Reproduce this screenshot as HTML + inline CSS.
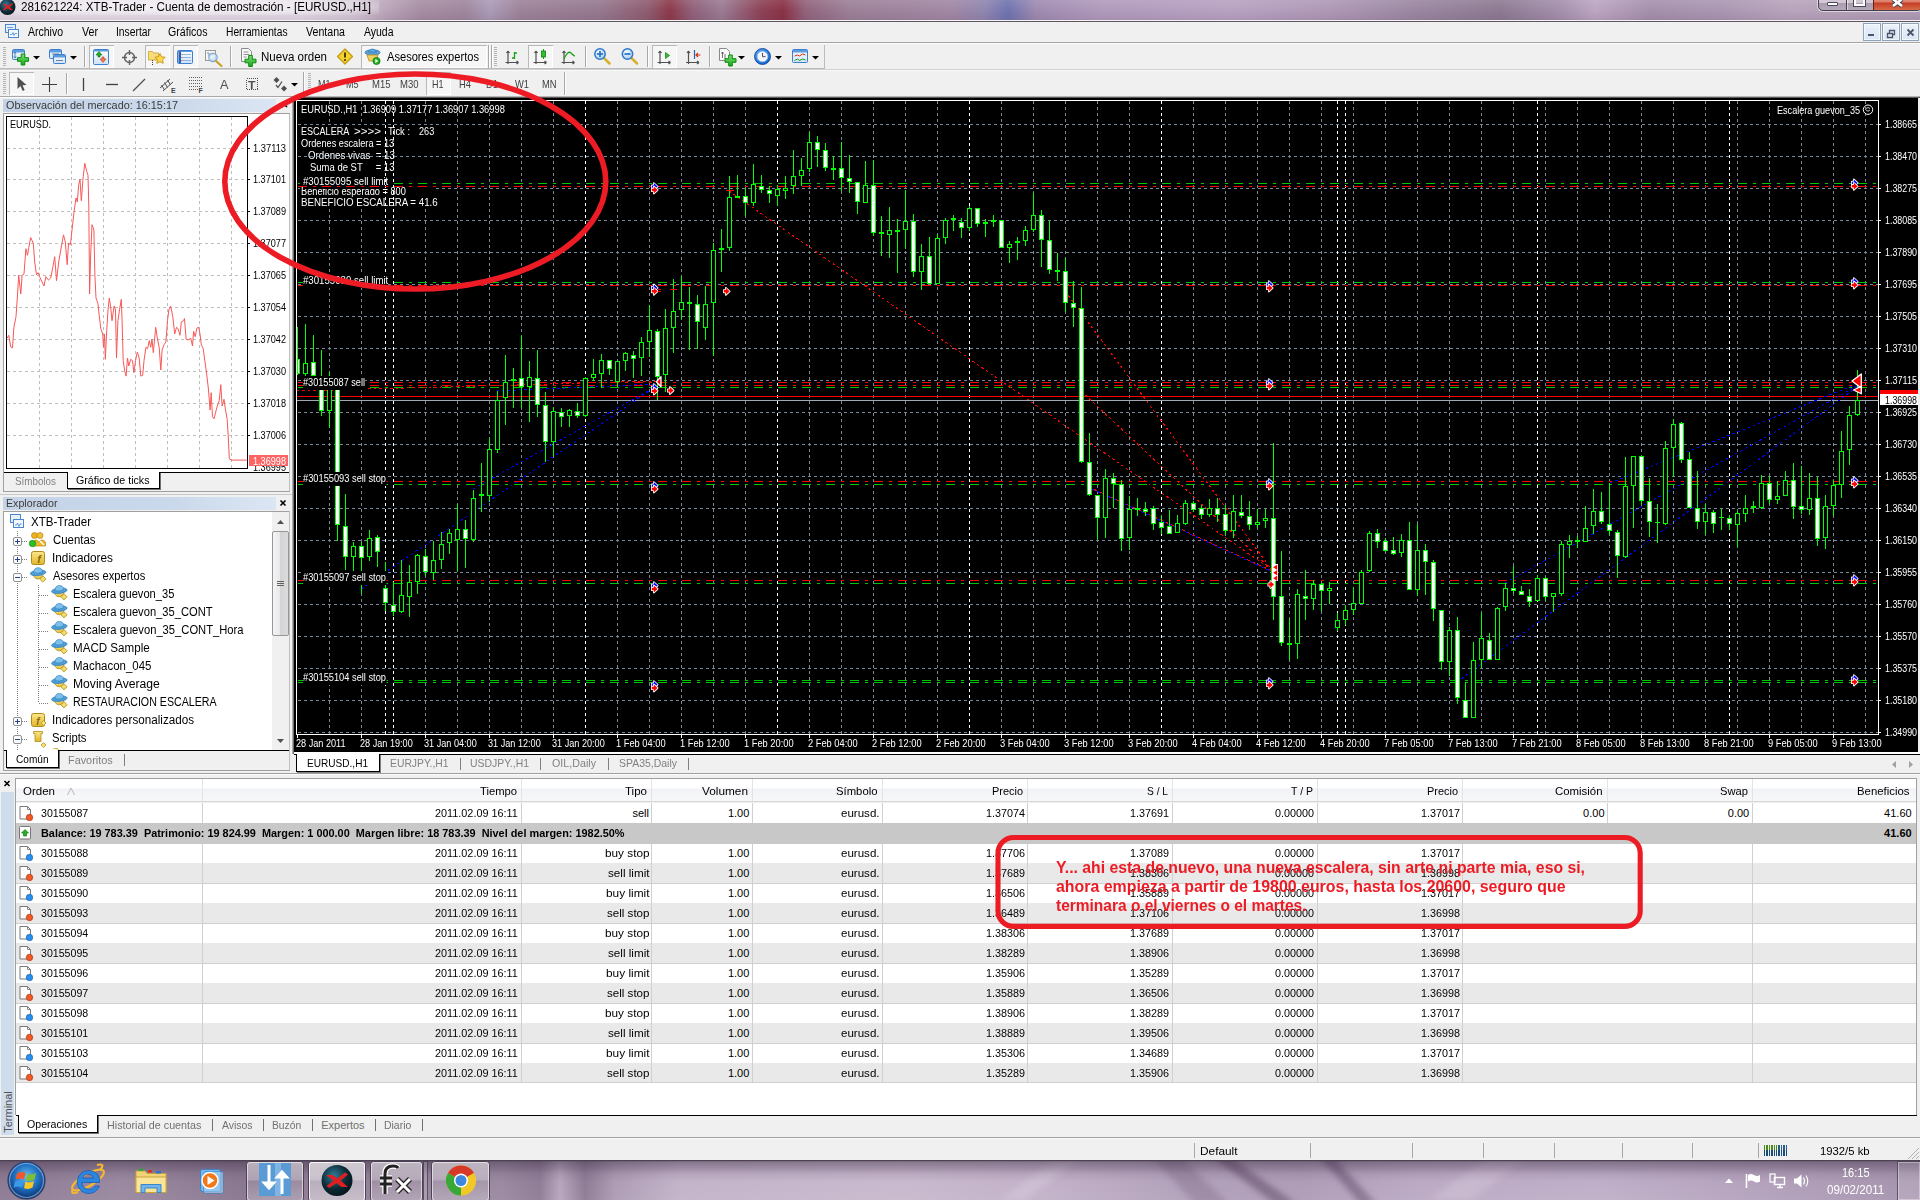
<!DOCTYPE html>
<html><head><meta charset="utf-8"><title>MT4</title>
<style>
html,body{margin:0;padding:0;}
body{width:1920px;height:1200px;overflow:hidden;position:relative;background:#f0f0f0;font-family:"Liberation Sans",sans-serif;}
.t{position:absolute;white-space:pre;transform-origin:0 50%;}
.r{position:absolute;}
svg{position:absolute;left:0;top:0;}
</style></head><body>
<div class="r" style="left:0px;top:0px;width:1920px;height:21px;background:linear-gradient(90deg,#e2d8e2 0,#e7dfe9 60px,#e2d9e4 300px,#d3c6d5 355px,#bba6ba 385px,#a78ea4 420px,#9f879d 465px,#ab9cb8 490px,#9d8399 520px,#95798f 600px,#8f5c70 648px,#8c3a4a 670px,#906079 692px,#9a7c94 722px,#8e4458 760px,#8a3246 783px,#92647c 806px,#9c8098 850px,#a288a4 950px,#8f86b0 985px,#6e74b0 1008px,#9f8bb0 1036px,#b09abc 1100px,#b8a2c2 1230px,#ae98b6 1330px,#9a86a0 1420px,#8d7a92 1500px,#a48fac 1560px,#bca6c2 1595px,#a590ac 1650px,#aa96b2 1720px,#b8a4bc 1790px,#b09cb6 1920px);"></div>
<div class="r" style="left:0px;top:0px;width:1920px;height:21px;background:linear-gradient(180deg,rgba(255,255,255,.10) 0,rgba(255,255,255,0) 50%,rgba(60,30,60,.10) 100%);"></div>
<div class="r" style="left:14px;top:0;width:365px;height:15px;background:radial-gradient(ellipse at 50% 45%,rgba(255,255,255,.55) 0,rgba(255,255,255,.35) 55%,rgba(255,255,255,0) 100%);"></div>
<div class="r" style="left:0px;top:20px;width:1920px;height:1px;background:#f6f2f6;"></div>
<div class="r" style="left:0px;top:21px;width:1920px;height:1px;background:#5c5660;"></div>
<svg width="1920" height="1200" viewBox="0 0 1920 1200"><defs><radialGradient id="ig" cx="40%" cy="35%" r="70%"><stop offset="0" stop-color="#3a7c9c"/><stop offset="0.6" stop-color="#10303c"/><stop offset="1" stop-color="#05141a"/></radialGradient></defs><circle cx="7.5" cy="7" r="8" fill="url(#ig)"/><path d="M3,4 L6,4 L8,6 L12,3 L13,4 L9.5,7 L13,10 L10,10 L7.5,8 L4,10.5 L3,9.5 L6,7 Z" fill="#e02020"/></svg>
<span class="t" style="left:21.00px;top:-1px;font-size:12.5px;line-height:17px;color:#000;transform:scaleX(0.9323);">281621224: XTB-Trader - Cuenta de demostración - [EURUSD.,H1]</span>
<div class="r" style="left:1818px;top:-6px;width:104px;height:17px;border:1px solid #45404c;border-radius:0 0 5px 5px;box-sizing:border-box;box-shadow:0 0 0 1px rgba(255,255,255,.55);background:linear-gradient(180deg,#d8cfdc 0,#d0c6d4 50%,#a89cae 52%,#b5a8ba 100%);"></div>
<div class="r" style="left:1873px;top:-5px;width:47px;height:15px;border-radius:0 0 4px 0;background:linear-gradient(180deg,#e8a090 0,#dc7c68 48%,#c43c24 52%,#d86a48 100%);border-left:1px solid #6a2018;"></div>
<div class="r" style="left:1846px;top:-5px;width:1px;height:15px;background:#45404c;"></div>
<div class="r" style="left:1847px;top:-5px;width:1px;height:15px;background:rgba(255,255,255,.5);"></div>
<div class="r" style="left:1827px;top:2px;width:11px;height:4px;background:#fff;border:1px solid #4a4858;border-radius:1px;box-sizing:border-box;"></div>
<div class="r" style="left:1854px;top:-3px;width:11px;height:9px;border:2px solid #fff;outline:1px solid #4a4858;box-sizing:border-box;"></div>
<svg width="1920" height="1200" viewBox="0 0 1920 1200"><path d="M1893,-1 L1902,6 M1902,-1 L1893,6" stroke="#4a4858" stroke-width="4.5"/><path d="M1893,-1 L1902,6 M1902,-1 L1893,6" stroke="#fff" stroke-width="2.6"/></svg>
<div class="r" style="left:0px;top:22px;width:1920px;height:20px;background:#f0f0f0;"></div>
<div class="r" style="left:0px;top:42px;width:1920px;height:1px;background:#a5a5a5;"></div>
<div class="r" style="left:0px;top:43px;width:1920px;height:1px;background:#fbfbfb;"></div>
<span class="t" style="left:28.00px;top:24px;font-size:12px;line-height:16px;color:#000;transform:scaleX(0.8747);">Archivo</span>
<span class="t" style="left:82.00px;top:24px;font-size:12px;line-height:16px;color:#000;transform:scaleX(0.8883);">Ver</span>
<span class="t" style="left:116.00px;top:24px;font-size:12px;line-height:16px;color:#000;transform:scaleX(0.8603);">Insertar</span>
<span class="t" style="left:168.00px;top:24px;font-size:12px;line-height:16px;color:#000;transform:scaleX(0.8841);">Gráficos</span>
<span class="t" style="left:226.00px;top:24px;font-size:12px;line-height:16px;color:#000;transform:scaleX(0.8539);">Herramientas</span>
<span class="t" style="left:306.00px;top:24px;font-size:12px;line-height:16px;color:#000;transform:scaleX(0.8855);">Ventana</span>
<span class="t" style="left:364.00px;top:24px;font-size:12px;line-height:16px;color:#000;transform:scaleX(0.8726);">Ayuda</span>
<svg width="1920" height="1200" viewBox="0 0 1920 1200" shape-rendering="crispEdges"><rect x="5.5" y="24.5" width="10" height="8" fill="#e6f0fb" stroke="#4a86d0"/><rect x="8.5" y="29.5" width="10" height="8" fill="#f4f9ff" stroke="#4a86d0"/><path d="M10,34.5 h2 l1,-2 l1,3 l1,-2 h2" stroke="#4a86d0" fill="none" shape-rendering="auto" stroke-width="0.8"/><path d="M7,27.5 h6" stroke="#4a86d0" stroke-width="0.8"/></svg>
<div class="r" style="left:1863px;top:23px;width:18px;height:18px;box-sizing:border-box;border:1px solid #8fa3b9;background:linear-gradient(180deg,#eef4fb 0,#e3edf8 30%,#d9e6f5 100%);box-shadow:inset 0 0 0 1px rgba(255,255,255,.6);"></div>
<div class="r" style="left:1882px;top:23px;width:18px;height:18px;box-sizing:border-box;border:1px solid #8fa3b9;background:linear-gradient(180deg,#eef4fb 0,#e3edf8 30%,#d9e6f5 100%);box-shadow:inset 0 0 0 1px rgba(255,255,255,.6);"></div>
<div class="r" style="left:1901px;top:23px;width:18px;height:18px;box-sizing:border-box;border:1px solid #8fa3b9;background:linear-gradient(180deg,#eef4fb 0,#e3edf8 30%,#d9e6f5 100%);box-shadow:inset 0 0 0 1px rgba(255,255,255,.6);"></div>
<svg width="1920" height="1200" viewBox="0 0 1920 1200"><rect x="1868" y="34" width="6" height="2" fill="#4a5568"/><path d="M1887.5,33.5 h5 v4 h-5 z M1889.5,33 v-2.5 h5 v4 h-2" stroke="#4a5568" stroke-width="1.3" fill="none"/><path d="M1907.5,29.5 l6,6 M1913.5,29.5 l-6,6" stroke="#4a5568" stroke-width="1.8"/></svg>
<div class="r" style="left:0px;top:69px;width:1920px;height:1px;background:#d0d0d0;"></div>
<div class="r" style="left:0px;top:70px;width:1920px;height:1px;background:#fafafa;"></div>
<div class="r" style="left:0px;top:96px;width:294px;height:1px;background:#a8a8a8;"></div>
<div class="r" style="left:0px;top:97px;width:294px;height:1px;background:#fbfbfb;"></div>
<span class="t" style="left:171.00px;top:85px;font-size:7px;line-height:11px;color:#404040;font-weight:bold;">E</span>
<span class="t" style="left:198.50px;top:85px;font-size:7px;line-height:11px;color:#404040;font-weight:bold;">F</span>
<span class="t" style="left:220.00px;top:76px;font-size:13px;line-height:17px;color:#505050;transform:scaleX(0.9804);">A</span>
<span class="t" style="left:248.30px;top:78px;font-size:11px;line-height:15px;color:#505050;font-weight:bold;transform:scaleX(1.1163);">T</span>
<svg width="1920" height="1200" viewBox="0 0 1920 1200">
<defs><linearGradient id="gp" x1="0" y1="0" x2="0" y2="1"><stop offset="0" stop-color="#7be07b"/><stop offset="1" stop-color="#18a818"/></linearGradient><linearGradient id="bw" x1="0" y1="0" x2="0" y2="1"><stop offset="0" stop-color="#fdfeff"/><stop offset="1" stop-color="#cfe2f7"/></linearGradient><radialGradient id="lens" cx="40%" cy="35%" r="70%"><stop offset="0" stop-color="#f4faff"/><stop offset="1" stop-color="#a8cff2"/></radialGradient><radialGradient id="clk" cx="40%" cy="35%" r="75%"><stop offset="0" stop-color="#5fb4ff"/><stop offset="1" stop-color="#0a58c8"/></radialGradient></defs>
<rect x="3" y="47" width="3" height="1" fill="#b4b4b4" shape-rendering="crispEdges"/>
<rect x="3" y="49" width="3" height="1" fill="#b4b4b4" shape-rendering="crispEdges"/>
<rect x="3" y="51" width="3" height="1" fill="#b4b4b4" shape-rendering="crispEdges"/>
<rect x="3" y="53" width="3" height="1" fill="#b4b4b4" shape-rendering="crispEdges"/>
<rect x="3" y="55" width="3" height="1" fill="#b4b4b4" shape-rendering="crispEdges"/>
<rect x="3" y="57" width="3" height="1" fill="#b4b4b4" shape-rendering="crispEdges"/>
<rect x="3" y="59" width="3" height="1" fill="#b4b4b4" shape-rendering="crispEdges"/>
<rect x="3" y="61" width="3" height="1" fill="#b4b4b4" shape-rendering="crispEdges"/>
<rect x="3" y="63" width="3" height="1" fill="#b4b4b4" shape-rendering="crispEdges"/>
<rect x="3" y="65" width="3" height="1" fill="#b4b4b4" shape-rendering="crispEdges"/>
<rect x="12.5" y="49.5" width="12" height="10" rx="1" fill="url(#bw)" stroke="#3c7fd0"/>
<rect x="13" y="50" width="11" height="2.5" fill="#5b9be0"/>
<path d="M15,52 v6 M14,53.5 l1,-1.5 l1,1.5 M14,56.5 l1,1.5 l1,-1.5" stroke="#4a6a90" stroke-width="0.8" fill="none"/>
<path d="M21.2,54 h3.6 v3.7 h3.7 v3.6 h-3.7 v3.7 h-3.6 v-3.7 h-3.7 v-3.6 h3.7 z" fill="url(#gp)" stroke="#0c8a0c" stroke-width="1"/>
<path d="M33,56 h7 l-3.5,3.5 z" fill="#000"/>
<rect x="49.5" y="49.5" width="12" height="9" rx="1" fill="url(#bw)" stroke="#3c7fd0"/>
<rect x="50" y="50" width="11" height="2.5" fill="#5b9be0"/>
<rect x="53.5" y="54.5" width="12" height="9" rx="1" fill="url(#bw)" stroke="#3c7fd0"/>
<rect x="54" y="55" width="11" height="2.5" fill="#5b9be0"/>
<path d="M52,54 h7 M56,60.5 h7" stroke="#4a6a90" stroke-width="0.8"/>
<path d="M70,56 h7 l-3.5,3.5 z" fill="#000"/>
<rect x="84" y="46" width="1" height="21" fill="#a8a8a8" shape-rendering="crispEdges"/><rect x="85" y="46" width="1" height="21" fill="#fdfdfd" shape-rendering="crispEdges"/>
<rect x="89.5" y="45.5" width="24" height="22" fill="#f6f6f6" stroke="#b9b9b9" shape-rendering="crispEdges"/>
<path d="M113.5,46 v21.5 h-24" stroke="#fff" fill="none" shape-rendering="crispEdges"/>
<rect x="93.5" y="49.5" width="15" height="15" rx="1" fill="url(#bw)" stroke="#3c7fd0"/>
<rect x="94" y="50" width="14" height="1.5" fill="#5b9be0"/>
<path d="M99,51.5 l-3,3.5 h2 v2 h2 v-2 h2 z" fill="#22b022" stroke="#0a700a" stroke-width="0.6"/><path d="M103,62.5 l-3,-3.5 h2 v-2 h2 v2 h2 z" fill="#f08050" stroke="#c03010" stroke-width="0.6"/>
<circle cx="129.5" cy="57.5" r="5" fill="none" stroke="#606060" stroke-width="1.4"/><path d="M129.5,50 v5 M129.5,60 v5 M122,57.5 h5 M132,57.5 h5" stroke="#606060" stroke-width="1.4"/>
<rect x="145.5" y="45.5" width="24" height="22" fill="#f6f6f6" stroke="#b9b9b9" shape-rendering="crispEdges"/>
<path d="M169.5,46 v21.5 h-24" stroke="#fff" fill="none" shape-rendering="crispEdges"/>
<path d="M148.5,51.500 h4 l1,1.500 h5 v7 h-10 z" fill="#f7dc7a" stroke="#c9a227" stroke-width="0.8"/><path d="M160,53.500 l1.600,3.300 3.600,.5 -2.600,2.500 .6,3.600 -3.200,-1.700 -3.200,1.700 .6,-3.600 -2.600,-2.500 3.600,-.5 z" fill="#ffd84a" stroke="#c08a10" stroke-width="0.8"/><path d="M152.500,60 v5" stroke="#404040" stroke-dasharray="1 1"/>
<rect x="173.5" y="45.5" width="24" height="22" fill="#f6f6f6" stroke="#b9b9b9" shape-rendering="crispEdges"/>
<path d="M197.5,46 v21.5 h-24" stroke="#fff" fill="none" shape-rendering="crispEdges"/>
<rect x="177.5" y="50.5" width="15" height="13" rx="1" fill="url(#bw)" stroke="#3c7fd0"/>
<rect x="178" y="51" width="14" height="1" fill="#5b9be0"/>
<rect x="178.500" y="51.500" width="2.500" height="11.500" fill="#2a62b8"/><path d="M183,54.500 h8 M183,57.500 h8 M183,60.500 h8" stroke="#7aa8e0" stroke-width="0.8"/><path d="M181.500,54.500 h1 M181.500,57.500 h1 M181.500,60.500 h1" stroke="#e02020"/>
<rect x="205.500" y="50.500" width="10" height="10" fill="#f4f4f4" stroke="#9a9a9a"/><path d="M207,53 h2 v3 h3 v-2 h2" stroke="#6080a0" fill="none" stroke-width="0.8"/><circle cx="213" cy="57.500" r="4.200" fill="url(#lens)" fill-opacity="0.85" stroke="#88a8cc" stroke-width="1.200"/><path d="M216,61 l5.500,5" stroke="#c9a227" stroke-width="2.200" stroke-linecap="round"/>
<rect x="230" y="46" width="1" height="21" fill="#a8a8a8" shape-rendering="crispEdges"/><rect x="231" y="46" width="1" height="21" fill="#fdfdfd" shape-rendering="crispEdges"/>
<path d="M241.500,48.500 h7 l3,3 v10 h-10 z" fill="#fafafa" stroke="#8a8a8a"/><path d="M243.500,52 h5 M243.500,54.500 h6 M243.500,57 h3" stroke="#707070" stroke-width="0.8"/>
<path d="M248.7,55.5 h3.6 v3.7 h3.7 v3.6 h-3.7 v3.7 h-3.6 v-3.7 h-3.7 v-3.6 h3.7 z" fill="url(#gp)" stroke="#0c8a0c" stroke-width="1"/>
<path d="M345,49 l7.500,7.500 -7.500,7.500 -7.500,-7.500 z" fill="#f4d030" stroke="#c09a10" stroke-width="1.200" stroke-linejoin="round"/><path d="M345,52.500 v5" stroke="#3a3000" stroke-width="1.800"/><circle cx="345" cy="60" r="1" fill="#3a3000"/>
<rect x="361.5" y="45.5" width="125" height="22" fill="#f6f6f6" stroke="#b9b9b9" shape-rendering="crispEdges"/>
<path d="M486.5,46 v21.5 h-125" stroke="#fff" fill="none" shape-rendering="crispEdges"/>
<ellipse cx="372.500" cy="52.500" rx="7.500" ry="2.800" fill="#58a0d8" stroke="#2e74b8" stroke-width="0.800"/><path d="M368.500,52 q4,-6 8,0 z" fill="#6cb4e8" stroke="#2e74b8" stroke-width="0.800"/><path d="M367,55 h11 l-2,6 h-7 z" fill="#f0d060" stroke="#b89020" stroke-width="0.800"/><circle cx="376.500" cy="61" r="3.600" fill="#22b022" stroke="#0a700a" stroke-width="0.700"/><path d="M375.300,59 v4 l3,-2 z" fill="#fff"/>
<rect x="488" y="45" width="1" height="23" fill="#a8a8a8" shape-rendering="crispEdges"/><rect x="489" y="45" width="1" height="23" fill="#fdfdfd" shape-rendering="crispEdges"/>
<rect x="491" y="45" width="1" height="23" fill="#a8a8a8" shape-rendering="crispEdges"/><rect x="492" y="45" width="1" height="23" fill="#fdfdfd" shape-rendering="crispEdges"/>
<rect x="494" y="47" width="3" height="1" fill="#b4b4b4" shape-rendering="crispEdges"/>
<rect x="494" y="49" width="3" height="1" fill="#b4b4b4" shape-rendering="crispEdges"/>
<rect x="494" y="51" width="3" height="1" fill="#b4b4b4" shape-rendering="crispEdges"/>
<rect x="494" y="53" width="3" height="1" fill="#b4b4b4" shape-rendering="crispEdges"/>
<rect x="494" y="55" width="3" height="1" fill="#b4b4b4" shape-rendering="crispEdges"/>
<rect x="494" y="57" width="3" height="1" fill="#b4b4b4" shape-rendering="crispEdges"/>
<rect x="494" y="59" width="3" height="1" fill="#b4b4b4" shape-rendering="crispEdges"/>
<rect x="494" y="61" width="3" height="1" fill="#b4b4b4" shape-rendering="crispEdges"/>
<rect x="494" y="63" width="3" height="1" fill="#b4b4b4" shape-rendering="crispEdges"/>
<rect x="494" y="65" width="3" height="1" fill="#b4b4b4" shape-rendering="crispEdges"/>
<path d="M508,51 v13 M505.5,62.5 h13 M508,51 l-1.500,2 M508,51 l1.500,2 M518.5,62.5 l-2,-1.500 M518.5,62.5 l-2,1.500" stroke="#505050" stroke-width="1.200" fill="none"/>
<path d="M514.500,52 v7 M514.500,53 h2.500 M514.500,58 h-2.500" stroke="#18a018" stroke-width="1.300" fill="none"/>
<rect x="528.5" y="45.5" width="24" height="22" fill="#f6f6f6" stroke="#b9b9b9" shape-rendering="crispEdges"/>
<path d="M552.5,46 v21.5 h-24" stroke="#fff" fill="none" shape-rendering="crispEdges"/>
<path d="M536,51 v13 M533.5,62.5 h13 M536,51 l-1.500,2 M536,51 l1.500,2 M546.5,62.5 l-2,-1.500 M546.5,62.5 l-2,1.500" stroke="#505050" stroke-width="1.200" fill="none"/>
<path d="M543.500,49 v10" stroke="#18a018"/><rect x="541.500" y="51" width="4" height="6" fill="#30c030" stroke="#0a800a" stroke-width="0.800"/>
<path d="M564,51 v13 M561.5,62.5 h13 M564,51 l-1.500,2 M564,51 l1.500,2 M574.5,62.5 l-2,-1.500 M574.5,62.5 l-2,1.500" stroke="#505050" stroke-width="1.200" fill="none"/>
<path d="M564,59 q4,-9 7,-6 t4,3" stroke="#18a018" stroke-width="1.200" fill="none"/>
<rect x="585" y="46" width="1" height="21" fill="#a8a8a8" shape-rendering="crispEdges"/><rect x="586" y="46" width="1" height="21" fill="#fdfdfd" shape-rendering="crispEdges"/>
<path d="M604,58 l5.500,5.500" stroke="#d8b030" stroke-width="2.600" stroke-linecap="round"/>
<circle cx="600" cy="54" r="5.200" fill="url(#lens)" stroke="#2f78c8" stroke-width="1.500"/>
<path d="M597,54 h6" stroke="#2f78c8" stroke-width="1.800"/>
<path d="M600,51 v6" stroke="#2f78c8" stroke-width="1.800"/>
<path d="M631.5,58 l5.500,5.500" stroke="#d8b030" stroke-width="2.600" stroke-linecap="round"/>
<circle cx="627.5" cy="54" r="5.200" fill="url(#lens)" stroke="#2f78c8" stroke-width="1.500"/>
<path d="M624.5,54 h6" stroke="#2f78c8" stroke-width="1.800"/>
<rect x="647" y="46" width="1" height="21" fill="#a8a8a8" shape-rendering="crispEdges"/><rect x="648" y="46" width="1" height="21" fill="#fdfdfd" shape-rendering="crispEdges"/>
<rect x="652.5" y="45.5" width="24" height="22" fill="#f6f6f6" stroke="#b9b9b9" shape-rendering="crispEdges"/>
<path d="M676.5,46 v21.5 h-24" stroke="#fff" fill="none" shape-rendering="crispEdges"/>
<path d="M660,51 v13 M657.5,62.5 h13 M660,51 l-1.500,2 M660,51 l1.500,2 M670.5,62.5 l-2,-1.500 M670.5,62.5 l-2,1.500" stroke="#505050" stroke-width="1.200" fill="none"/>
<path d="M665.500,52.500 v6 l4,-3 z" fill="#30c030" stroke="#0a800a" stroke-width="0.700"/>
<path d="M688.5,51 v13 M686,62.5 h13 M688.5,51 l-1.500,2 M688.5,51 l1.500,2 M699,62.5 l-2,-1.500 M699,62.5 l-2,1.500" stroke="#505050" stroke-width="1.200" fill="none"/>
<path d="M694.500,50 v9" stroke="#2a62b8" stroke-width="1.200"/><path d="M700.500,55 h-4.500 M698,53 l-2,2 2,2" stroke="#d03010" stroke-width="1.200" fill="none"/>
<rect x="709" y="46" width="1" height="21" fill="#a8a8a8" shape-rendering="crispEdges"/><rect x="710" y="46" width="1" height="21" fill="#fdfdfd" shape-rendering="crispEdges"/>
<path d="M719.500,48.500 h7 l3,3 v9 h-10 z" fill="#fafafa" stroke="#8a8a8a"/><path d="M722.500,52 v6 M721,53 h3 M725,54 v5" stroke="#606060" stroke-width="0.900"/>
<path d="M728.7,55 h3.6 v3.7 h3.7 v3.6 h-3.7 v3.7 h-3.6 v-3.7 h-3.7 v-3.6 h3.7 z" fill="url(#gp)" stroke="#0c8a0c" stroke-width="1"/>
<path d="M738,56 h7 l-3.5,3.5 z" fill="#000"/>
<circle cx="762.500" cy="56.500" r="8" fill="url(#clk)" stroke="#0a3c90" stroke-width="0.800"/><circle cx="762.500" cy="56.500" r="5.300" fill="#f2f6fb" stroke="#9ab8e0" stroke-width="0.600"/><path d="M762.500,53 v3.700 h3" stroke="#505050" stroke-width="1" fill="none"/>
<path d="M775,56 h7 l-3.5,3.5 z" fill="#000"/>
<rect x="792.5" y="49.5" width="15" height="13" rx="1" fill="url(#bw)" stroke="#3c7fd0"/>
<rect x="793" y="50" width="14" height="2.5" fill="#5b9be0"/>
<path d="M794.500,56 l3,-1 2,1 3,-2 3,1" stroke="#d03010" stroke-width="1" fill="none"/><path d="M794.500,60.500 l3,-1.500 2,1.500 3,-1.500 3,1" stroke="#18a018" stroke-width="1" fill="none"/>
<path d="M812,56 h7 l-3.5,3.5 z" fill="#000"/>
<path d="M0,68.500 H824.500 V45" stroke="#bcbcbc" fill="none" shape-rendering="crispEdges"/>
<rect x="3" y="73" width="3" height="1" fill="#b4b4b4" shape-rendering="crispEdges"/>
<rect x="3" y="75" width="3" height="1" fill="#b4b4b4" shape-rendering="crispEdges"/>
<rect x="3" y="77" width="3" height="1" fill="#b4b4b4" shape-rendering="crispEdges"/>
<rect x="3" y="79" width="3" height="1" fill="#b4b4b4" shape-rendering="crispEdges"/>
<rect x="3" y="81" width="3" height="1" fill="#b4b4b4" shape-rendering="crispEdges"/>
<rect x="3" y="83" width="3" height="1" fill="#b4b4b4" shape-rendering="crispEdges"/>
<rect x="3" y="85" width="3" height="1" fill="#b4b4b4" shape-rendering="crispEdges"/>
<rect x="3" y="87" width="3" height="1" fill="#b4b4b4" shape-rendering="crispEdges"/>
<rect x="3" y="89" width="3" height="1" fill="#b4b4b4" shape-rendering="crispEdges"/>
<rect x="3" y="91" width="3" height="1" fill="#b4b4b4" shape-rendering="crispEdges"/>
<rect x="3" y="93" width="3" height="1" fill="#b4b4b4" shape-rendering="crispEdges"/>
<rect x="9.5" y="72.5" width="24" height="22" fill="#f6f6f6" stroke="#b9b9b9" shape-rendering="crispEdges"/>
<path d="M33.5,73 v21.5 h-24" stroke="#fff" fill="none" shape-rendering="crispEdges"/>
<path d="M17.500,77 v12 l3,-3 2.200,5 2,-1 -2.200,-4.800 4,-.2 z" fill="#505050"/>
<path d="M49.500,77 v15 M42,84.500 h15" stroke="#404040" stroke-width="1.100"/>
<rect x="66" y="73" width="1" height="21" fill="#a8a8a8" shape-rendering="crispEdges"/><rect x="67" y="73" width="1" height="21" fill="#fdfdfd" shape-rendering="crispEdges"/>
<path d="M83.500,78 v13" stroke="#404040" stroke-width="1.300"/><path d="M106,84.500 h12" stroke="#404040" stroke-width="1.300"/><path d="M133,91 l12,-12" stroke="#505050" stroke-width="1.300"/>
<path d="M160,88 l10,-9 M163,91 l10,-9 M161.500,85 l3,5 M164.500,82.500 l3,5 M167.500,80 l3,5" stroke="#505050" stroke-width="1" fill="none"/>
<path d="M188.500,77.5 h14" stroke="#606060" stroke-dasharray="1 1" shape-rendering="crispEdges"/>
<path d="M188.500,80.5 h14" stroke="#606060" stroke-dasharray="1 1" shape-rendering="crispEdges"/>
<path d="M188.500,83.5 h14" stroke="#606060" stroke-dasharray="1 1" shape-rendering="crispEdges"/>
<path d="M188.500,86.5 h14" stroke="#606060" stroke-dasharray="1 1" shape-rendering="crispEdges"/>
<path d="M188.500,89.5 h10" stroke="#606060" stroke-dasharray="1 1" shape-rendering="crispEdges"/>
<rect x="246.500" y="78.500" width="11" height="11" fill="none" stroke="#505050" stroke-dasharray="1 1" shape-rendering="crispEdges"/>
<path d="M273.500,80 l3,-3 3,3 -3,3 z M281,88.500 l3,-3 3,3 -3,3 z" fill="#505050"/><path d="M276,85 l2,2.500 4,-6" stroke="#505050" stroke-width="1.300" fill="none"/>
<path d="M291,83 h7 l-3.5,3.5 z" fill="#000"/>
<rect x="303" y="72" width="1" height="23" fill="#a8a8a8" shape-rendering="crispEdges"/><rect x="304" y="72" width="1" height="23" fill="#fdfdfd" shape-rendering="crispEdges"/>
<rect x="308" y="73" width="3" height="1" fill="#b4b4b4" shape-rendering="crispEdges"/>
<rect x="308" y="75" width="3" height="1" fill="#b4b4b4" shape-rendering="crispEdges"/>
<rect x="308" y="77" width="3" height="1" fill="#b4b4b4" shape-rendering="crispEdges"/>
<rect x="308" y="79" width="3" height="1" fill="#b4b4b4" shape-rendering="crispEdges"/>
<rect x="308" y="81" width="3" height="1" fill="#b4b4b4" shape-rendering="crispEdges"/>
<rect x="308" y="83" width="3" height="1" fill="#b4b4b4" shape-rendering="crispEdges"/>
<rect x="308" y="85" width="3" height="1" fill="#b4b4b4" shape-rendering="crispEdges"/>
<rect x="308" y="87" width="3" height="1" fill="#b4b4b4" shape-rendering="crispEdges"/>
<rect x="308" y="89" width="3" height="1" fill="#b4b4b4" shape-rendering="crispEdges"/>
<rect x="308" y="91" width="3" height="1" fill="#b4b4b4" shape-rendering="crispEdges"/>
<rect x="308" y="93" width="3" height="1" fill="#b4b4b4" shape-rendering="crispEdges"/>
<rect x="426.5" y="72.5" width="24" height="22" fill="#f6f6f6" stroke="#b9b9b9" shape-rendering="crispEdges"/>
<path d="M450.5,73 v21.5 h-24" stroke="#fff" fill="none" shape-rendering="crispEdges"/>
<rect x="564" y="72" width="1" height="23" fill="#a8a8a8" shape-rendering="crispEdges"/><rect x="565" y="72" width="1" height="23" fill="#fdfdfd" shape-rendering="crispEdges"/>
</svg>
<span class="t" style="left:261.00px;top:49px;font-size:12px;line-height:16px;color:#000;transform:scaleX(0.9605);">Nueva orden</span>
<span class="t" style="left:387.00px;top:49px;font-size:12px;line-height:16px;color:#000;transform:scaleX(0.9257);">Asesores expertos</span>
<span class="t" style="left:318.00px;top:77px;font-size:11px;line-height:15px;color:#404040;transform:scaleX(0.8181);">M1</span>
<span class="t" style="left:346.00px;top:77px;font-size:11px;line-height:15px;color:#404040;transform:scaleX(0.8181);">M5</span>
<span class="t" style="left:372.00px;top:77px;font-size:11px;line-height:15px;color:#404040;transform:scaleX(0.8646);">M15</span>
<span class="t" style="left:400.00px;top:77px;font-size:11px;line-height:15px;color:#404040;transform:scaleX(0.8646);">M30</span>
<span class="t" style="left:431.50px;top:77px;font-size:11px;line-height:15px;color:#404040;transform:scaleX(0.8179);">H1</span>
<span class="t" style="left:458.50px;top:77px;font-size:11px;line-height:15px;color:#404040;transform:scaleX(0.8534);">H4</span>
<span class="t" style="left:486.00px;top:77px;font-size:11px;line-height:15px;color:#404040;transform:scaleX(0.8534);">D1</span>
<span class="t" style="left:515.00px;top:77px;font-size:11px;line-height:15px;color:#404040;transform:scaleX(0.8485);">W1</span>
<span class="t" style="left:541.50px;top:77px;font-size:11px;line-height:15px;color:#404040;transform:scaleX(0.8476);">MN</span>
<div class="r" style="left:3px;top:99px;width:273px;height:13px;background:linear-gradient(90deg,#c4d3e6 0,#c9d8ea 60%,#dbe6f3 100%);"></div>
<span class="t" style="left:6.00px;top:98px;font-size:11px;line-height:15px;color:#3a3a3a;transform:scaleX(0.9870);">Observación del mercado: 16:15:17</span>
<svg width="1920" height="1200" viewBox="0 0 1920 1200"><path d="M282,102 l5,5 M287,102 l-5,5" stroke="#000" stroke-width="1.600"/><path d="M280.500,500.500 l5,5 M285.500,500.500 l-5,5" stroke="#000" stroke-width="1.600"/></svg>
<div class="r" style="left:3px;top:113px;width:1px;height:378px;background:#a0a0a0;"></div>
<div class="r" style="left:289px;top:113px;width:1px;height:378px;background:#c0c0c0;"></div>
<div class="r" style="left:3px;top:113px;width:287px;height:1px;background:#a0a0a0;"></div>
<div class="r" style="left:4px;top:114px;width:285px;height:358px;background:#fff;"></div>
<svg width="1920" height="1200" viewBox="0 0 1920 1200">
<line x1="7" y1="148.5" x2="247" y2="148.5" stroke="#bebebe" stroke-dasharray="3 3" shape-rendering="crispEdges"/>
<rect x="247" y="148" width="3" height="1" fill="#000" shape-rendering="crispEdges"/>
<line x1="7" y1="179.5" x2="247" y2="179.5" stroke="#bebebe" stroke-dasharray="3 3" shape-rendering="crispEdges"/>
<rect x="247" y="179" width="3" height="1" fill="#000" shape-rendering="crispEdges"/>
<line x1="7" y1="211.5" x2="247" y2="211.5" stroke="#bebebe" stroke-dasharray="3 3" shape-rendering="crispEdges"/>
<rect x="247" y="211" width="3" height="1" fill="#000" shape-rendering="crispEdges"/>
<line x1="7" y1="243.5" x2="247" y2="243.5" stroke="#bebebe" stroke-dasharray="3 3" shape-rendering="crispEdges"/>
<rect x="247" y="243" width="3" height="1" fill="#000" shape-rendering="crispEdges"/>
<line x1="7" y1="275.5" x2="247" y2="275.5" stroke="#bebebe" stroke-dasharray="3 3" shape-rendering="crispEdges"/>
<rect x="247" y="275" width="3" height="1" fill="#000" shape-rendering="crispEdges"/>
<line x1="7" y1="307.5" x2="247" y2="307.5" stroke="#bebebe" stroke-dasharray="3 3" shape-rendering="crispEdges"/>
<rect x="247" y="307" width="3" height="1" fill="#000" shape-rendering="crispEdges"/>
<line x1="7" y1="339.5" x2="247" y2="339.5" stroke="#bebebe" stroke-dasharray="3 3" shape-rendering="crispEdges"/>
<rect x="247" y="339" width="3" height="1" fill="#000" shape-rendering="crispEdges"/>
<line x1="7" y1="371.5" x2="247" y2="371.5" stroke="#bebebe" stroke-dasharray="3 3" shape-rendering="crispEdges"/>
<rect x="247" y="371" width="3" height="1" fill="#000" shape-rendering="crispEdges"/>
<line x1="7" y1="403.5" x2="247" y2="403.5" stroke="#bebebe" stroke-dasharray="3 3" shape-rendering="crispEdges"/>
<rect x="247" y="403" width="3" height="1" fill="#000" shape-rendering="crispEdges"/>
<line x1="7" y1="435.5" x2="247" y2="435.5" stroke="#bebebe" stroke-dasharray="3 3" shape-rendering="crispEdges"/>
<rect x="247" y="435" width="3" height="1" fill="#000" shape-rendering="crispEdges"/>
<line x1="39.5" y1="117" x2="39.5" y2="468" stroke="#bebebe" stroke-dasharray="3 3" shape-rendering="crispEdges"/>
<line x1="71.5" y1="117" x2="71.5" y2="468" stroke="#bebebe" stroke-dasharray="3 3" shape-rendering="crispEdges"/>
<line x1="103.5" y1="117" x2="103.5" y2="468" stroke="#bebebe" stroke-dasharray="3 3" shape-rendering="crispEdges"/>
<line x1="135.5" y1="117" x2="135.5" y2="468" stroke="#bebebe" stroke-dasharray="3 3" shape-rendering="crispEdges"/>
<line x1="167.5" y1="117" x2="167.5" y2="468" stroke="#bebebe" stroke-dasharray="3 3" shape-rendering="crispEdges"/>
<line x1="199.5" y1="117" x2="199.5" y2="468" stroke="#bebebe" stroke-dasharray="3 3" shape-rendering="crispEdges"/>
<line x1="231.5" y1="117" x2="231.5" y2="468" stroke="#bebebe" stroke-dasharray="3 3" shape-rendering="crispEdges"/>
<polyline points="7.2,338.0 8.8,335.3 10.7,346.8 12.5,347.9 13.9,327.3 16.0,316.7 17.3,298.0 18.7,275.3 20.8,294.0 22.1,275.3 24.0,274.0 25.9,248.7 27.5,255.3 28.8,247.3 30.7,237.5 33.3,243.3 34.7,262.0 36.5,274.8 38.1,272.7 40.0,277.5 42.1,282.0 44.0,286.0 45.9,276.7 48.5,280.1 50.7,278.0 52.8,267.3 54.7,256.7 56.5,280.7 58.7,262.0 60.8,250.0 63.5,234.8 65.3,242.0 67.2,264.7 68.5,243.3 70.4,244.7 72.0,230.0 74.1,211.3 76.0,198.0 77.3,202.0 78.7,184.7 80.0,179.3 81.3,200.7 83.2,176.7 84.8,163.3 86.7,171.3 88.0,175.3 88.8,206.0 89.6,294.0 90.7,254.0 92.0,224.7 93.9,230.0 94.9,275.3 96.0,298.0 97.9,303.3 99.2,315.3 100.8,328.7 102.7,334.0 103.5,347.3 104.5,334.0 105.3,359.3 106.7,331.3 108.0,310.0 109.3,298.0 110.7,307.3 112.0,320.7 114.1,306.0 115.5,310.0 116.5,358.0 117.9,320.7 119.5,310.0 121.3,299.3 122.1,320.7 123.2,360.7 124.8,371.3 126.1,376.1 127.5,358.0 128.8,366.0 130.7,359.3 132.5,360.7 133.9,372.7 135.5,360.7 137.3,352.1 139.2,358.0 140.8,376.1 142.7,375.3 144.0,360.7 145.9,347.3 147.5,348.7 149.3,340.7 150.7,347.3 152.0,339.3 153.3,352.7 154.7,338.0 155.7,327.3 157.3,338.0 159.2,347.3 160.8,370.0 162.1,350.0 164.0,344.7 165.9,342.0 167.5,320.7 168.8,310.0 170.7,306.0 172.8,316.7 174.7,334.0 176.5,327.3 178.1,328.7 180.0,335.3 181.3,322.0 183.5,320.7 184.5,318.5 186.1,339.3 188.8,339.9 190.7,338.0 192.5,346.0 193.6,331.3 195.2,336.7 196.8,328.1 198.7,327.3 200.0,334.0 201.3,344.7 203.2,348.7 204.8,360.7 206.7,374.0 208.5,390.0 210.1,410.0 211.2,392.7 212.5,416.7 214.1,418.8 215.5,412.7 217.3,406.0 219.2,400.7 220.8,384.7 222.1,406.0 224.0,399.3 225.3,408.7 227.2,419.3 228.3,438.0 229.3,458.8 231.5,460.1 246.7,460.1" fill="none" stroke="#f85858" stroke-width="1"/>
<rect x="6.500" y="116.500" width="241" height="352" fill="none" stroke="#000" shape-rendering="crispEdges"/>
</svg>
<span class="t" style="left:9.50px;top:118px;font-size:10px;line-height:14px;color:#000;transform:scaleX(0.9110);">EURUSD.</span>
<span class="t" style="left:253.00px;top:142px;font-size:10px;line-height:14px;color:#000;transform:scaleX(0.9322);">1.37113</span>
<span class="t" style="left:253.00px;top:173px;font-size:10px;line-height:14px;color:#000;transform:scaleX(0.9130);">1.37101</span>
<span class="t" style="left:253.00px;top:205px;font-size:10px;line-height:14px;color:#000;transform:scaleX(0.9130);">1.37089</span>
<span class="t" style="left:253.00px;top:237px;font-size:10px;line-height:14px;color:#000;transform:scaleX(0.9130);">1.37077</span>
<span class="t" style="left:253.00px;top:269px;font-size:10px;line-height:14px;color:#000;transform:scaleX(0.9130);">1.37065</span>
<span class="t" style="left:253.00px;top:301px;font-size:10px;line-height:14px;color:#000;transform:scaleX(0.9130);">1.37054</span>
<span class="t" style="left:253.00px;top:333px;font-size:10px;line-height:14px;color:#000;transform:scaleX(0.9130);">1.37042</span>
<span class="t" style="left:253.00px;top:365px;font-size:10px;line-height:14px;color:#000;transform:scaleX(0.9130);">1.37030</span>
<span class="t" style="left:253.00px;top:397px;font-size:10px;line-height:14px;color:#000;transform:scaleX(0.9130);">1.37018</span>
<span class="t" style="left:253.00px;top:429px;font-size:10px;line-height:14px;color:#000;transform:scaleX(0.9130);">1.37006</span>
<span class="t" style="left:253.00px;top:461px;font-size:10px;line-height:14px;color:#000;transform:scaleX(0.9130);">1.36995</span>
<div class="r" style="left:249px;top:455px;width:39px;height:11px;background:#ff6464;"></div>
<span class="t" style="left:253.00px;top:455px;font-size:10px;line-height:14px;color:#fff;transform:scaleX(0.9130);">1.36998</span>
<div class="r" style="left:4px;top:472px;width:285px;height:1px;background:#000;"></div>
<div class="r" style="left:4px;top:473px;width:285px;height:18px;background:#f0f0f0;"></div>
<div class="r" style="left:67px;top:472px;width:93px;height:17px;background:#fff;border:1px solid #000;border-top:none;box-sizing:border-box;box-shadow:1px 1px 0 #707070;"></div>
<span class="t" style="left:15.00px;top:474px;font-size:11px;line-height:15px;color:#808080;transform:scaleX(0.8942);">Símbolos</span>
<span class="t" style="left:76.00px;top:473px;font-size:11px;line-height:15px;color:#000;transform:scaleX(0.9697);">Gráfico de ticks</span>
<div class="r" style="left:3px;top:491px;width:287px;height:1px;background:#a0a0a0;"></div>
<div class="r" style="left:0px;top:494px;width:292px;height:1px;background:#c8c8c8;"></div>
<div class="r" style="left:3px;top:497px;width:273px;height:13px;background:linear-gradient(90deg,#c4d3e6 0,#c9d8ea 60%,#dbe6f3 100%);"></div>
<span class="t" style="left:5.50px;top:496px;font-size:11px;line-height:15px;color:#3a3a3a;transform:scaleX(0.9682);">Explorador</span>
<div class="r" style="left:3px;top:511px;width:287px;height:1px;background:#a0a0a0;"></div>
<div class="r" style="left:3px;top:511px;width:1px;height:259px;background:#a0a0a0;"></div>
<div class="r" style="left:289px;top:511px;width:1px;height:259px;background:#c0c0c0;"></div>
<div class="r" style="left:4px;top:512px;width:285px;height:238px;background:#fff;"></div>
<div class="r" style="left:272px;top:512px;width:17px;height:238px;background:#f0f0f0;"></div>
<div class="r" style="left:272px;top:531px;width:17px;height:105px;box-sizing:border-box;border:1px solid #979797;border-radius:2px;background:linear-gradient(90deg,#f4f4f4 0,#e9e9ea 45%,#d4d4d6 50%,#dcdcde 100%);"></div>
<svg width="1920" height="1200" viewBox="0 0 1920 1200"><path d="M277,524 l3.500,-4 3.500,4 z M277,739 l3.500,4 3.500,-4 z" fill="#505050"/><path d="M277,581.500 h7 M277,583.500 h7 M277,585.500 h7" stroke="#606060" shape-rendering="crispEdges"/></svg>
<svg width="1920" height="1200" viewBox="0 0 1920 1200">
<defs><linearGradient id="gold" x1="0" y1="0" x2="0" y2="1"><stop offset="0" stop-color="#fbe88a"/><stop offset="1" stop-color="#e0b62c"/></linearGradient></defs>
<path d="M17.500,531 V750 M38.500,585 V702" stroke="#808080" stroke-dasharray="1 1" shape-rendering="crispEdges"/>
<g shape-rendering="crispEdges"><rect x="10.500" y="514.500" width="10" height="8" fill="#e6f0fb" stroke="#4a86d0"/><rect x="13.500" y="519.500" width="10" height="8" fill="#f4f9ff" stroke="#4a86d0"/></g><path d="M15,525 h1.500 l1,-2 1.500,3.500 1,-2.500 h2" stroke="#4a86d0" fill="none" stroke-width="0.800"/>
<rect x="13.500" y="537.5" width="8" height="8" rx="1.5" fill="#fafafa" stroke="#919191"/>
<path d="M15,541.5 h5" stroke="#27408b" shape-rendering="crispEdges"/>
<path d="M17.500,539 v5" stroke="#27408b" shape-rendering="crispEdges"/>
<path d="M22,541.5 H28" stroke="#808080" stroke-dasharray="1 1" shape-rendering="crispEdges"/>
<circle cx="34.500" cy="535.500" r="3" fill="#f0b020" stroke="#a87808" stroke-width="0.600"/><circle cx="40" cy="535.500" r="3" fill="#f0c030" stroke="#a87808" stroke-width="0.600"/><path d="M33,546 v-4 q3,-4 6,0 q3,-4 6.500,0 v4 z" fill="#e8b828" stroke="#a87808" stroke-width="0.600"/><circle cx="32.500" cy="543.500" r="3.200" fill="#28c028" stroke="#0a800a" stroke-width="0.600"/><path d="M40,541 l4,4" stroke="#fff" stroke-width="1.500"/>
<rect x="13.500" y="555.5" width="8" height="8" rx="1.5" fill="#fafafa" stroke="#919191"/>
<path d="M15,559.5 h5" stroke="#27408b" shape-rendering="crispEdges"/>
<path d="M17.500,557 v5" stroke="#27408b" shape-rendering="crispEdges"/>
<path d="M22,559.5 H28" stroke="#808080" stroke-dasharray="1 1" shape-rendering="crispEdges"/>
<rect x="31.500" y="551.500" width="13" height="13" rx="2" fill="url(#gold)" stroke="#b08a18"/>
<rect x="13.500" y="573.5" width="8" height="8" rx="1.5" fill="#fafafa" stroke="#919191"/>
<path d="M15,577.5 h5" stroke="#27408b" shape-rendering="crispEdges"/>
<path d="M22,577.5 H28" stroke="#808080" stroke-dasharray="1 1" shape-rendering="crispEdges"/>
<path d="M33.4,574.6 a4.55,4.4 0 0 0 9.1,0 z" fill="url(#gold)" stroke="#b08a18" stroke-width="0.700"/>
<path d="M39.7,579 l3.1,-3.1 3.1,3.1 -3.1,3.1z" fill="#f4dc6a" stroke="#b08a18" stroke-width="0.800"/>
<ellipse cx="38.1" cy="572.9" rx="7.800" ry="2.700" transform="rotate(-6 38.1 572.9)" fill="#4f9fd6" stroke="#2a78b8" stroke-width="0.700"/>
<path d="M33.7,572.7 q0.300,-5 4.400,-5 q4.100,0 4.400,4.300 q-4.400,2.200 -8.800,.7z" fill="#7cc0ee" stroke="#2a78b8" stroke-width="0.600"/>
<path d="M39,595.5 H49" stroke="#808080" stroke-dasharray="1 1" shape-rendering="crispEdges"/>
<path d="M54.6,592.4 a4.55,4.4 0 0 0 9.1,0 z" fill="url(#gold)" stroke="#b08a18" stroke-width="0.700"/>
<path d="M60.9,596.8 l3.1,-3.1 3.1,3.1 -3.1,3.1z" fill="#f4dc6a" stroke="#b08a18" stroke-width="0.800"/>
<ellipse cx="59.3" cy="590.7" rx="7.800" ry="2.700" transform="rotate(-6 59.3 590.7)" fill="#4f9fd6" stroke="#2a78b8" stroke-width="0.700"/>
<path d="M54.9,590.5 q0.300,-5 4.400,-5 q4.100,0 4.400,4.300 q-4.400,2.200 -8.800,.7z" fill="#7cc0ee" stroke="#2a78b8" stroke-width="0.600"/>
<path d="M39,613.5 H49" stroke="#808080" stroke-dasharray="1 1" shape-rendering="crispEdges"/>
<path d="M54.6,610.4 a4.55,4.4 0 0 0 9.1,0 z" fill="url(#gold)" stroke="#b08a18" stroke-width="0.700"/>
<path d="M60.9,614.8 l3.1,-3.1 3.1,3.1 -3.1,3.1z" fill="#f4dc6a" stroke="#b08a18" stroke-width="0.800"/>
<ellipse cx="59.3" cy="608.7" rx="7.800" ry="2.700" transform="rotate(-6 59.3 608.7)" fill="#4f9fd6" stroke="#2a78b8" stroke-width="0.700"/>
<path d="M54.9,608.5 q0.300,-5 4.400,-5 q4.100,0 4.400,4.300 q-4.400,2.200 -8.800,.7z" fill="#7cc0ee" stroke="#2a78b8" stroke-width="0.600"/>
<path d="M39,631.5 H49" stroke="#808080" stroke-dasharray="1 1" shape-rendering="crispEdges"/>
<path d="M54.6,628.4 a4.55,4.4 0 0 0 9.1,0 z" fill="url(#gold)" stroke="#b08a18" stroke-width="0.700"/>
<path d="M60.9,632.8 l3.1,-3.1 3.1,3.1 -3.1,3.1z" fill="#f4dc6a" stroke="#b08a18" stroke-width="0.800"/>
<ellipse cx="59.3" cy="626.7" rx="7.800" ry="2.700" transform="rotate(-6 59.3 626.7)" fill="#4f9fd6" stroke="#2a78b8" stroke-width="0.700"/>
<path d="M54.9,626.5 q0.300,-5 4.400,-5 q4.100,0 4.400,4.300 q-4.400,2.200 -8.800,.7z" fill="#7cc0ee" stroke="#2a78b8" stroke-width="0.600"/>
<path d="M39,649.5 H49" stroke="#808080" stroke-dasharray="1 1" shape-rendering="crispEdges"/>
<path d="M54.6,646.4 a4.55,4.4 0 0 0 9.1,0 z" fill="url(#gold)" stroke="#b08a18" stroke-width="0.700"/>
<path d="M60.9,650.8 l3.1,-3.1 3.1,3.1 -3.1,3.1z" fill="#f4dc6a" stroke="#b08a18" stroke-width="0.800"/>
<ellipse cx="59.3" cy="644.7" rx="7.800" ry="2.700" transform="rotate(-6 59.3 644.7)" fill="#4f9fd6" stroke="#2a78b8" stroke-width="0.700"/>
<path d="M54.9,644.5 q0.300,-5 4.400,-5 q4.100,0 4.400,4.300 q-4.400,2.200 -8.800,.7z" fill="#7cc0ee" stroke="#2a78b8" stroke-width="0.600"/>
<path d="M39,667.5 H49" stroke="#808080" stroke-dasharray="1 1" shape-rendering="crispEdges"/>
<path d="M54.6,664.4 a4.55,4.4 0 0 0 9.1,0 z" fill="url(#gold)" stroke="#b08a18" stroke-width="0.700"/>
<path d="M60.9,668.8 l3.1,-3.1 3.1,3.1 -3.1,3.1z" fill="#f4dc6a" stroke="#b08a18" stroke-width="0.800"/>
<ellipse cx="59.3" cy="662.7" rx="7.800" ry="2.700" transform="rotate(-6 59.3 662.7)" fill="#4f9fd6" stroke="#2a78b8" stroke-width="0.700"/>
<path d="M54.9,662.5 q0.300,-5 4.400,-5 q4.100,0 4.400,4.300 q-4.400,2.200 -8.800,.7z" fill="#7cc0ee" stroke="#2a78b8" stroke-width="0.600"/>
<path d="M39,685.5 H49" stroke="#808080" stroke-dasharray="1 1" shape-rendering="crispEdges"/>
<path d="M54.6,682.4 a4.55,4.4 0 0 0 9.1,0 z" fill="url(#gold)" stroke="#b08a18" stroke-width="0.700"/>
<path d="M60.9,686.8 l3.1,-3.1 3.1,3.1 -3.1,3.1z" fill="#f4dc6a" stroke="#b08a18" stroke-width="0.800"/>
<ellipse cx="59.3" cy="680.7" rx="7.800" ry="2.700" transform="rotate(-6 59.3 680.7)" fill="#4f9fd6" stroke="#2a78b8" stroke-width="0.700"/>
<path d="M54.9,680.5 q0.300,-5 4.400,-5 q4.100,0 4.400,4.300 q-4.400,2.200 -8.800,.7z" fill="#7cc0ee" stroke="#2a78b8" stroke-width="0.600"/>
<path d="M39,703.5 H49" stroke="#808080" stroke-dasharray="1 1" shape-rendering="crispEdges"/>
<path d="M54.6,700.4 a4.55,4.4 0 0 0 9.1,0 z" fill="url(#gold)" stroke="#b08a18" stroke-width="0.700"/>
<path d="M60.9,704.8 l3.1,-3.1 3.1,3.1 -3.1,3.1z" fill="#f4dc6a" stroke="#b08a18" stroke-width="0.800"/>
<ellipse cx="59.3" cy="698.7" rx="7.800" ry="2.700" transform="rotate(-6 59.3 698.7)" fill="#4f9fd6" stroke="#2a78b8" stroke-width="0.700"/>
<path d="M54.9,698.5 q0.300,-5 4.400,-5 q4.100,0 4.400,4.300 q-4.400,2.200 -8.800,.7z" fill="#7cc0ee" stroke="#2a78b8" stroke-width="0.600"/>
<rect x="13.500" y="717.5" width="8" height="8" rx="1.5" fill="#fafafa" stroke="#919191"/>
<path d="M15,721.5 h5" stroke="#27408b" shape-rendering="crispEdges"/>
<path d="M17.500,719 v5" stroke="#27408b" shape-rendering="crispEdges"/>
<path d="M22,721.5 H28" stroke="#808080" stroke-dasharray="1 1" shape-rendering="crispEdges"/>
<rect x="31.500" y="713.500" width="13" height="13" rx="2" fill="url(#gold)" stroke="#b08a18"/><path d="M41,723 l2.500,-2.500 2.500,2.500 -2.500,2.500z" fill="#f8e070" stroke="#b08a18" stroke-width="0.700"/>
<rect x="13.500" y="735.5" width="8" height="8" rx="1.5" fill="#fafafa" stroke="#919191"/>
<path d="M15,739.5 h5" stroke="#27408b" shape-rendering="crispEdges"/>
<path d="M22,739.5 H28" stroke="#808080" stroke-dasharray="1 1" shape-rendering="crispEdges"/>
<path d="M33.500,731.500 h9 v2 h-1.500 v8 h-6 v-8 h-1.500 z" fill="url(#gold)" stroke="#b08a18" stroke-width="0.800"/><path d="M41,745 l2.500,-2.500 2.500,2.500 -2.500,2.500z" fill="#f8e070" stroke="#b08a18" stroke-width="0.700"/>
<path d="M53.500,748.500 h4 l1,1.500" fill="#f7dc7a" stroke="#c9a227" stroke-width="0.800"/>
</svg>
<span class="t" style="left:37.30px;top:552px;font-size:11px;line-height:15px;color:#8a6a08;font-weight:bold;font-style:italic;">f</span>
<span class="t" style="left:36.30px;top:715px;font-size:10px;line-height:14px;color:#8a6a08;font-weight:bold;font-style:italic;">f</span>
<span class="t" style="left:31.20px;top:514px;font-size:12px;line-height:16px;color:#000;transform:scaleX(0.9641);">XTB-Trader</span>
<span class="t" style="left:52.60px;top:532px;font-size:12px;line-height:16px;color:#000;transform:scaleX(0.9509);">Cuentas</span>
<span class="t" style="left:52.00px;top:550px;font-size:12px;line-height:16px;color:#000;transform:scaleX(0.9833);">Indicadores</span>
<span class="t" style="left:52.60px;top:568px;font-size:12px;line-height:16px;color:#000;transform:scaleX(0.9277);">Asesores expertos</span>
<span class="t" style="left:73.20px;top:586px;font-size:12px;line-height:16px;color:#000;transform:scaleX(0.9259);">Escalera guevon_35</span>
<span class="t" style="left:73.20px;top:604px;font-size:12px;line-height:16px;color:#000;transform:scaleX(0.9295);">Escalera guevon_35_CONT</span>
<span class="t" style="left:73.20px;top:622px;font-size:12px;line-height:16px;color:#000;transform:scaleX(0.9329);">Escalera guevon_35_CONT_Hora</span>
<span class="t" style="left:73.20px;top:640px;font-size:12px;line-height:16px;color:#000;transform:scaleX(0.9665);">MACD Sample</span>
<span class="t" style="left:73.20px;top:658px;font-size:12px;line-height:16px;color:#000;transform:scaleX(0.9554);">Machacon_045</span>
<span class="t" style="left:73.20px;top:676px;font-size:12px;line-height:16px;color:#000;transform:scaleX(1.0113);">Moving Average</span>
<span class="t" style="left:73.20px;top:694px;font-size:12px;line-height:16px;color:#000;transform:scaleX(0.8874);">RESTAURACION ESCALERA</span>
<span class="t" style="left:52.00px;top:712px;font-size:12px;line-height:16px;color:#000;transform:scaleX(0.9720);">Indicadores personalizados</span>
<span class="t" style="left:52.00px;top:730px;font-size:12px;line-height:16px;color:#000;transform:scaleX(0.9407);">Scripts</span>
<div class="r" style="left:4px;top:750px;width:285px;height:1px;background:#000;"></div>
<div class="r" style="left:4px;top:751px;width:285px;height:19px;background:#f0f0f0;"></div>
<div class="r" style="left:6px;top:750px;width:53px;height:18px;background:#fff;border:1px solid #000;border-top:none;box-sizing:border-box;box-shadow:1px 1px 0 #707070;"></div>
<span class="t" style="left:15.70px;top:752px;font-size:11px;line-height:15px;color:#000;transform:scaleX(0.9166);">Común</span>
<span class="t" style="left:68.40px;top:753px;font-size:11px;line-height:15px;color:#808080;transform:scaleX(0.9882);">Favoritos</span>
<div class="r" style="left:124px;top:754px;width:1px;height:12px;background:#808080;"></div>
<div class="r" style="left:3px;top:770px;width:287px;height:1px;background:#a0a0a0;"></div>
<div class="r" style="left:292px;top:98px;width:2px;height:656px;background:linear-gradient(90deg,#c8c8c8,#505050);"></div>
<div class="r" style="left:294px;top:98px;width:1624px;height:654px;background:#000;"></div>
<div class="r" style="left:294px;top:96px;width:1626px;height:1px;background:#b4b4b4;"></div>
<div class="r" style="left:294px;top:97px;width:1626px;height:1px;background:#5a5a5a;"></div>
<svg width="1920" height="1200" viewBox="0 0 1920 1200" shape-rendering="crispEdges">
<line x1="329.5" y1="101" x2="329.5" y2="734" stroke="#778899" stroke-width="1" stroke-dasharray="3 3"/>
<line x1="361.5" y1="101" x2="361.5" y2="734" stroke="#778899" stroke-width="1" stroke-dasharray="3 3"/>
<line x1="393.5" y1="101" x2="393.5" y2="734" stroke="#778899" stroke-width="1" stroke-dasharray="3 3"/>
<line x1="425.5" y1="101" x2="425.5" y2="734" stroke="#778899" stroke-width="1" stroke-dasharray="3 3"/>
<line x1="457.5" y1="101" x2="457.5" y2="734" stroke="#778899" stroke-width="1" stroke-dasharray="3 3"/>
<line x1="489.5" y1="101" x2="489.5" y2="734" stroke="#778899" stroke-width="1" stroke-dasharray="3 3"/>
<line x1="521.5" y1="101" x2="521.5" y2="734" stroke="#778899" stroke-width="1" stroke-dasharray="3 3"/>
<line x1="553.5" y1="101" x2="553.5" y2="734" stroke="#778899" stroke-width="1" stroke-dasharray="3 3"/>
<line x1="585.5" y1="101" x2="585.5" y2="734" stroke="#778899" stroke-width="1" stroke-dasharray="3 3"/>
<line x1="617.5" y1="101" x2="617.5" y2="734" stroke="#778899" stroke-width="1" stroke-dasharray="3 3"/>
<line x1="649.5" y1="101" x2="649.5" y2="734" stroke="#778899" stroke-width="1" stroke-dasharray="3 3"/>
<line x1="681.5" y1="101" x2="681.5" y2="734" stroke="#778899" stroke-width="1" stroke-dasharray="3 3"/>
<line x1="713.5" y1="101" x2="713.5" y2="734" stroke="#778899" stroke-width="1" stroke-dasharray="3 3"/>
<line x1="745.5" y1="101" x2="745.5" y2="734" stroke="#778899" stroke-width="1" stroke-dasharray="3 3"/>
<line x1="777.5" y1="101" x2="777.5" y2="734" stroke="#778899" stroke-width="1" stroke-dasharray="3 3"/>
<line x1="809.5" y1="101" x2="809.5" y2="734" stroke="#778899" stroke-width="1" stroke-dasharray="3 3"/>
<line x1="841.5" y1="101" x2="841.5" y2="734" stroke="#778899" stroke-width="1" stroke-dasharray="3 3"/>
<line x1="873.5" y1="101" x2="873.5" y2="734" stroke="#778899" stroke-width="1" stroke-dasharray="3 3"/>
<line x1="905.5" y1="101" x2="905.5" y2="734" stroke="#778899" stroke-width="1" stroke-dasharray="3 3"/>
<line x1="937.5" y1="101" x2="937.5" y2="734" stroke="#778899" stroke-width="1" stroke-dasharray="3 3"/>
<line x1="969.5" y1="101" x2="969.5" y2="734" stroke="#778899" stroke-width="1" stroke-dasharray="3 3"/>
<line x1="1001.5" y1="101" x2="1001.5" y2="734" stroke="#778899" stroke-width="1" stroke-dasharray="3 3"/>
<line x1="1033.5" y1="101" x2="1033.5" y2="734" stroke="#778899" stroke-width="1" stroke-dasharray="3 3"/>
<line x1="1065.5" y1="101" x2="1065.5" y2="734" stroke="#778899" stroke-width="1" stroke-dasharray="3 3"/>
<line x1="1097.5" y1="101" x2="1097.5" y2="734" stroke="#778899" stroke-width="1" stroke-dasharray="3 3"/>
<line x1="1129.5" y1="101" x2="1129.5" y2="734" stroke="#778899" stroke-width="1" stroke-dasharray="3 3"/>
<line x1="1161.5" y1="101" x2="1161.5" y2="734" stroke="#778899" stroke-width="1" stroke-dasharray="3 3"/>
<line x1="1193.5" y1="101" x2="1193.5" y2="734" stroke="#778899" stroke-width="1" stroke-dasharray="3 3"/>
<line x1="1225.5" y1="101" x2="1225.5" y2="734" stroke="#778899" stroke-width="1" stroke-dasharray="3 3"/>
<line x1="1257.5" y1="101" x2="1257.5" y2="734" stroke="#778899" stroke-width="1" stroke-dasharray="3 3"/>
<line x1="1289.5" y1="101" x2="1289.5" y2="734" stroke="#778899" stroke-width="1" stroke-dasharray="3 3"/>
<line x1="1321.5" y1="101" x2="1321.5" y2="734" stroke="#778899" stroke-width="1" stroke-dasharray="3 3"/>
<line x1="1353.5" y1="101" x2="1353.5" y2="734" stroke="#778899" stroke-width="1" stroke-dasharray="3 3"/>
<line x1="1385.5" y1="101" x2="1385.5" y2="734" stroke="#778899" stroke-width="1" stroke-dasharray="3 3"/>
<line x1="1417.5" y1="101" x2="1417.5" y2="734" stroke="#778899" stroke-width="1" stroke-dasharray="3 3"/>
<line x1="1449.5" y1="101" x2="1449.5" y2="734" stroke="#778899" stroke-width="1" stroke-dasharray="3 3"/>
<line x1="1481.5" y1="101" x2="1481.5" y2="734" stroke="#778899" stroke-width="1" stroke-dasharray="3 3"/>
<line x1="1513.5" y1="101" x2="1513.5" y2="734" stroke="#778899" stroke-width="1" stroke-dasharray="3 3"/>
<line x1="1545.5" y1="101" x2="1545.5" y2="734" stroke="#778899" stroke-width="1" stroke-dasharray="3 3"/>
<line x1="1577.5" y1="101" x2="1577.5" y2="734" stroke="#778899" stroke-width="1" stroke-dasharray="3 3"/>
<line x1="1609.5" y1="101" x2="1609.5" y2="734" stroke="#778899" stroke-width="1" stroke-dasharray="3 3"/>
<line x1="1641.5" y1="101" x2="1641.5" y2="734" stroke="#778899" stroke-width="1" stroke-dasharray="3 3"/>
<line x1="1673.5" y1="101" x2="1673.5" y2="734" stroke="#778899" stroke-width="1" stroke-dasharray="3 3"/>
<line x1="1705.5" y1="101" x2="1705.5" y2="734" stroke="#778899" stroke-width="1" stroke-dasharray="3 3"/>
<line x1="1737.5" y1="101" x2="1737.5" y2="734" stroke="#778899" stroke-width="1" stroke-dasharray="3 3"/>
<line x1="1769.5" y1="101" x2="1769.5" y2="734" stroke="#778899" stroke-width="1" stroke-dasharray="3 3"/>
<line x1="1801.5" y1="101" x2="1801.5" y2="734" stroke="#778899" stroke-width="1" stroke-dasharray="3 3"/>
<line x1="1833.5" y1="101" x2="1833.5" y2="734" stroke="#778899" stroke-width="1" stroke-dasharray="3 3"/>
<line x1="1865.5" y1="101" x2="1865.5" y2="734" stroke="#778899" stroke-width="1" stroke-dasharray="3 3"/>
<line x1="298" y1="124.5" x2="1878" y2="124.5" stroke="#778899" stroke-width="1" stroke-dasharray="3 3"/>
<rect x="1879" y="124" width="2" height="1" fill="#fff"/>
<line x1="298" y1="156.5" x2="1878" y2="156.5" stroke="#778899" stroke-width="1" stroke-dasharray="3 3"/>
<rect x="1879" y="156" width="2" height="1" fill="#fff"/>
<line x1="298" y1="188.5" x2="1878" y2="188.5" stroke="#778899" stroke-width="1" stroke-dasharray="3 3"/>
<rect x="1879" y="188" width="2" height="1" fill="#fff"/>
<line x1="298" y1="220.5" x2="1878" y2="220.5" stroke="#778899" stroke-width="1" stroke-dasharray="3 3"/>
<rect x="1879" y="220" width="2" height="1" fill="#fff"/>
<line x1="298" y1="252.5" x2="1878" y2="252.5" stroke="#778899" stroke-width="1" stroke-dasharray="3 3"/>
<rect x="1879" y="252" width="2" height="1" fill="#fff"/>
<line x1="298" y1="284.5" x2="1878" y2="284.5" stroke="#778899" stroke-width="1" stroke-dasharray="3 3"/>
<rect x="1879" y="284" width="2" height="1" fill="#fff"/>
<line x1="298" y1="316.5" x2="1878" y2="316.5" stroke="#778899" stroke-width="1" stroke-dasharray="3 3"/>
<rect x="1879" y="316" width="2" height="1" fill="#fff"/>
<line x1="298" y1="348.5" x2="1878" y2="348.5" stroke="#778899" stroke-width="1" stroke-dasharray="3 3"/>
<rect x="1879" y="348" width="2" height="1" fill="#fff"/>
<line x1="298" y1="380.5" x2="1878" y2="380.5" stroke="#778899" stroke-width="1" stroke-dasharray="3 3"/>
<rect x="1879" y="380" width="2" height="1" fill="#fff"/>
<line x1="298" y1="412.5" x2="1878" y2="412.5" stroke="#778899" stroke-width="1" stroke-dasharray="3 3"/>
<rect x="1879" y="412" width="2" height="1" fill="#fff"/>
<line x1="298" y1="444.5" x2="1878" y2="444.5" stroke="#778899" stroke-width="1" stroke-dasharray="3 3"/>
<rect x="1879" y="444" width="2" height="1" fill="#fff"/>
<line x1="298" y1="476.5" x2="1878" y2="476.5" stroke="#778899" stroke-width="1" stroke-dasharray="3 3"/>
<rect x="1879" y="476" width="2" height="1" fill="#fff"/>
<line x1="298" y1="508.5" x2="1878" y2="508.5" stroke="#778899" stroke-width="1" stroke-dasharray="3 3"/>
<rect x="1879" y="508" width="2" height="1" fill="#fff"/>
<line x1="298" y1="540.5" x2="1878" y2="540.5" stroke="#778899" stroke-width="1" stroke-dasharray="3 3"/>
<rect x="1879" y="540" width="2" height="1" fill="#fff"/>
<line x1="298" y1="572.5" x2="1878" y2="572.5" stroke="#778899" stroke-width="1" stroke-dasharray="3 3"/>
<rect x="1879" y="572" width="2" height="1" fill="#fff"/>
<line x1="298" y1="604.5" x2="1878" y2="604.5" stroke="#778899" stroke-width="1" stroke-dasharray="3 3"/>
<rect x="1879" y="604" width="2" height="1" fill="#fff"/>
<line x1="298" y1="636.5" x2="1878" y2="636.5" stroke="#778899" stroke-width="1" stroke-dasharray="3 3"/>
<rect x="1879" y="636" width="2" height="1" fill="#fff"/>
<line x1="298" y1="668.5" x2="1878" y2="668.5" stroke="#778899" stroke-width="1" stroke-dasharray="3 3"/>
<rect x="1879" y="668" width="2" height="1" fill="#fff"/>
<line x1="298" y1="700.5" x2="1878" y2="700.5" stroke="#778899" stroke-width="1" stroke-dasharray="3 3"/>
<rect x="1879" y="700" width="2" height="1" fill="#fff"/>
<line x1="298" y1="732.5" x2="1878" y2="732.5" stroke="#778899" stroke-width="1" stroke-dasharray="3 3"/>
<rect x="1879" y="732" width="2" height="1" fill="#fff"/>
<line x1="385.5" y1="101" x2="385.5" y2="734" stroke="#fff" stroke-width="1" stroke-dasharray="3 3"/>
<line x1="393.5" y1="101" x2="393.5" y2="734" stroke="#fff" stroke-width="1" stroke-dasharray="3 3"/>
<line x1="585.5" y1="101" x2="585.5" y2="734" stroke="#fff" stroke-width="1" stroke-dasharray="3 3"/>
<line x1="777.5" y1="101" x2="777.5" y2="734" stroke="#fff" stroke-width="1" stroke-dasharray="3 3"/>
<line x1="969.5" y1="101" x2="969.5" y2="734" stroke="#fff" stroke-width="1" stroke-dasharray="3 3"/>
<line x1="1161.5" y1="101" x2="1161.5" y2="734" stroke="#fff" stroke-width="1" stroke-dasharray="3 3"/>
<line x1="1337.5" y1="101" x2="1337.5" y2="734" stroke="#fff" stroke-width="1" stroke-dasharray="3 3"/>
<line x1="1345.5" y1="101" x2="1345.5" y2="734" stroke="#fff" stroke-width="1" stroke-dasharray="3 3"/>
<line x1="1537.5" y1="101" x2="1537.5" y2="734" stroke="#fff" stroke-width="1" stroke-dasharray="3 3"/>
<line x1="1729.5" y1="101" x2="1729.5" y2="734" stroke="#fff" stroke-width="1" stroke-dasharray="3 3"/>
<line x1="298" y1="183.5" x2="1877" y2="183.5" stroke="#00c800" stroke-width="1" stroke-dasharray="9 6 3 6"/>
<line x1="298" y1="186.5" x2="1877" y2="186.5" stroke="#ff0000" stroke-width="1" stroke-dasharray="9 6 3 6"/>
<line x1="298" y1="282.5" x2="1877" y2="282.5" stroke="#00c800" stroke-width="1" stroke-dasharray="9 6 3 6"/>
<line x1="298" y1="285.5" x2="1877" y2="285.5" stroke="#ff0000" stroke-width="1" stroke-dasharray="9 6 3 6"/>
<line x1="298" y1="382.5" x2="1877" y2="382.5" stroke="#ff0000" stroke-width="1" stroke-dasharray="9 6 3 6"/>
<line x1="298" y1="385.5" x2="1877" y2="385.5" stroke="#ff0000" stroke-width="1" stroke-dasharray="9 6 3 6"/>
<line x1="298" y1="387.5" x2="1877" y2="387.5" stroke="#00c800" stroke-width="1" stroke-dasharray="9 6 3 6"/>
<line x1="298" y1="481.5" x2="1877" y2="481.5" stroke="#ff0000" stroke-width="1" stroke-dasharray="9 6 3 6"/>
<line x1="298" y1="484.5" x2="1877" y2="484.5" stroke="#00c800" stroke-width="1" stroke-dasharray="9 6 3 6"/>
<line x1="298" y1="580.5" x2="1877" y2="580.5" stroke="#ff0000" stroke-width="1" stroke-dasharray="9 6 3 6"/>
<line x1="298" y1="583.5" x2="1877" y2="583.5" stroke="#00c800" stroke-width="1" stroke-dasharray="9 6 3 6"/>
<line x1="298" y1="680.5" x2="1877" y2="680.5" stroke="#00c800" stroke-width="1" stroke-dasharray="9 6 3 6"/>
<line x1="298" y1="682.5" x2="1877" y2="682.5" stroke="#00c800" stroke-width="1" stroke-dasharray="9 6 3 6"/>
<rect x="297" y="396" width="1581" height="1" fill="#ff0000"/>
<rect x="297" y="400" width="1581" height="1" fill="#a0a8b4"/>
<line x1="729" y1="191" x2="1272" y2="570" stroke="#ff0000" stroke-width="1" stroke-dasharray="2.5 3" shape-rendering="crispEdges"/>
<line x1="1081" y1="391" x2="1272" y2="570" stroke="#ff0000" stroke-width="1" stroke-dasharray="2.5 3" shape-rendering="crispEdges"/>
<line x1="1065" y1="291" x2="1272" y2="570" stroke="#ff0000" stroke-width="1" stroke-dasharray="2.5 3" shape-rendering="crispEdges"/>
<line x1="1089" y1="487" x2="1272" y2="571" stroke="#ff0000" stroke-width="1" stroke-dasharray="3 3" shape-rendering="crispEdges"/>
<line x1="1092" y1="489" x2="1275" y2="573" stroke="#0000ff" stroke-width="1" stroke-dasharray="3 3" shape-rendering="crispEdges"/>
<line x1="297" y1="391" x2="657" y2="381" stroke="#ff0000" stroke-width="1" stroke-dasharray="2.5 3" shape-rendering="crispEdges"/>
<line x1="361" y1="589" x2="655" y2="387" stroke="#0000ff" stroke-width="1" stroke-dasharray="2.5 3" shape-rendering="crispEdges"/>
<line x1="473" y1="489" x2="655" y2="387" stroke="#0000ff" stroke-width="1" stroke-dasharray="2.5 3" shape-rendering="crispEdges"/>
<line x1="497" y1="391" x2="655" y2="384" stroke="#0000ff" stroke-width="1" stroke-dasharray="2.5 3" shape-rendering="crispEdges"/>
<line x1="1457" y1="682" x2="1857" y2="387" stroke="#0000ff" stroke-width="1" stroke-dasharray="2.5 3" shape-rendering="crispEdges"/>
<line x1="1505" y1="583" x2="1857" y2="386" stroke="#0000ff" stroke-width="1" stroke-dasharray="2.5 3" shape-rendering="crispEdges"/>
<line x1="1610" y1="483" x2="1857" y2="384" stroke="#0000ff" stroke-width="1" stroke-dasharray="2.5 3" shape-rendering="crispEdges"/>
<rect x="297" y="327" width="1" height="48" fill="#00ff00"/>
<rect x="297" y="359" width="3" height="15" fill="#00ff00"/>
<rect x="298" y="360" width="1" height="13" fill="#fff"/>
<rect x="305" y="324" width="1" height="57" fill="#00ff00"/>
<rect x="303" y="363" width="5" height="11" fill="#00ff00"/>
<rect x="304" y="364" width="3" height="9" fill="#000"/>
<rect x="313" y="335" width="1" height="43" fill="#00ff00"/>
<rect x="311" y="362" width="5" height="14" fill="#00ff00"/>
<rect x="312" y="363" width="3" height="12" fill="#fff"/>
<rect x="321" y="350" width="1" height="66" fill="#00ff00"/>
<rect x="319" y="378" width="5" height="33" fill="#00ff00"/>
<rect x="320" y="379" width="3" height="31" fill="#fff"/>
<rect x="329" y="372" width="1" height="56" fill="#00ff00"/>
<rect x="327" y="387" width="5" height="24" fill="#00ff00"/>
<rect x="328" y="388" width="3" height="22" fill="#000"/>
<rect x="337" y="383" width="1" height="158" fill="#00ff00"/>
<rect x="335" y="387" width="5" height="138" fill="#00ff00"/>
<rect x="336" y="388" width="3" height="136" fill="#fff"/>
<rect x="345" y="494" width="1" height="76" fill="#00ff00"/>
<rect x="343" y="526" width="5" height="31" fill="#00ff00"/>
<rect x="344" y="527" width="3" height="29" fill="#fff"/>
<rect x="353" y="542" width="1" height="35" fill="#00ff00"/>
<rect x="351" y="546" width="5" height="11" fill="#00ff00"/>
<rect x="352" y="547" width="3" height="9" fill="#000"/>
<rect x="361" y="542" width="1" height="52" fill="#00ff00"/>
<rect x="359" y="546" width="5" height="12" fill="#00ff00"/>
<rect x="360" y="547" width="3" height="10" fill="#fff"/>
<rect x="369" y="530" width="1" height="31" fill="#00ff00"/>
<rect x="367" y="538" width="5" height="19" fill="#00ff00"/>
<rect x="368" y="539" width="3" height="17" fill="#000"/>
<rect x="377" y="535" width="1" height="32" fill="#00ff00"/>
<rect x="375" y="537" width="5" height="15" fill="#00ff00"/>
<rect x="376" y="538" width="3" height="13" fill="#fff"/>
<rect x="385" y="562" width="1" height="49" fill="#00ff00"/>
<rect x="383" y="588" width="5" height="15" fill="#00ff00"/>
<rect x="384" y="589" width="3" height="13" fill="#fff"/>
<rect x="393" y="582" width="1" height="34" fill="#00ff00"/>
<rect x="391" y="605" width="5" height="7" fill="#00ff00"/>
<rect x="392" y="606" width="3" height="5" fill="#fff"/>
<rect x="401" y="560" width="1" height="53" fill="#00ff00"/>
<rect x="399" y="595" width="5" height="17" fill="#00ff00"/>
<rect x="400" y="596" width="3" height="15" fill="#000"/>
<rect x="409" y="565" width="1" height="52" fill="#00ff00"/>
<rect x="407" y="582" width="5" height="15" fill="#00ff00"/>
<rect x="408" y="583" width="3" height="13" fill="#000"/>
<rect x="417" y="554" width="1" height="40" fill="#00ff00"/>
<rect x="415" y="555" width="5" height="27" fill="#00ff00"/>
<rect x="416" y="556" width="3" height="25" fill="#000"/>
<rect x="425" y="549" width="1" height="27" fill="#00ff00"/>
<rect x="423" y="556" width="5" height="16" fill="#00ff00"/>
<rect x="424" y="557" width="3" height="14" fill="#fff"/>
<rect x="433" y="541" width="1" height="39" fill="#00ff00"/>
<rect x="431" y="560" width="5" height="13" fill="#00ff00"/>
<rect x="432" y="561" width="3" height="11" fill="#000"/>
<rect x="441" y="532" width="1" height="37" fill="#00ff00"/>
<rect x="439" y="544" width="5" height="16" fill="#00ff00"/>
<rect x="440" y="545" width="3" height="14" fill="#000"/>
<rect x="449" y="529" width="1" height="25" fill="#00ff00"/>
<rect x="447" y="533" width="5" height="10" fill="#00ff00"/>
<rect x="448" y="534" width="3" height="8" fill="#000"/>
<rect x="457" y="504" width="1" height="67" fill="#00ff00"/>
<rect x="455" y="529" width="5" height="11" fill="#00ff00"/>
<rect x="456" y="530" width="3" height="9" fill="#000"/>
<rect x="465" y="520" width="1" height="48" fill="#00ff00"/>
<rect x="463" y="529" width="5" height="10" fill="#00ff00"/>
<rect x="464" y="530" width="3" height="8" fill="#fff"/>
<rect x="473" y="490" width="1" height="52" fill="#00ff00"/>
<rect x="471" y="498" width="5" height="42" fill="#00ff00"/>
<rect x="472" y="499" width="3" height="40" fill="#000"/>
<rect x="481" y="463" width="1" height="49" fill="#00ff00"/>
<rect x="479" y="494" width="5" height="2" fill="#00ff00"/>
<rect x="489" y="438" width="1" height="64" fill="#00ff00"/>
<rect x="487" y="449" width="5" height="47" fill="#00ff00"/>
<rect x="488" y="450" width="3" height="45" fill="#000"/>
<rect x="497" y="391" width="1" height="62" fill="#00ff00"/>
<rect x="495" y="400" width="5" height="50" fill="#00ff00"/>
<rect x="496" y="401" width="3" height="48" fill="#000"/>
<rect x="505" y="355" width="1" height="70" fill="#00ff00"/>
<rect x="503" y="382" width="5" height="16" fill="#00ff00"/>
<rect x="504" y="383" width="3" height="14" fill="#000"/>
<rect x="513" y="368" width="1" height="40" fill="#00ff00"/>
<rect x="511" y="379" width="5" height="2" fill="#00ff00"/>
<rect x="521" y="335" width="1" height="73" fill="#00ff00"/>
<rect x="519" y="378" width="5" height="9" fill="#00ff00"/>
<rect x="520" y="379" width="3" height="7" fill="#fff"/>
<rect x="529" y="361" width="1" height="61" fill="#00ff00"/>
<rect x="527" y="377" width="5" height="10" fill="#00ff00"/>
<rect x="528" y="378" width="3" height="8" fill="#000"/>
<rect x="537" y="350" width="1" height="67" fill="#00ff00"/>
<rect x="535" y="378" width="5" height="27" fill="#00ff00"/>
<rect x="536" y="379" width="3" height="25" fill="#fff"/>
<rect x="545" y="392" width="1" height="70" fill="#00ff00"/>
<rect x="543" y="405" width="5" height="37" fill="#00ff00"/>
<rect x="544" y="406" width="3" height="35" fill="#fff"/>
<rect x="553" y="407" width="1" height="49" fill="#00ff00"/>
<rect x="551" y="411" width="5" height="31" fill="#00ff00"/>
<rect x="552" y="412" width="3" height="29" fill="#000"/>
<rect x="561" y="408" width="1" height="19" fill="#00ff00"/>
<rect x="559" y="412" width="5" height="5" fill="#00ff00"/>
<rect x="560" y="413" width="3" height="3" fill="#fff"/>
<rect x="569" y="409" width="1" height="18" fill="#00ff00"/>
<rect x="567" y="410" width="5" height="6" fill="#00ff00"/>
<rect x="568" y="411" width="3" height="4" fill="#000"/>
<rect x="577" y="403" width="1" height="15" fill="#00ff00"/>
<rect x="575" y="411" width="5" height="5" fill="#00ff00"/>
<rect x="576" y="412" width="3" height="3" fill="#fff"/>
<rect x="585" y="377" width="1" height="40" fill="#00ff00"/>
<rect x="583" y="378" width="5" height="38" fill="#00ff00"/>
<rect x="584" y="379" width="3" height="36" fill="#000"/>
<rect x="593" y="359" width="1" height="22" fill="#00ff00"/>
<rect x="591" y="374" width="5" height="4" fill="#00ff00"/>
<rect x="592" y="375" width="3" height="2" fill="#000"/>
<rect x="601" y="354" width="1" height="34" fill="#00ff00"/>
<rect x="599" y="360" width="5" height="14" fill="#00ff00"/>
<rect x="600" y="361" width="3" height="12" fill="#000"/>
<rect x="609" y="360" width="1" height="15" fill="#00ff00"/>
<rect x="607" y="360" width="5" height="9" fill="#00ff00"/>
<rect x="608" y="361" width="3" height="7" fill="#fff"/>
<rect x="617" y="361" width="1" height="26" fill="#00ff00"/>
<rect x="615" y="361" width="5" height="21" fill="#00ff00"/>
<rect x="616" y="362" width="3" height="19" fill="#000"/>
<rect x="625" y="352" width="1" height="19" fill="#00ff00"/>
<rect x="623" y="353" width="5" height="8" fill="#00ff00"/>
<rect x="624" y="354" width="3" height="6" fill="#000"/>
<rect x="633" y="351" width="1" height="27" fill="#00ff00"/>
<rect x="631" y="355" width="5" height="4" fill="#00ff00"/>
<rect x="632" y="356" width="3" height="2" fill="#fff"/>
<rect x="641" y="337" width="1" height="39" fill="#00ff00"/>
<rect x="639" y="342" width="5" height="16" fill="#00ff00"/>
<rect x="640" y="343" width="3" height="14" fill="#000"/>
<rect x="649" y="305" width="1" height="52" fill="#00ff00"/>
<rect x="647" y="330" width="5" height="12" fill="#00ff00"/>
<rect x="648" y="331" width="3" height="10" fill="#000"/>
<rect x="657" y="329" width="1" height="71" fill="#00ff00"/>
<rect x="655" y="331" width="5" height="46" fill="#00ff00"/>
<rect x="656" y="332" width="3" height="44" fill="#fff"/>
<rect x="665" y="309" width="1" height="83" fill="#00ff00"/>
<rect x="663" y="328" width="5" height="47" fill="#00ff00"/>
<rect x="664" y="329" width="3" height="45" fill="#000"/>
<rect x="673" y="279" width="1" height="74" fill="#00ff00"/>
<rect x="671" y="311" width="5" height="17" fill="#00ff00"/>
<rect x="672" y="312" width="3" height="15" fill="#000"/>
<rect x="681" y="276" width="1" height="43" fill="#00ff00"/>
<rect x="679" y="302" width="5" height="8" fill="#00ff00"/>
<rect x="680" y="303" width="3" height="6" fill="#000"/>
<rect x="689" y="287" width="1" height="63" fill="#00ff00"/>
<rect x="687" y="302" width="5" height="2" fill="#00ff00"/>
<rect x="697" y="295" width="1" height="54" fill="#00ff00"/>
<rect x="695" y="304" width="5" height="18" fill="#00ff00"/>
<rect x="696" y="305" width="3" height="16" fill="#fff"/>
<rect x="705" y="286" width="1" height="54" fill="#00ff00"/>
<rect x="703" y="304" width="5" height="24" fill="#00ff00"/>
<rect x="704" y="305" width="3" height="22" fill="#000"/>
<rect x="713" y="243" width="1" height="113" fill="#00ff00"/>
<rect x="711" y="250" width="5" height="53" fill="#00ff00"/>
<rect x="712" y="251" width="3" height="51" fill="#000"/>
<rect x="721" y="229" width="1" height="43" fill="#00ff00"/>
<rect x="719" y="248" width="5" height="2" fill="#00ff00"/>
<rect x="729" y="176" width="1" height="75" fill="#00ff00"/>
<rect x="727" y="197" width="5" height="51" fill="#00ff00"/>
<rect x="728" y="198" width="3" height="49" fill="#000"/>
<rect x="737" y="175" width="1" height="23" fill="#00ff00"/>
<rect x="735" y="196" width="5" height="2" fill="#00ff00"/>
<rect x="745" y="188" width="1" height="28" fill="#00ff00"/>
<rect x="743" y="196" width="5" height="7" fill="#00ff00"/>
<rect x="744" y="197" width="3" height="5" fill="#fff"/>
<rect x="753" y="164" width="1" height="42" fill="#00ff00"/>
<rect x="751" y="184" width="5" height="19" fill="#00ff00"/>
<rect x="752" y="185" width="3" height="17" fill="#000"/>
<rect x="761" y="175" width="1" height="18" fill="#00ff00"/>
<rect x="759" y="186" width="5" height="4" fill="#00ff00"/>
<rect x="760" y="187" width="3" height="2" fill="#fff"/>
<rect x="769" y="186" width="1" height="17" fill="#00ff00"/>
<rect x="767" y="190" width="5" height="4" fill="#00ff00"/>
<rect x="768" y="191" width="3" height="2" fill="#fff"/>
<rect x="777" y="185" width="1" height="21" fill="#00ff00"/>
<rect x="775" y="189" width="5" height="7" fill="#00ff00"/>
<rect x="776" y="190" width="3" height="5" fill="#000"/>
<rect x="785" y="176" width="1" height="23" fill="#00ff00"/>
<rect x="783" y="188" width="5" height="3" fill="#00ff00"/>
<rect x="784" y="189" width="3" height="1" fill="#000"/>
<rect x="793" y="150" width="1" height="44" fill="#00ff00"/>
<rect x="791" y="176" width="5" height="10" fill="#00ff00"/>
<rect x="792" y="177" width="3" height="8" fill="#000"/>
<rect x="801" y="158" width="1" height="28" fill="#00ff00"/>
<rect x="799" y="170" width="5" height="6" fill="#00ff00"/>
<rect x="800" y="171" width="3" height="4" fill="#000"/>
<rect x="809" y="132" width="1" height="40" fill="#00ff00"/>
<rect x="807" y="142" width="5" height="27" fill="#00ff00"/>
<rect x="808" y="143" width="3" height="25" fill="#000"/>
<rect x="817" y="136" width="1" height="31" fill="#00ff00"/>
<rect x="815" y="142" width="5" height="8" fill="#00ff00"/>
<rect x="816" y="143" width="3" height="6" fill="#fff"/>
<rect x="825" y="143" width="1" height="28" fill="#00ff00"/>
<rect x="823" y="150" width="5" height="18" fill="#00ff00"/>
<rect x="824" y="151" width="3" height="16" fill="#fff"/>
<rect x="833" y="156" width="1" height="24" fill="#00ff00"/>
<rect x="831" y="168" width="5" height="2" fill="#00ff00"/>
<rect x="841" y="142" width="1" height="49" fill="#00ff00"/>
<rect x="839" y="168" width="5" height="10" fill="#00ff00"/>
<rect x="840" y="169" width="3" height="8" fill="#fff"/>
<rect x="849" y="155" width="1" height="38" fill="#00ff00"/>
<rect x="847" y="178" width="5" height="4" fill="#00ff00"/>
<rect x="848" y="179" width="3" height="2" fill="#fff"/>
<rect x="857" y="182" width="1" height="32" fill="#00ff00"/>
<rect x="855" y="182" width="5" height="20" fill="#00ff00"/>
<rect x="856" y="183" width="3" height="18" fill="#fff"/>
<rect x="865" y="161" width="1" height="42" fill="#00ff00"/>
<rect x="863" y="185" width="5" height="18" fill="#00ff00"/>
<rect x="864" y="186" width="3" height="16" fill="#000"/>
<rect x="873" y="160" width="1" height="76" fill="#00ff00"/>
<rect x="871" y="185" width="5" height="48" fill="#00ff00"/>
<rect x="872" y="186" width="3" height="46" fill="#fff"/>
<rect x="881" y="216" width="1" height="40" fill="#00ff00"/>
<rect x="879" y="232" width="5" height="2" fill="#00ff00"/>
<rect x="889" y="207" width="1" height="51" fill="#00ff00"/>
<rect x="887" y="230" width="5" height="5" fill="#00ff00"/>
<rect x="888" y="231" width="3" height="3" fill="#000"/>
<rect x="897" y="219" width="1" height="54" fill="#00ff00"/>
<rect x="895" y="230" width="5" height="2" fill="#00ff00"/>
<rect x="905" y="190" width="1" height="59" fill="#00ff00"/>
<rect x="903" y="221" width="5" height="9" fill="#00ff00"/>
<rect x="904" y="222" width="3" height="7" fill="#000"/>
<rect x="913" y="214" width="1" height="63" fill="#00ff00"/>
<rect x="911" y="221" width="5" height="51" fill="#00ff00"/>
<rect x="912" y="222" width="3" height="49" fill="#fff"/>
<rect x="921" y="244" width="1" height="46" fill="#00ff00"/>
<rect x="919" y="256" width="5" height="16" fill="#00ff00"/>
<rect x="920" y="257" width="3" height="14" fill="#000"/>
<rect x="929" y="237" width="1" height="47" fill="#00ff00"/>
<rect x="927" y="256" width="5" height="28" fill="#00ff00"/>
<rect x="928" y="257" width="3" height="26" fill="#fff"/>
<rect x="937" y="234" width="1" height="50" fill="#00ff00"/>
<rect x="935" y="238" width="5" height="46" fill="#00ff00"/>
<rect x="936" y="239" width="3" height="44" fill="#000"/>
<rect x="945" y="218" width="1" height="26" fill="#00ff00"/>
<rect x="943" y="220" width="5" height="18" fill="#00ff00"/>
<rect x="944" y="221" width="3" height="16" fill="#000"/>
<rect x="953" y="215" width="1" height="16" fill="#00ff00"/>
<rect x="951" y="218" width="5" height="2" fill="#00ff00"/>
<rect x="961" y="218" width="1" height="20" fill="#00ff00"/>
<rect x="959" y="222" width="5" height="6" fill="#00ff00"/>
<rect x="960" y="223" width="3" height="4" fill="#fff"/>
<rect x="969" y="206" width="1" height="25" fill="#00ff00"/>
<rect x="967" y="208" width="5" height="20" fill="#00ff00"/>
<rect x="968" y="209" width="3" height="18" fill="#000"/>
<rect x="977" y="208" width="1" height="19" fill="#00ff00"/>
<rect x="975" y="208" width="5" height="16" fill="#00ff00"/>
<rect x="976" y="209" width="3" height="14" fill="#fff"/>
<rect x="985" y="219" width="1" height="18" fill="#00ff00"/>
<rect x="983" y="222" width="5" height="2" fill="#00ff00"/>
<rect x="993" y="215" width="1" height="12" fill="#00ff00"/>
<rect x="991" y="220" width="5" height="2" fill="#00ff00"/>
<rect x="1001" y="220" width="1" height="28" fill="#00ff00"/>
<rect x="999" y="220" width="5" height="28" fill="#00ff00"/>
<rect x="1000" y="221" width="3" height="26" fill="#fff"/>
<rect x="1009" y="241" width="1" height="22" fill="#00ff00"/>
<rect x="1007" y="244" width="5" height="4" fill="#00ff00"/>
<rect x="1008" y="245" width="3" height="2" fill="#000"/>
<rect x="1017" y="237" width="1" height="23" fill="#00ff00"/>
<rect x="1015" y="241" width="5" height="2" fill="#00ff00"/>
<rect x="1025" y="226" width="1" height="20" fill="#00ff00"/>
<rect x="1023" y="230" width="5" height="11" fill="#00ff00"/>
<rect x="1024" y="231" width="3" height="9" fill="#000"/>
<rect x="1033" y="193" width="1" height="39" fill="#00ff00"/>
<rect x="1031" y="215" width="5" height="15" fill="#00ff00"/>
<rect x="1032" y="216" width="3" height="13" fill="#000"/>
<rect x="1041" y="210" width="1" height="57" fill="#00ff00"/>
<rect x="1039" y="215" width="5" height="25" fill="#00ff00"/>
<rect x="1040" y="216" width="3" height="23" fill="#fff"/>
<rect x="1049" y="221" width="1" height="53" fill="#00ff00"/>
<rect x="1047" y="240" width="5" height="30" fill="#00ff00"/>
<rect x="1048" y="241" width="3" height="28" fill="#fff"/>
<rect x="1057" y="253" width="1" height="28" fill="#00ff00"/>
<rect x="1055" y="270" width="5" height="2" fill="#00ff00"/>
<rect x="1065" y="258" width="1" height="54" fill="#00ff00"/>
<rect x="1063" y="271" width="5" height="32" fill="#00ff00"/>
<rect x="1064" y="272" width="3" height="30" fill="#fff"/>
<rect x="1073" y="281" width="1" height="46" fill="#00ff00"/>
<rect x="1071" y="303" width="5" height="5" fill="#00ff00"/>
<rect x="1072" y="304" width="3" height="3" fill="#fff"/>
<rect x="1081" y="287" width="1" height="176" fill="#00ff00"/>
<rect x="1079" y="308" width="5" height="154" fill="#00ff00"/>
<rect x="1080" y="309" width="3" height="152" fill="#fff"/>
<rect x="1089" y="433" width="1" height="63" fill="#00ff00"/>
<rect x="1087" y="462" width="5" height="33" fill="#00ff00"/>
<rect x="1088" y="463" width="3" height="31" fill="#fff"/>
<rect x="1097" y="495" width="1" height="44" fill="#00ff00"/>
<rect x="1095" y="495" width="5" height="23" fill="#00ff00"/>
<rect x="1096" y="496" width="3" height="21" fill="#fff"/>
<rect x="1105" y="469" width="1" height="69" fill="#00ff00"/>
<rect x="1103" y="478" width="5" height="40" fill="#00ff00"/>
<rect x="1104" y="479" width="3" height="38" fill="#000"/>
<rect x="1113" y="473" width="1" height="35" fill="#00ff00"/>
<rect x="1111" y="478" width="5" height="6" fill="#00ff00"/>
<rect x="1112" y="479" width="3" height="4" fill="#fff"/>
<rect x="1121" y="480" width="1" height="71" fill="#00ff00"/>
<rect x="1119" y="484" width="5" height="55" fill="#00ff00"/>
<rect x="1120" y="485" width="3" height="53" fill="#fff"/>
<rect x="1129" y="496" width="1" height="54" fill="#00ff00"/>
<rect x="1127" y="509" width="5" height="29" fill="#00ff00"/>
<rect x="1128" y="510" width="3" height="27" fill="#000"/>
<rect x="1137" y="498" width="1" height="18" fill="#00ff00"/>
<rect x="1135" y="508" width="5" height="2" fill="#00ff00"/>
<rect x="1145" y="502" width="1" height="14" fill="#00ff00"/>
<rect x="1143" y="509" width="5" height="3" fill="#00ff00"/>
<rect x="1144" y="510" width="3" height="1" fill="#fff"/>
<rect x="1153" y="506" width="1" height="24" fill="#00ff00"/>
<rect x="1151" y="508" width="5" height="16" fill="#00ff00"/>
<rect x="1152" y="509" width="3" height="14" fill="#fff"/>
<rect x="1161" y="515" width="1" height="19" fill="#00ff00"/>
<rect x="1159" y="522" width="5" height="6" fill="#00ff00"/>
<rect x="1160" y="523" width="3" height="4" fill="#fff"/>
<rect x="1169" y="510" width="1" height="24" fill="#00ff00"/>
<rect x="1167" y="526" width="5" height="8" fill="#00ff00"/>
<rect x="1168" y="527" width="3" height="6" fill="#fff"/>
<rect x="1177" y="515" width="1" height="18" fill="#00ff00"/>
<rect x="1175" y="523" width="5" height="10" fill="#00ff00"/>
<rect x="1176" y="524" width="3" height="8" fill="#000"/>
<rect x="1185" y="500" width="1" height="25" fill="#00ff00"/>
<rect x="1183" y="503" width="5" height="21" fill="#00ff00"/>
<rect x="1184" y="504" width="3" height="19" fill="#000"/>
<rect x="1193" y="501" width="1" height="11" fill="#00ff00"/>
<rect x="1191" y="503" width="5" height="7" fill="#00ff00"/>
<rect x="1192" y="504" width="3" height="5" fill="#fff"/>
<rect x="1201" y="505" width="1" height="14" fill="#00ff00"/>
<rect x="1199" y="508" width="5" height="7" fill="#00ff00"/>
<rect x="1200" y="509" width="3" height="5" fill="#fff"/>
<rect x="1209" y="499" width="1" height="18" fill="#00ff00"/>
<rect x="1207" y="508" width="5" height="7" fill="#00ff00"/>
<rect x="1208" y="509" width="3" height="5" fill="#000"/>
<rect x="1217" y="498" width="1" height="24" fill="#00ff00"/>
<rect x="1215" y="508" width="5" height="7" fill="#00ff00"/>
<rect x="1216" y="509" width="3" height="5" fill="#fff"/>
<rect x="1225" y="505" width="1" height="30" fill="#00ff00"/>
<rect x="1223" y="514" width="5" height="17" fill="#00ff00"/>
<rect x="1224" y="515" width="3" height="15" fill="#fff"/>
<rect x="1233" y="495" width="1" height="43" fill="#00ff00"/>
<rect x="1231" y="511" width="5" height="20" fill="#00ff00"/>
<rect x="1232" y="512" width="3" height="18" fill="#000"/>
<rect x="1241" y="495" width="1" height="23" fill="#00ff00"/>
<rect x="1239" y="512" width="5" height="4" fill="#00ff00"/>
<rect x="1240" y="513" width="3" height="2" fill="#fff"/>
<rect x="1249" y="501" width="1" height="29" fill="#00ff00"/>
<rect x="1247" y="516" width="5" height="9" fill="#00ff00"/>
<rect x="1248" y="517" width="3" height="7" fill="#fff"/>
<rect x="1257" y="509" width="1" height="19" fill="#00ff00"/>
<rect x="1255" y="522" width="5" height="3" fill="#00ff00"/>
<rect x="1256" y="523" width="3" height="1" fill="#000"/>
<rect x="1265" y="509" width="1" height="19" fill="#00ff00"/>
<rect x="1263" y="518" width="5" height="3" fill="#00ff00"/>
<rect x="1264" y="519" width="3" height="1" fill="#000"/>
<rect x="1273" y="443" width="1" height="177" fill="#00ff00"/>
<rect x="1271" y="518" width="5" height="79" fill="#00ff00"/>
<rect x="1272" y="519" width="3" height="77" fill="#fff"/>
<rect x="1281" y="551" width="1" height="95" fill="#00ff00"/>
<rect x="1279" y="596" width="5" height="47" fill="#00ff00"/>
<rect x="1280" y="597" width="3" height="45" fill="#fff"/>
<rect x="1289" y="619" width="1" height="41" fill="#00ff00"/>
<rect x="1287" y="643" width="5" height="2" fill="#00ff00"/>
<rect x="1297" y="589" width="1" height="70" fill="#00ff00"/>
<rect x="1295" y="594" width="5" height="50" fill="#00ff00"/>
<rect x="1296" y="595" width="3" height="48" fill="#000"/>
<rect x="1305" y="570" width="1" height="50" fill="#00ff00"/>
<rect x="1303" y="596" width="5" height="3" fill="#00ff00"/>
<rect x="1304" y="597" width="3" height="1" fill="#fff"/>
<rect x="1313" y="580" width="1" height="30" fill="#00ff00"/>
<rect x="1311" y="584" width="5" height="15" fill="#00ff00"/>
<rect x="1312" y="585" width="3" height="13" fill="#000"/>
<rect x="1321" y="583" width="1" height="28" fill="#00ff00"/>
<rect x="1319" y="584" width="5" height="7" fill="#00ff00"/>
<rect x="1320" y="585" width="3" height="5" fill="#fff"/>
<rect x="1329" y="582" width="1" height="22" fill="#00ff00"/>
<rect x="1327" y="588" width="5" height="3" fill="#00ff00"/>
<rect x="1328" y="589" width="3" height="1" fill="#000"/>
<rect x="1337" y="613" width="1" height="18" fill="#00ff00"/>
<rect x="1335" y="620" width="5" height="8" fill="#00ff00"/>
<rect x="1336" y="621" width="3" height="6" fill="#000"/>
<rect x="1345" y="605" width="1" height="20" fill="#00ff00"/>
<rect x="1343" y="610" width="5" height="10" fill="#00ff00"/>
<rect x="1344" y="611" width="3" height="8" fill="#000"/>
<rect x="1353" y="587" width="1" height="28" fill="#00ff00"/>
<rect x="1351" y="603" width="5" height="7" fill="#00ff00"/>
<rect x="1352" y="604" width="3" height="5" fill="#000"/>
<rect x="1361" y="570" width="1" height="34" fill="#00ff00"/>
<rect x="1359" y="572" width="5" height="32" fill="#00ff00"/>
<rect x="1360" y="573" width="3" height="30" fill="#000"/>
<rect x="1369" y="531" width="1" height="41" fill="#00ff00"/>
<rect x="1367" y="533" width="5" height="38" fill="#00ff00"/>
<rect x="1368" y="534" width="3" height="36" fill="#000"/>
<rect x="1377" y="529" width="1" height="19" fill="#00ff00"/>
<rect x="1375" y="533" width="5" height="9" fill="#00ff00"/>
<rect x="1376" y="534" width="3" height="7" fill="#fff"/>
<rect x="1385" y="538" width="1" height="14" fill="#00ff00"/>
<rect x="1383" y="541" width="5" height="10" fill="#00ff00"/>
<rect x="1384" y="542" width="3" height="8" fill="#fff"/>
<rect x="1393" y="537" width="1" height="18" fill="#00ff00"/>
<rect x="1391" y="550" width="5" height="4" fill="#00ff00"/>
<rect x="1392" y="551" width="3" height="2" fill="#fff"/>
<rect x="1401" y="534" width="1" height="23" fill="#00ff00"/>
<rect x="1399" y="540" width="5" height="13" fill="#00ff00"/>
<rect x="1400" y="541" width="3" height="11" fill="#000"/>
<rect x="1409" y="522" width="1" height="68" fill="#00ff00"/>
<rect x="1407" y="540" width="5" height="50" fill="#00ff00"/>
<rect x="1408" y="541" width="3" height="48" fill="#fff"/>
<rect x="1417" y="524" width="1" height="72" fill="#00ff00"/>
<rect x="1415" y="550" width="5" height="40" fill="#00ff00"/>
<rect x="1416" y="551" width="3" height="38" fill="#000"/>
<rect x="1425" y="544" width="1" height="51" fill="#00ff00"/>
<rect x="1423" y="550" width="5" height="12" fill="#00ff00"/>
<rect x="1424" y="551" width="3" height="10" fill="#fff"/>
<rect x="1433" y="560" width="1" height="61" fill="#00ff00"/>
<rect x="1431" y="562" width="5" height="47" fill="#00ff00"/>
<rect x="1432" y="563" width="3" height="45" fill="#fff"/>
<rect x="1441" y="610" width="1" height="60" fill="#00ff00"/>
<rect x="1439" y="610" width="5" height="52" fill="#00ff00"/>
<rect x="1440" y="611" width="3" height="50" fill="#fff"/>
<rect x="1449" y="627" width="1" height="49" fill="#00ff00"/>
<rect x="1447" y="630" width="5" height="32" fill="#00ff00"/>
<rect x="1448" y="631" width="3" height="30" fill="#000"/>
<rect x="1457" y="617" width="1" height="87" fill="#00ff00"/>
<rect x="1455" y="630" width="5" height="68" fill="#00ff00"/>
<rect x="1456" y="631" width="3" height="66" fill="#fff"/>
<rect x="1465" y="682" width="1" height="36" fill="#00ff00"/>
<rect x="1463" y="700" width="5" height="18" fill="#00ff00"/>
<rect x="1464" y="701" width="3" height="16" fill="#fff"/>
<rect x="1473" y="642" width="1" height="76" fill="#00ff00"/>
<rect x="1471" y="660" width="5" height="58" fill="#00ff00"/>
<rect x="1472" y="661" width="3" height="56" fill="#000"/>
<rect x="1481" y="613" width="1" height="55" fill="#00ff00"/>
<rect x="1479" y="638" width="5" height="22" fill="#00ff00"/>
<rect x="1480" y="639" width="3" height="20" fill="#000"/>
<rect x="1489" y="633" width="1" height="27" fill="#00ff00"/>
<rect x="1487" y="640" width="5" height="20" fill="#00ff00"/>
<rect x="1488" y="641" width="3" height="18" fill="#fff"/>
<rect x="1497" y="607" width="1" height="53" fill="#00ff00"/>
<rect x="1495" y="608" width="5" height="52" fill="#00ff00"/>
<rect x="1496" y="609" width="3" height="50" fill="#000"/>
<rect x="1505" y="583" width="1" height="28" fill="#00ff00"/>
<rect x="1503" y="588" width="5" height="19" fill="#00ff00"/>
<rect x="1504" y="589" width="3" height="17" fill="#000"/>
<rect x="1513" y="566" width="1" height="27" fill="#00ff00"/>
<rect x="1511" y="588" width="5" height="3" fill="#00ff00"/>
<rect x="1512" y="589" width="3" height="1" fill="#fff"/>
<rect x="1521" y="586" width="1" height="9" fill="#00ff00"/>
<rect x="1519" y="591" width="5" height="4" fill="#00ff00"/>
<rect x="1520" y="592" width="3" height="2" fill="#fff"/>
<rect x="1529" y="589" width="1" height="18" fill="#00ff00"/>
<rect x="1527" y="596" width="5" height="6" fill="#00ff00"/>
<rect x="1528" y="597" width="3" height="4" fill="#fff"/>
<rect x="1537" y="575" width="1" height="26" fill="#00ff00"/>
<rect x="1535" y="578" width="5" height="23" fill="#00ff00"/>
<rect x="1536" y="579" width="3" height="21" fill="#000"/>
<rect x="1545" y="577" width="1" height="24" fill="#00ff00"/>
<rect x="1543" y="578" width="5" height="19" fill="#00ff00"/>
<rect x="1544" y="579" width="3" height="17" fill="#fff"/>
<rect x="1553" y="593" width="1" height="19" fill="#00ff00"/>
<rect x="1551" y="593" width="5" height="4" fill="#00ff00"/>
<rect x="1552" y="594" width="3" height="2" fill="#000"/>
<rect x="1561" y="541" width="1" height="55" fill="#00ff00"/>
<rect x="1559" y="544" width="5" height="50" fill="#00ff00"/>
<rect x="1560" y="545" width="3" height="48" fill="#000"/>
<rect x="1569" y="535" width="1" height="23" fill="#00ff00"/>
<rect x="1567" y="541" width="5" height="4" fill="#00ff00"/>
<rect x="1568" y="542" width="3" height="2" fill="#000"/>
<rect x="1577" y="536" width="1" height="12" fill="#00ff00"/>
<rect x="1575" y="540" width="5" height="2" fill="#00ff00"/>
<rect x="1585" y="506" width="1" height="36" fill="#00ff00"/>
<rect x="1583" y="528" width="5" height="14" fill="#00ff00"/>
<rect x="1584" y="529" width="3" height="12" fill="#000"/>
<rect x="1593" y="489" width="1" height="45" fill="#00ff00"/>
<rect x="1591" y="511" width="5" height="15" fill="#00ff00"/>
<rect x="1592" y="512" width="3" height="13" fill="#000"/>
<rect x="1601" y="492" width="1" height="32" fill="#00ff00"/>
<rect x="1599" y="511" width="5" height="11" fill="#00ff00"/>
<rect x="1600" y="512" width="3" height="9" fill="#fff"/>
<rect x="1609" y="483" width="1" height="52" fill="#00ff00"/>
<rect x="1607" y="524" width="5" height="7" fill="#00ff00"/>
<rect x="1608" y="525" width="3" height="5" fill="#fff"/>
<rect x="1617" y="530" width="1" height="48" fill="#00ff00"/>
<rect x="1615" y="532" width="5" height="24" fill="#00ff00"/>
<rect x="1616" y="533" width="3" height="22" fill="#fff"/>
<rect x="1625" y="457" width="1" height="101" fill="#00ff00"/>
<rect x="1623" y="486" width="5" height="71" fill="#00ff00"/>
<rect x="1624" y="487" width="3" height="69" fill="#000"/>
<rect x="1633" y="456" width="1" height="72" fill="#00ff00"/>
<rect x="1631" y="456" width="5" height="30" fill="#00ff00"/>
<rect x="1632" y="457" width="3" height="28" fill="#000"/>
<rect x="1641" y="455" width="1" height="50" fill="#00ff00"/>
<rect x="1639" y="456" width="5" height="45" fill="#00ff00"/>
<rect x="1640" y="457" width="3" height="43" fill="#fff"/>
<rect x="1649" y="478" width="1" height="59" fill="#00ff00"/>
<rect x="1647" y="501" width="5" height="21" fill="#00ff00"/>
<rect x="1648" y="502" width="3" height="19" fill="#fff"/>
<rect x="1657" y="504" width="1" height="39" fill="#00ff00"/>
<rect x="1655" y="522" width="5" height="1" fill="#00ff00"/>
<rect x="1665" y="441" width="1" height="84" fill="#00ff00"/>
<rect x="1663" y="448" width="5" height="76" fill="#00ff00"/>
<rect x="1664" y="449" width="3" height="74" fill="#000"/>
<rect x="1673" y="419" width="1" height="58" fill="#00ff00"/>
<rect x="1671" y="424" width="5" height="24" fill="#00ff00"/>
<rect x="1672" y="425" width="3" height="22" fill="#000"/>
<rect x="1681" y="422" width="1" height="41" fill="#00ff00"/>
<rect x="1679" y="423" width="5" height="37" fill="#00ff00"/>
<rect x="1680" y="424" width="3" height="35" fill="#fff"/>
<rect x="1689" y="452" width="1" height="56" fill="#00ff00"/>
<rect x="1687" y="459" width="5" height="49" fill="#00ff00"/>
<rect x="1688" y="460" width="3" height="47" fill="#fff"/>
<rect x="1697" y="471" width="1" height="58" fill="#00ff00"/>
<rect x="1695" y="508" width="5" height="14" fill="#00ff00"/>
<rect x="1696" y="509" width="3" height="12" fill="#fff"/>
<rect x="1705" y="504" width="1" height="31" fill="#00ff00"/>
<rect x="1703" y="512" width="5" height="10" fill="#00ff00"/>
<rect x="1704" y="513" width="3" height="8" fill="#000"/>
<rect x="1713" y="510" width="1" height="23" fill="#00ff00"/>
<rect x="1711" y="512" width="5" height="12" fill="#00ff00"/>
<rect x="1712" y="513" width="3" height="10" fill="#fff"/>
<rect x="1721" y="509" width="1" height="21" fill="#00ff00"/>
<rect x="1719" y="517" width="5" height="1" fill="#00ff00"/>
<rect x="1729" y="515" width="1" height="15" fill="#00ff00"/>
<rect x="1727" y="518" width="5" height="6" fill="#00ff00"/>
<rect x="1728" y="519" width="3" height="4" fill="#fff"/>
<rect x="1737" y="511" width="1" height="36" fill="#00ff00"/>
<rect x="1735" y="513" width="5" height="12" fill="#00ff00"/>
<rect x="1736" y="514" width="3" height="10" fill="#000"/>
<rect x="1745" y="495" width="1" height="27" fill="#00ff00"/>
<rect x="1743" y="508" width="5" height="6" fill="#00ff00"/>
<rect x="1744" y="509" width="3" height="4" fill="#000"/>
<rect x="1753" y="501" width="1" height="12" fill="#00ff00"/>
<rect x="1751" y="506" width="5" height="2" fill="#00ff00"/>
<rect x="1761" y="475" width="1" height="34" fill="#00ff00"/>
<rect x="1759" y="483" width="5" height="25" fill="#00ff00"/>
<rect x="1760" y="484" width="3" height="23" fill="#000"/>
<rect x="1769" y="476" width="1" height="28" fill="#00ff00"/>
<rect x="1767" y="483" width="5" height="17" fill="#00ff00"/>
<rect x="1768" y="484" width="3" height="15" fill="#fff"/>
<rect x="1777" y="481" width="1" height="23" fill="#00ff00"/>
<rect x="1775" y="496" width="5" height="4" fill="#00ff00"/>
<rect x="1776" y="497" width="3" height="2" fill="#000"/>
<rect x="1785" y="471" width="1" height="25" fill="#00ff00"/>
<rect x="1783" y="480" width="5" height="16" fill="#00ff00"/>
<rect x="1784" y="481" width="3" height="14" fill="#000"/>
<rect x="1793" y="463" width="1" height="56" fill="#00ff00"/>
<rect x="1791" y="480" width="5" height="27" fill="#00ff00"/>
<rect x="1792" y="481" width="3" height="25" fill="#fff"/>
<rect x="1801" y="466" width="1" height="48" fill="#00ff00"/>
<rect x="1799" y="506" width="5" height="4" fill="#00ff00"/>
<rect x="1800" y="507" width="3" height="2" fill="#fff"/>
<rect x="1809" y="473" width="1" height="42" fill="#00ff00"/>
<rect x="1807" y="498" width="5" height="12" fill="#00ff00"/>
<rect x="1808" y="499" width="3" height="10" fill="#000"/>
<rect x="1817" y="477" width="1" height="69" fill="#00ff00"/>
<rect x="1815" y="498" width="5" height="41" fill="#00ff00"/>
<rect x="1816" y="499" width="3" height="39" fill="#fff"/>
<rect x="1825" y="495" width="1" height="54" fill="#00ff00"/>
<rect x="1823" y="506" width="5" height="32" fill="#00ff00"/>
<rect x="1824" y="507" width="3" height="30" fill="#000"/>
<rect x="1833" y="480" width="1" height="36" fill="#00ff00"/>
<rect x="1831" y="485" width="5" height="21" fill="#00ff00"/>
<rect x="1832" y="486" width="3" height="19" fill="#000"/>
<rect x="1841" y="431" width="1" height="67" fill="#00ff00"/>
<rect x="1839" y="451" width="5" height="34" fill="#00ff00"/>
<rect x="1840" y="452" width="3" height="32" fill="#000"/>
<rect x="1849" y="406" width="1" height="59" fill="#00ff00"/>
<rect x="1847" y="415" width="5" height="35" fill="#00ff00"/>
<rect x="1848" y="416" width="3" height="33" fill="#000"/>
<rect x="1857" y="370" width="1" height="46" fill="#00ff00"/>
<rect x="1855" y="400" width="5" height="15" fill="#00ff00"/>
<rect x="1856" y="401" width="3" height="13" fill="#000"/>
<path shape-rendering="auto" d="M651.8,185.4 h2 v-2.3 l3.8,3.5 l-3.8,3.5 v-2.3 h-2 z" fill="#fff" stroke="#fff" stroke-width="1.7" stroke-linejoin="round"/><path shape-rendering="auto" d="M651.8,185.4 h2 v-2.3 l3.8,3.5 l-3.8,3.5 v-2.3 h-2 z" fill="#0000ff"/>
<path shape-rendering="auto" d="M651.8,188.8 h2 v-2.3 l3.8,3.5 l-3.8,3.5 v-2.3 h-2 z" fill="#fff" stroke="#fff" stroke-width="1.7" stroke-linejoin="round"/><path shape-rendering="auto" d="M651.8,188.8 h2 v-2.3 l3.8,3.5 l-3.8,3.5 v-2.3 h-2 z" fill="#ff0000"/>
<path shape-rendering="auto" d="M1851.8,181.7 h2 v-2.3 l3.8,3.5 l-3.8,3.5 v-2.3 h-2 z" fill="#fff" stroke="#fff" stroke-width="1.7" stroke-linejoin="round"/><path shape-rendering="auto" d="M1851.8,181.7 h2 v-2.3 l3.8,3.5 l-3.8,3.5 v-2.3 h-2 z" fill="#0000ff"/>
<path shape-rendering="auto" d="M1851.8,185.1 h2 v-2.3 l3.8,3.5 l-3.8,3.5 v-2.3 h-2 z" fill="#fff" stroke="#fff" stroke-width="1.7" stroke-linejoin="round"/><path shape-rendering="auto" d="M1851.8,185.1 h2 v-2.3 l3.8,3.5 l-3.8,3.5 v-2.3 h-2 z" fill="#ff0000"/>
<path shape-rendering="auto" d="M651.8,286.7 h2 v-2.3 l3.8,3.5 l-3.8,3.5 v-2.3 h-2 z" fill="#fff" stroke="#fff" stroke-width="1.7" stroke-linejoin="round"/><path shape-rendering="auto" d="M651.8,286.7 h2 v-2.3 l3.8,3.5 l-3.8,3.5 v-2.3 h-2 z" fill="#0000ff"/>
<path shape-rendering="auto" d="M651.8,290.1 h2 v-2.3 l3.8,3.5 l-3.8,3.5 v-2.3 h-2 z" fill="#fff" stroke="#fff" stroke-width="1.7" stroke-linejoin="round"/><path shape-rendering="auto" d="M651.8,290.1 h2 v-2.3 l3.8,3.5 l-3.8,3.5 v-2.3 h-2 z" fill="#ff0000"/>
<path shape-rendering="auto" d="M723.8,290.1 h2 v-2.3 l3.8,3.5 l-3.8,3.5 v-2.3 h-2 z" fill="#fff" stroke="#fff" stroke-width="1.7" stroke-linejoin="round"/><path shape-rendering="auto" d="M723.8,290.1 h2 v-2.3 l3.8,3.5 l-3.8,3.5 v-2.3 h-2 z" fill="#ff0000"/>
<path shape-rendering="auto" d="M1266.8,283.4 h2 v-2.3 l3.8,3.5 l-3.8,3.5 v-2.3 h-2 z" fill="#fff" stroke="#fff" stroke-width="1.7" stroke-linejoin="round"/><path shape-rendering="auto" d="M1266.8,283.4 h2 v-2.3 l3.8,3.5 l-3.8,3.5 v-2.3 h-2 z" fill="#0000ff"/>
<path shape-rendering="auto" d="M1266.8,286.8 h2 v-2.3 l3.8,3.5 l-3.8,3.5 v-2.3 h-2 z" fill="#fff" stroke="#fff" stroke-width="1.7" stroke-linejoin="round"/><path shape-rendering="auto" d="M1266.8,286.8 h2 v-2.3 l3.8,3.5 l-3.8,3.5 v-2.3 h-2 z" fill="#ff0000"/>
<path shape-rendering="auto" d="M1851.8,280.4 h2 v-2.3 l3.8,3.5 l-3.8,3.5 v-2.3 h-2 z" fill="#fff" stroke="#fff" stroke-width="1.7" stroke-linejoin="round"/><path shape-rendering="auto" d="M1851.8,280.4 h2 v-2.3 l3.8,3.5 l-3.8,3.5 v-2.3 h-2 z" fill="#0000ff"/>
<path shape-rendering="auto" d="M1851.8,283.8 h2 v-2.3 l3.8,3.5 l-3.8,3.5 v-2.3 h-2 z" fill="#fff" stroke="#fff" stroke-width="1.7" stroke-linejoin="round"/><path shape-rendering="auto" d="M1851.8,283.8 h2 v-2.3 l3.8,3.5 l-3.8,3.5 v-2.3 h-2 z" fill="#ff0000"/>
<path shape-rendering="auto" d="M651.8,386.4 h2 v-2.3 l3.8,3.5 l-3.8,3.5 v-2.3 h-2 z" fill="#fff" stroke="#fff" stroke-width="1.7" stroke-linejoin="round"/><path shape-rendering="auto" d="M651.8,386.4 h2 v-2.3 l3.8,3.5 l-3.8,3.5 v-2.3 h-2 z" fill="#0000ff"/>
<path shape-rendering="auto" d="M651.8,389.8 h2 v-2.3 l3.8,3.5 l-3.8,3.5 v-2.3 h-2 z" fill="#fff" stroke="#fff" stroke-width="1.7" stroke-linejoin="round"/><path shape-rendering="auto" d="M651.8,389.8 h2 v-2.3 l3.8,3.5 l-3.8,3.5 v-2.3 h-2 z" fill="#ff0000"/>
<path shape-rendering="auto" d="M667.8,389.3 h2 v-2.3 l3.8,3.5 l-3.8,3.5 v-2.3 h-2 z" fill="#fff" stroke="#fff" stroke-width="1.7" stroke-linejoin="round"/><path shape-rendering="auto" d="M667.8,389.3 h2 v-2.3 l3.8,3.5 l-3.8,3.5 v-2.3 h-2 z" fill="#ff0000"/>
<path shape-rendering="auto" d="M1266.8,381.4 h2 v-2.3 l3.8,3.5 l-3.8,3.5 v-2.3 h-2 z" fill="#fff" stroke="#fff" stroke-width="1.7" stroke-linejoin="round"/><path shape-rendering="auto" d="M1266.8,381.4 h2 v-2.3 l3.8,3.5 l-3.8,3.5 v-2.3 h-2 z" fill="#0000ff"/>
<path shape-rendering="auto" d="M1266.8,384.8 h2 v-2.3 l3.8,3.5 l-3.8,3.5 v-2.3 h-2 z" fill="#fff" stroke="#fff" stroke-width="1.7" stroke-linejoin="round"/><path shape-rendering="auto" d="M1266.8,384.8 h2 v-2.3 l3.8,3.5 l-3.8,3.5 v-2.3 h-2 z" fill="#ff0000"/>
<path shape-rendering="auto" d="M651.8,484.4 h2 v-2.3 l3.8,3.5 l-3.8,3.5 v-2.3 h-2 z" fill="#fff" stroke="#fff" stroke-width="1.7" stroke-linejoin="round"/><path shape-rendering="auto" d="M651.8,484.4 h2 v-2.3 l3.8,3.5 l-3.8,3.5 v-2.3 h-2 z" fill="#0000ff"/>
<path shape-rendering="auto" d="M651.8,487.8 h2 v-2.3 l3.8,3.5 l-3.8,3.5 v-2.3 h-2 z" fill="#fff" stroke="#fff" stroke-width="1.7" stroke-linejoin="round"/><path shape-rendering="auto" d="M651.8,487.8 h2 v-2.3 l3.8,3.5 l-3.8,3.5 v-2.3 h-2 z" fill="#ff0000"/>
<path shape-rendering="auto" d="M1266.8,481.4 h2 v-2.3 l3.8,3.5 l-3.8,3.5 v-2.3 h-2 z" fill="#fff" stroke="#fff" stroke-width="1.7" stroke-linejoin="round"/><path shape-rendering="auto" d="M1266.8,481.4 h2 v-2.3 l3.8,3.5 l-3.8,3.5 v-2.3 h-2 z" fill="#0000ff"/>
<path shape-rendering="auto" d="M1266.8,484.8 h2 v-2.3 l3.8,3.5 l-3.8,3.5 v-2.3 h-2 z" fill="#fff" stroke="#fff" stroke-width="1.7" stroke-linejoin="round"/><path shape-rendering="auto" d="M1266.8,484.8 h2 v-2.3 l3.8,3.5 l-3.8,3.5 v-2.3 h-2 z" fill="#ff0000"/>
<path shape-rendering="auto" d="M1851.8,479.4 h2 v-2.3 l3.8,3.5 l-3.8,3.5 v-2.3 h-2 z" fill="#fff" stroke="#fff" stroke-width="1.7" stroke-linejoin="round"/><path shape-rendering="auto" d="M1851.8,479.4 h2 v-2.3 l3.8,3.5 l-3.8,3.5 v-2.3 h-2 z" fill="#0000ff"/>
<path shape-rendering="auto" d="M1851.8,482.8 h2 v-2.3 l3.8,3.5 l-3.8,3.5 v-2.3 h-2 z" fill="#fff" stroke="#fff" stroke-width="1.7" stroke-linejoin="round"/><path shape-rendering="auto" d="M1851.8,482.8 h2 v-2.3 l3.8,3.5 l-3.8,3.5 v-2.3 h-2 z" fill="#ff0000"/>
<path shape-rendering="auto" d="M651.8,584.4 h2 v-2.3 l3.8,3.5 l-3.8,3.5 v-2.3 h-2 z" fill="#fff" stroke="#fff" stroke-width="1.7" stroke-linejoin="round"/><path shape-rendering="auto" d="M651.8,584.4 h2 v-2.3 l3.8,3.5 l-3.8,3.5 v-2.3 h-2 z" fill="#0000ff"/>
<path shape-rendering="auto" d="M651.8,587.8 h2 v-2.3 l3.8,3.5 l-3.8,3.5 v-2.3 h-2 z" fill="#fff" stroke="#fff" stroke-width="1.7" stroke-linejoin="round"/><path shape-rendering="auto" d="M651.8,587.8 h2 v-2.3 l3.8,3.5 l-3.8,3.5 v-2.3 h-2 z" fill="#ff0000"/>
<path shape-rendering="auto" d="M1268.3,583.3 h2 v-2.3 l3.8,3.5 l-3.8,3.5 v-2.3 h-2 z" fill="#fff" stroke="#fff" stroke-width="1.7" stroke-linejoin="round"/><path shape-rendering="auto" d="M1268.3,583.3 h2 v-2.3 l3.8,3.5 l-3.8,3.5 v-2.3 h-2 z" fill="#ff0000"/>
<path shape-rendering="auto" d="M1851.8,577.4 h2 v-2.3 l3.8,3.5 l-3.8,3.5 v-2.3 h-2 z" fill="#fff" stroke="#fff" stroke-width="1.7" stroke-linejoin="round"/><path shape-rendering="auto" d="M1851.8,577.4 h2 v-2.3 l3.8,3.5 l-3.8,3.5 v-2.3 h-2 z" fill="#0000ff"/>
<path shape-rendering="auto" d="M1851.8,580.8 h2 v-2.3 l3.8,3.5 l-3.8,3.5 v-2.3 h-2 z" fill="#fff" stroke="#fff" stroke-width="1.7" stroke-linejoin="round"/><path shape-rendering="auto" d="M1851.8,580.8 h2 v-2.3 l3.8,3.5 l-3.8,3.5 v-2.3 h-2 z" fill="#ff0000"/>
<path shape-rendering="auto" d="M651.8,683.4 h2 v-2.3 l3.8,3.5 l-3.8,3.5 v-2.3 h-2 z" fill="#fff" stroke="#fff" stroke-width="1.7" stroke-linejoin="round"/><path shape-rendering="auto" d="M651.8,683.4 h2 v-2.3 l3.8,3.5 l-3.8,3.5 v-2.3 h-2 z" fill="#0000ff"/>
<path shape-rendering="auto" d="M651.8,686.8 h2 v-2.3 l3.8,3.5 l-3.8,3.5 v-2.3 h-2 z" fill="#fff" stroke="#fff" stroke-width="1.7" stroke-linejoin="round"/><path shape-rendering="auto" d="M651.8,686.8 h2 v-2.3 l3.8,3.5 l-3.8,3.5 v-2.3 h-2 z" fill="#ff0000"/>
<path shape-rendering="auto" d="M1266.8,680.4 h2 v-2.3 l3.8,3.5 l-3.8,3.5 v-2.3 h-2 z" fill="#fff" stroke="#fff" stroke-width="1.7" stroke-linejoin="round"/><path shape-rendering="auto" d="M1266.8,680.4 h2 v-2.3 l3.8,3.5 l-3.8,3.5 v-2.3 h-2 z" fill="#0000ff"/>
<path shape-rendering="auto" d="M1266.8,683.8 h2 v-2.3 l3.8,3.5 l-3.8,3.5 v-2.3 h-2 z" fill="#fff" stroke="#fff" stroke-width="1.7" stroke-linejoin="round"/><path shape-rendering="auto" d="M1266.8,683.8 h2 v-2.3 l3.8,3.5 l-3.8,3.5 v-2.3 h-2 z" fill="#ff0000"/>
<path shape-rendering="auto" d="M1851.8,677.4 h2 v-2.3 l3.8,3.5 l-3.8,3.5 v-2.3 h-2 z" fill="#fff" stroke="#fff" stroke-width="1.7" stroke-linejoin="round"/><path shape-rendering="auto" d="M1851.8,677.4 h2 v-2.3 l3.8,3.5 l-3.8,3.5 v-2.3 h-2 z" fill="#0000ff"/>
<path shape-rendering="auto" d="M1851.8,680.8 h2 v-2.3 l3.8,3.5 l-3.8,3.5 v-2.3 h-2 z" fill="#fff" stroke="#fff" stroke-width="1.7" stroke-linejoin="round"/><path shape-rendering="auto" d="M1851.8,680.8 h2 v-2.3 l3.8,3.5 l-3.8,3.5 v-2.3 h-2 z" fill="#ff0000"/>
<rect x="658" y="289" width="3" height="1" fill="#ff0000"/><rect x="658" y="291" width="3" height="1" fill="#ff0000"/>
<path shape-rendering="auto" d="M656.3,381.7 L661,376.7 L661,386.7 Z" fill="#ff0000" stroke="#fff" stroke-width="1.3" stroke-linejoin="round"/>
<rect x="1272.5" y="564" width="5.5" height="17" fill="#fff" shape-rendering="auto"/>
<path shape-rendering="auto" d="M1273.2,567.3 L1277.2,564.5 L1277.2,570.1 Z" fill="#ff0000"/>
<path shape-rendering="auto" d="M1273.2,572.8 L1277.2,570 L1277.2,575.6 Z" fill="#ff0000"/>
<path shape-rendering="auto" d="M1273.2,578.3 L1277.2,575.5 L1277.2,581.1 Z" fill="#ff0000"/>
<path shape-rendering="auto" d="M1852,381 L1861.3,374 L1861.3,388 Z" fill="#ff0000" stroke="#fff" stroke-width="1.3" stroke-linejoin="round"/>
<path shape-rendering="auto" d="M1853.5,390 L1861.3,386.25 L1861.3,393.75 Z" fill="#ff0000" stroke="#fff" stroke-width="1.3" stroke-linejoin="round"/>
<rect x="670" y="289" width="7" height="1" fill="#ff0000"/>
<rect x="726" y="190" width="8" height="1" fill="#ff0000"/>
<rect x="296.5" y="100.5" width="1582" height="634" fill="none" stroke="#fff" stroke-width="1"/>
<rect x="297" y="735" width="1" height="3" fill="#fff"/>
<rect x="361" y="735" width="1" height="3" fill="#fff"/>
<rect x="425" y="735" width="1" height="3" fill="#fff"/>
<rect x="489" y="735" width="1" height="3" fill="#fff"/>
<rect x="553" y="735" width="1" height="3" fill="#fff"/>
<rect x="617" y="735" width="1" height="3" fill="#fff"/>
<rect x="681" y="735" width="1" height="3" fill="#fff"/>
<rect x="745" y="735" width="1" height="3" fill="#fff"/>
<rect x="809" y="735" width="1" height="3" fill="#fff"/>
<rect x="873" y="735" width="1" height="3" fill="#fff"/>
<rect x="937" y="735" width="1" height="3" fill="#fff"/>
<rect x="1001" y="735" width="1" height="3" fill="#fff"/>
<rect x="1065" y="735" width="1" height="3" fill="#fff"/>
<rect x="1129" y="735" width="1" height="3" fill="#fff"/>
<rect x="1193" y="735" width="1" height="3" fill="#fff"/>
<rect x="1257" y="735" width="1" height="3" fill="#fff"/>
<rect x="1321" y="735" width="1" height="3" fill="#fff"/>
<rect x="1385" y="735" width="1" height="3" fill="#fff"/>
<rect x="1449" y="735" width="1" height="3" fill="#fff"/>
<rect x="1513" y="735" width="1" height="3" fill="#fff"/>
<rect x="1577" y="735" width="1" height="3" fill="#fff"/>
<rect x="1641" y="735" width="1" height="3" fill="#fff"/>
<rect x="1705" y="735" width="1" height="3" fill="#fff"/>
<rect x="1769" y="735" width="1" height="3" fill="#fff"/>
<rect x="1833" y="735" width="1" height="3" fill="#fff"/>
</svg>
<span class="t" style="left:301.20px;top:103px;font-size:10px;line-height:14px;color:#fff;transform:scaleX(0.9305);">EURUSD.,H1  1.36909 1.37177 1.36907 1.36998</span>
<div class="r" style="left:300px;top:125px;width:135px;height:84px;background:#000;"></div>
<div class="r" style="left:300px;top:125px;width:1px;height:1px;background:#000;"></div>
<span class="t" style="left:301.20px;top:125px;font-size:10px;line-height:14px;color:#fff;transform:scaleX(0.9034);">ESCALERA</span>
<span class="t" style="left:353.50px;top:125px;font-size:10px;line-height:14px;color:#fff;transform:scaleX(1.1557);">&gt;&gt;&gt;&gt;</span>
<span class="t" style="left:387.50px;top:125px;font-size:10px;line-height:14px;color:#fff;transform:scaleX(0.9355);">Tick :</span>
<span class="t" style="left:418.70px;top:125px;font-size:10px;line-height:14px;color:#fff;transform:scaleX(0.9111);">263</span>
<span class="t" style="left:301.20px;top:137px;font-size:10px;line-height:14px;color:#fff;transform:scaleX(0.9187);">Ordenes escalera = 13</span>
<span class="t" style="left:307.50px;top:149px;font-size:10px;line-height:14px;color:#fff;transform:scaleX(0.9741);">Ordenes vivas  = 13</span>
<span class="t" style="left:310.00px;top:161px;font-size:10px;line-height:14px;color:#fff;transform:scaleX(0.9480);">Suma de ST     = 13</span>
<span class="t" style="left:301.20px;top:185px;font-size:10px;line-height:14px;color:#fff;transform:scaleX(0.9218);">Beneficio esperado = 800</span>
<span class="t" style="left:301.20px;top:196px;font-size:10px;line-height:14px;color:#fff;transform:scaleX(0.9741);">BENEFICIO ESCALERA = 41.6</span>
<span class="t" style="left:302.70px;top:175px;font-size:10px;line-height:14px;color:#fff;transform:scaleX(0.9651);background:#000;">#30155095 sell limit</span>
<span class="t" style="left:302.70px;top:274px;font-size:10px;line-height:14px;color:#fff;transform:scaleX(0.9651);background:#000;">#30155089 sell limit</span>
<span class="t" style="left:302.70px;top:376px;font-size:10px;line-height:14px;color:#fff;transform:scaleX(0.9140);background:#000;">#30155087 sell</span>
<span class="t" style="left:302.70px;top:472px;font-size:10px;line-height:14px;color:#fff;transform:scaleX(0.9273);background:#000;">#30155093 sell stop</span>
<span class="t" style="left:302.70px;top:571px;font-size:10px;line-height:14px;color:#fff;transform:scaleX(0.9273);background:#000;">#30155097 sell stop</span>
<span class="t" style="left:302.70px;top:671px;font-size:10px;line-height:14px;color:#fff;transform:scaleX(0.9273);background:#000;">#30155104 sell stop</span>
<svg width="1920" height="1200" viewBox="0 0 1920 1200" shape-rendering="crispEdges"><line x1="385.5" y1="125" x2="385.5" y2="209" stroke="#fff" stroke-width="1" stroke-dasharray="3 3"/><line x1="393.5" y1="125" x2="393.5" y2="209" stroke="#fff" stroke-width="1" stroke-dasharray="3 3"/><line x1="298" y1="156.5" x2="436" y2="156.5" stroke="#778899" stroke-dasharray="3 3"/><line x1="298" y1="186.5" x2="436" y2="186.5" stroke="#ff0000" stroke-dasharray="9 6 3 6"/><line x1="394" y1="183.5" x2="436" y2="183.5" stroke="#00c800" stroke-dasharray="9 6 3 6"/></svg>
<span class="t" style="left:1777.00px;top:104px;font-size:10px;line-height:14px;color:#fff;transform:scaleX(0.9104);">Escalera guevon_35</span>
<svg width="1920" height="1200" viewBox="0 0 1920 1200"><circle cx="1868" cy="109.7" r="4.7" fill="none" stroke="#fff" stroke-width="1"/><path d="M1866,108.5 q2,-2 4,0 M1866,110 q2,2.5 4,0" stroke="#fff" fill="none" stroke-width="0.8"/></svg>
<span class="t" style="left:1884.60px;top:118px;font-size:10px;line-height:14px;color:#fff;transform:scaleX(0.8854);">1.38665</span>
<span class="t" style="left:1884.60px;top:150px;font-size:10px;line-height:14px;color:#fff;transform:scaleX(0.8854);">1.38470</span>
<span class="t" style="left:1884.60px;top:182px;font-size:10px;line-height:14px;color:#fff;transform:scaleX(0.8854);">1.38275</span>
<span class="t" style="left:1884.60px;top:214px;font-size:10px;line-height:14px;color:#fff;transform:scaleX(0.8854);">1.38085</span>
<span class="t" style="left:1884.60px;top:246px;font-size:10px;line-height:14px;color:#fff;transform:scaleX(0.8854);">1.37890</span>
<span class="t" style="left:1884.60px;top:278px;font-size:10px;line-height:14px;color:#fff;transform:scaleX(0.8854);">1.37695</span>
<span class="t" style="left:1884.60px;top:310px;font-size:10px;line-height:14px;color:#fff;transform:scaleX(0.8854);">1.37505</span>
<span class="t" style="left:1884.60px;top:342px;font-size:10px;line-height:14px;color:#fff;transform:scaleX(0.8854);">1.37310</span>
<span class="t" style="left:1884.60px;top:374px;font-size:10px;line-height:14px;color:#fff;transform:scaleX(0.9039);">1.37115</span>
<span class="t" style="left:1884.60px;top:406px;font-size:10px;line-height:14px;color:#fff;transform:scaleX(0.8854);">1.36925</span>
<span class="t" style="left:1884.60px;top:438px;font-size:10px;line-height:14px;color:#fff;transform:scaleX(0.8854);">1.36730</span>
<span class="t" style="left:1884.60px;top:470px;font-size:10px;line-height:14px;color:#fff;transform:scaleX(0.8854);">1.36535</span>
<span class="t" style="left:1884.60px;top:502px;font-size:10px;line-height:14px;color:#fff;transform:scaleX(0.8854);">1.36340</span>
<span class="t" style="left:1884.60px;top:534px;font-size:10px;line-height:14px;color:#fff;transform:scaleX(0.8854);">1.36150</span>
<span class="t" style="left:1884.60px;top:566px;font-size:10px;line-height:14px;color:#fff;transform:scaleX(0.8854);">1.35955</span>
<span class="t" style="left:1884.60px;top:598px;font-size:10px;line-height:14px;color:#fff;transform:scaleX(0.8854);">1.35760</span>
<span class="t" style="left:1884.60px;top:630px;font-size:10px;line-height:14px;color:#fff;transform:scaleX(0.8854);">1.35570</span>
<span class="t" style="left:1884.60px;top:662px;font-size:10px;line-height:14px;color:#fff;transform:scaleX(0.8854);">1.35375</span>
<span class="t" style="left:1884.60px;top:694px;font-size:10px;line-height:14px;color:#fff;transform:scaleX(0.8854);">1.35180</span>
<span class="t" style="left:1884.60px;top:726px;font-size:10px;line-height:14px;color:#fff;transform:scaleX(0.8854);">1.34990</span>
<div class="r" style="left:1880px;top:390px;width:38px;height:5px;background:#ff0000;"></div>
<div class="r" style="left:1880px;top:394px;width:38px;height:11px;background:#fff;"></div>
<span class="t" style="left:1884.60px;top:394px;font-size:10px;line-height:14px;color:#000;transform:scaleX(0.8854);">1.36998</span>
<span class="t" style="left:296.30px;top:737px;font-size:10px;line-height:14px;color:#fff;transform:scaleX(0.9134);">28 Jan 2011</span>
<span class="t" style="left:360.30px;top:737px;font-size:10px;line-height:14px;color:#fff;transform:scaleX(0.9114);">28 Jan 19:00</span>
<span class="t" style="left:424.30px;top:737px;font-size:10px;line-height:14px;color:#fff;transform:scaleX(0.9114);">31 Jan 04:00</span>
<span class="t" style="left:488.30px;top:737px;font-size:10px;line-height:14px;color:#fff;transform:scaleX(0.9114);">31 Jan 12:00</span>
<span class="t" style="left:552.30px;top:737px;font-size:10px;line-height:14px;color:#fff;transform:scaleX(0.9114);">31 Jan 20:00</span>
<span class="t" style="left:616.30px;top:737px;font-size:10px;line-height:14px;color:#fff;transform:scaleX(0.9294);">1 Feb 04:00</span>
<span class="t" style="left:680.30px;top:737px;font-size:10px;line-height:14px;color:#fff;transform:scaleX(0.9294);">1 Feb 12:00</span>
<span class="t" style="left:744.30px;top:737px;font-size:10px;line-height:14px;color:#fff;transform:scaleX(0.9294);">1 Feb 20:00</span>
<span class="t" style="left:808.30px;top:737px;font-size:10px;line-height:14px;color:#fff;transform:scaleX(0.9294);">2 Feb 04:00</span>
<span class="t" style="left:872.30px;top:737px;font-size:10px;line-height:14px;color:#fff;transform:scaleX(0.9294);">2 Feb 12:00</span>
<span class="t" style="left:936.30px;top:737px;font-size:10px;line-height:14px;color:#fff;transform:scaleX(0.9294);">2 Feb 20:00</span>
<span class="t" style="left:1000.30px;top:737px;font-size:10px;line-height:14px;color:#fff;transform:scaleX(0.9294);">3 Feb 04:00</span>
<span class="t" style="left:1064.30px;top:737px;font-size:10px;line-height:14px;color:#fff;transform:scaleX(0.9294);">3 Feb 12:00</span>
<span class="t" style="left:1128.30px;top:737px;font-size:10px;line-height:14px;color:#fff;transform:scaleX(0.9294);">3 Feb 20:00</span>
<span class="t" style="left:1192.30px;top:737px;font-size:10px;line-height:14px;color:#fff;transform:scaleX(0.9294);">4 Feb 04:00</span>
<span class="t" style="left:1256.30px;top:737px;font-size:10px;line-height:14px;color:#fff;transform:scaleX(0.9294);">4 Feb 12:00</span>
<span class="t" style="left:1320.30px;top:737px;font-size:10px;line-height:14px;color:#fff;transform:scaleX(0.9294);">4 Feb 20:00</span>
<span class="t" style="left:1384.30px;top:737px;font-size:10px;line-height:14px;color:#fff;transform:scaleX(0.9294);">7 Feb 05:00</span>
<span class="t" style="left:1448.30px;top:737px;font-size:10px;line-height:14px;color:#fff;transform:scaleX(0.9294);">7 Feb 13:00</span>
<span class="t" style="left:1512.30px;top:737px;font-size:10px;line-height:14px;color:#fff;transform:scaleX(0.9294);">7 Feb 21:00</span>
<span class="t" style="left:1576.30px;top:737px;font-size:10px;line-height:14px;color:#fff;transform:scaleX(0.9294);">8 Feb 05:00</span>
<span class="t" style="left:1640.30px;top:737px;font-size:10px;line-height:14px;color:#fff;transform:scaleX(0.9294);">8 Feb 13:00</span>
<span class="t" style="left:1704.30px;top:737px;font-size:10px;line-height:14px;color:#fff;transform:scaleX(0.9294);">8 Feb 21:00</span>
<span class="t" style="left:1768.30px;top:737px;font-size:10px;line-height:14px;color:#fff;transform:scaleX(0.9294);">9 Feb 05:00</span>
<span class="t" style="left:1832.30px;top:737px;font-size:10px;line-height:14px;color:#fff;transform:scaleX(0.9294);">9 Feb 13:00</span>
<div class="r" style="left:294px;top:752px;width:1626px;height:2px;background:#fff;"></div>
<div class="r" style="left:294px;top:754px;width:1626px;height:1px;background:#000;"></div>
<div class="r" style="left:296px;top:754px;width:84px;height:18px;background:#fff;border:1px solid #000;border-top:none;box-shadow:1px 1px 0 #808080;box-sizing:border-box;"></div>
<span class="t" style="left:306.50px;top:756px;font-size:11px;line-height:15px;color:#000;transform:scaleX(0.9156);">EURUSD.,H1</span>
<span class="t" style="left:390.00px;top:756px;font-size:11px;line-height:15px;color:#808080;transform:scaleX(0.9412);">EURJPY.,H1</span>
<span class="t" style="left:470.00px;top:756px;font-size:11px;line-height:15px;color:#808080;transform:scaleX(0.9492);">USDJPY.,H1</span>
<span class="t" style="left:551.50px;top:756px;font-size:11px;line-height:15px;color:#808080;transform:scaleX(0.9727);">OIL,Daily</span>
<span class="t" style="left:618.50px;top:756px;font-size:11px;line-height:15px;color:#808080;transform:scaleX(0.9518);">SPA35,Daily</span>
<div class="r" style="left:460px;top:758px;width:1px;height:12px;background:#808080;"></div>
<div class="r" style="left:540px;top:758px;width:1px;height:12px;background:#808080;"></div>
<div class="r" style="left:608px;top:758px;width:1px;height:12px;background:#808080;"></div>
<div class="r" style="left:688px;top:758px;width:1px;height:12px;background:#808080;"></div>
<svg width="1920" height="1200" viewBox="0 0 1920 1200"><path d="M1896,761 v7 l-4,-3.5z M1909,761 v7 l4,-3.5z" fill="#a0a0a0"/></svg>
<div class="r" style="left:0px;top:773px;width:1920px;height:1px;background:#a0a0a0;"></div>
<div class="r" style="left:0px;top:774px;width:1920px;height:1px;background:#fcfcfc;"></div>
<div class="r" style="left:1px;top:792px;width:13px;height:343px;background:#cfdcec;"></div>
<svg width="1920" height="1200" viewBox="0 0 1920 1200"><path d="M4.500,781 l5,5 M9.500,781 l-5,5" stroke="#000" stroke-width="1.600"/></svg>
<span class="t" style="left:-14px;top:1105px;width:44px;font-size:11px;line-height:14px;color:#505050;transform:rotate(-90deg);transform-origin:50% 50%;text-align:center;">Terminal</span>
<div class="r" style="left:15px;top:778px;width:1902px;height:1px;background:#a0a0a0;"></div>
<div class="r" style="left:15px;top:778px;width:1px;height:337px;background:#a0a0a0;"></div>
<div class="r" style="left:1916px;top:778px;width:1px;height:337px;background:#a0a0a0;"></div>
<div class="r" style="left:16px;top:779px;width:1900px;height:336px;background:#fff;"></div>
<div class="r" style="left:16px;top:779px;width:1900px;height:22px;background:linear-gradient(180deg,#ffffff 0,#ffffff 40%,#f1f3f6 45%,#f7f8fa 100%);"></div>
<div class="r" style="left:16px;top:801px;width:1900px;height:1px;background:#d5d5d5;"></div>
<div class="r" style="left:16px;top:802px;width:1900px;height:1px;background:#f0f0f0;"></div>
<div class="r" style="left:16px;top:823px;width:1900px;height:1px;background:#d0d0d0;"></div>
<div class="r" style="left:16px;top:823px;width:1900px;height:21px;background:#c8c8c8;"></div>
<div class="r" style="left:16px;top:863px;width:1900px;height:1px;background:#d0d0d0;"></div>
<div class="r" style="left:16px;top:863px;width:1900px;height:20px;background:#e9e9e9;"></div>
<div class="r" style="left:16px;top:883px;width:1900px;height:1px;background:#d0d0d0;"></div>
<div class="r" style="left:16px;top:903px;width:1900px;height:1px;background:#d0d0d0;"></div>
<div class="r" style="left:16px;top:903px;width:1900px;height:20px;background:#e9e9e9;"></div>
<div class="r" style="left:16px;top:923px;width:1900px;height:1px;background:#d0d0d0;"></div>
<div class="r" style="left:16px;top:943px;width:1900px;height:1px;background:#d0d0d0;"></div>
<div class="r" style="left:16px;top:943px;width:1900px;height:20px;background:#e9e9e9;"></div>
<div class="r" style="left:16px;top:963px;width:1900px;height:1px;background:#d0d0d0;"></div>
<div class="r" style="left:16px;top:983px;width:1900px;height:1px;background:#d0d0d0;"></div>
<div class="r" style="left:16px;top:983px;width:1900px;height:20px;background:#e9e9e9;"></div>
<div class="r" style="left:16px;top:1003px;width:1900px;height:1px;background:#d0d0d0;"></div>
<div class="r" style="left:16px;top:1023px;width:1900px;height:1px;background:#d0d0d0;"></div>
<div class="r" style="left:16px;top:1023px;width:1900px;height:20px;background:#e9e9e9;"></div>
<div class="r" style="left:16px;top:1043px;width:1900px;height:1px;background:#d0d0d0;"></div>
<div class="r" style="left:16px;top:1063px;width:1900px;height:1px;background:#d0d0d0;"></div>
<div class="r" style="left:16px;top:1063px;width:1900px;height:20px;background:#e9e9e9;"></div>
<div class="r" style="left:16px;top:1082px;width:1900px;height:1px;background:#d0d0d0;"></div>
<div class="r" style="left:16px;top:1083px;width:1900px;height:1px;background:#fff;"></div>
<div class="r" style="left:202px;top:779px;width:1px;height:22px;background:#e2e4e8;"></div>
<div class="r" style="left:202px;top:803px;width:1px;height:20px;background:#d0d0d0;"></div>
<div class="r" style="left:202px;top:843px;width:1px;height:239px;background:#d0d0d0;"></div>
<div class="r" style="left:521px;top:779px;width:1px;height:22px;background:#e2e4e8;"></div>
<div class="r" style="left:521px;top:803px;width:1px;height:20px;background:#d0d0d0;"></div>
<div class="r" style="left:521px;top:843px;width:1px;height:239px;background:#d0d0d0;"></div>
<div class="r" style="left:651px;top:779px;width:1px;height:22px;background:#e2e4e8;"></div>
<div class="r" style="left:651px;top:803px;width:1px;height:20px;background:#d0d0d0;"></div>
<div class="r" style="left:651px;top:843px;width:1px;height:239px;background:#d0d0d0;"></div>
<div class="r" style="left:752px;top:779px;width:1px;height:22px;background:#e2e4e8;"></div>
<div class="r" style="left:752px;top:803px;width:1px;height:20px;background:#d0d0d0;"></div>
<div class="r" style="left:752px;top:843px;width:1px;height:239px;background:#d0d0d0;"></div>
<div class="r" style="left:882px;top:779px;width:1px;height:22px;background:#e2e4e8;"></div>
<div class="r" style="left:882px;top:803px;width:1px;height:20px;background:#d0d0d0;"></div>
<div class="r" style="left:882px;top:843px;width:1px;height:239px;background:#d0d0d0;"></div>
<div class="r" style="left:1027px;top:779px;width:1px;height:22px;background:#e2e4e8;"></div>
<div class="r" style="left:1027px;top:803px;width:1px;height:20px;background:#d0d0d0;"></div>
<div class="r" style="left:1027px;top:843px;width:1px;height:239px;background:#d0d0d0;"></div>
<div class="r" style="left:1172px;top:779px;width:1px;height:22px;background:#e2e4e8;"></div>
<div class="r" style="left:1172px;top:803px;width:1px;height:20px;background:#d0d0d0;"></div>
<div class="r" style="left:1172px;top:843px;width:1px;height:239px;background:#d0d0d0;"></div>
<div class="r" style="left:1317px;top:779px;width:1px;height:22px;background:#e2e4e8;"></div>
<div class="r" style="left:1317px;top:803px;width:1px;height:20px;background:#d0d0d0;"></div>
<div class="r" style="left:1317px;top:843px;width:1px;height:239px;background:#d0d0d0;"></div>
<div class="r" style="left:1462px;top:779px;width:1px;height:22px;background:#e2e4e8;"></div>
<div class="r" style="left:1462px;top:803px;width:1px;height:20px;background:#d0d0d0;"></div>
<div class="r" style="left:1462px;top:843px;width:1px;height:239px;background:#d0d0d0;"></div>
<div class="r" style="left:1607px;top:779px;width:1px;height:22px;background:#e2e4e8;"></div>
<div class="r" style="left:1607px;top:803px;width:1px;height:20px;background:#d0d0d0;"></div>
<div class="r" style="left:1752px;top:779px;width:1px;height:22px;background:#e2e4e8;"></div>
<div class="r" style="left:1752px;top:803px;width:1px;height:20px;background:#d0d0d0;"></div>
<div class="r" style="left:1752px;top:843px;width:1px;height:239px;background:#d0d0d0;"></div>
<div class="r" style="left:1607px;top:803px;width:1px;height:20px;background:#d0d0d0;"></div>
<span class="t" style="left:22.50px;top:784px;font-size:11px;line-height:15px;color:#000;transform:scaleX(1.0468);">Orden</span>
<span class="t" style="left:480.00px;top:784px;font-size:11px;line-height:15px;color:#000;transform:scaleX(1.0202);">Tiempo</span>
<span class="t" style="left:625.00px;top:784px;font-size:11px;line-height:15px;color:#000;transform:scaleX(1.0482);">Tipo</span>
<span class="t" style="left:701.50px;top:784px;font-size:11px;line-height:15px;color:#000;transform:scaleX(1.0746);">Volumen</span>
<span class="t" style="left:836.20px;top:784px;font-size:11px;line-height:15px;color:#000;transform:scaleX(1.0285);">Símbolo</span>
<span class="t" style="left:991.80px;top:784px;font-size:11px;line-height:15px;color:#000;transform:scaleX(0.9943);">Precio</span>
<span class="t" style="left:1146.50px;top:784px;font-size:11px;line-height:15px;color:#000;transform:scaleX(0.9282);">S / L</span>
<span class="t" style="left:1290.60px;top:784px;font-size:11px;line-height:15px;color:#000;transform:scaleX(0.9554);">T / P</span>
<span class="t" style="left:1426.70px;top:784px;font-size:11px;line-height:15px;color:#000;transform:scaleX(0.9943);">Precio</span>
<span class="t" style="left:1555.30px;top:784px;font-size:11px;line-height:15px;color:#000;transform:scaleX(1.0361);">Comisión</span>
<span class="t" style="left:1719.50px;top:784px;font-size:11px;line-height:15px;color:#000;transform:scaleX(1.0176);">Swap</span>
<span class="t" style="left:1857.30px;top:784px;font-size:11px;line-height:15px;color:#000;transform:scaleX(1.0345);">Beneficios</span>
<svg width="1920" height="1200" viewBox="0 0 1920 1200"><path d="M67.500,795 l3.500,-7 3.500,7" stroke="#b8b8b8" fill="none"/></svg>
<svg width="1920" height="1200" viewBox="0 0 1920 1200">
<path d="M20,806.5 h7.500 l3,3 v9.500 h-10.500 z" fill="#fdfdfd" stroke="#6a6a6a" stroke-width="0.900"/><path d="M27.500,806.5 v3 h3" fill="none" stroke="#6a6a6a" stroke-width="0.800"/>
<circle cx="29.500" cy="817.5" r="3.200" fill="#f05a28" stroke="#b03010" stroke-width="0.700"/>
<rect x="19.500" y="826.5" width="11" height="12.500" rx="1" fill="#fdfdfd" stroke="#6a6a6a" stroke-width="0.900"/>
<path d="M25,829.5 l-3.500,3.500 h2 v3 h3 v-3 h2 z" fill="#20b020" stroke="#0a700a" stroke-width="0.600"/>
<path d="M20,846.5 h7.500 l3,3 v9.500 h-10.500 z" fill="#fdfdfd" stroke="#6a6a6a" stroke-width="0.900"/><path d="M27.500,846.5 v3 h3" fill="none" stroke="#6a6a6a" stroke-width="0.800"/>
<circle cx="29.500" cy="857.5" r="3.200" fill="#2a90f0" stroke="#1060b0" stroke-width="0.700"/>
<path d="M20,866.5 h7.500 l3,3 v9.500 h-10.500 z" fill="#fdfdfd" stroke="#6a6a6a" stroke-width="0.900"/><path d="M27.500,866.5 v3 h3" fill="none" stroke="#6a6a6a" stroke-width="0.800"/>
<circle cx="29.500" cy="877.5" r="3.200" fill="#f05a28" stroke="#b03010" stroke-width="0.700"/>
<path d="M20,886.5 h7.500 l3,3 v9.500 h-10.500 z" fill="#fdfdfd" stroke="#6a6a6a" stroke-width="0.900"/><path d="M27.500,886.5 v3 h3" fill="none" stroke="#6a6a6a" stroke-width="0.800"/>
<circle cx="29.500" cy="897.5" r="3.200" fill="#2a90f0" stroke="#1060b0" stroke-width="0.700"/>
<path d="M20,906.5 h7.500 l3,3 v9.500 h-10.500 z" fill="#fdfdfd" stroke="#6a6a6a" stroke-width="0.900"/><path d="M27.500,906.5 v3 h3" fill="none" stroke="#6a6a6a" stroke-width="0.800"/>
<circle cx="29.500" cy="917.5" r="3.200" fill="#f05a28" stroke="#b03010" stroke-width="0.700"/>
<path d="M20,926.5 h7.500 l3,3 v9.500 h-10.500 z" fill="#fdfdfd" stroke="#6a6a6a" stroke-width="0.900"/><path d="M27.500,926.5 v3 h3" fill="none" stroke="#6a6a6a" stroke-width="0.800"/>
<circle cx="29.500" cy="937.5" r="3.200" fill="#2a90f0" stroke="#1060b0" stroke-width="0.700"/>
<path d="M20,946.5 h7.500 l3,3 v9.500 h-10.500 z" fill="#fdfdfd" stroke="#6a6a6a" stroke-width="0.900"/><path d="M27.500,946.5 v3 h3" fill="none" stroke="#6a6a6a" stroke-width="0.800"/>
<circle cx="29.500" cy="957.5" r="3.200" fill="#f05a28" stroke="#b03010" stroke-width="0.700"/>
<path d="M20,966.5 h7.500 l3,3 v9.500 h-10.500 z" fill="#fdfdfd" stroke="#6a6a6a" stroke-width="0.900"/><path d="M27.500,966.5 v3 h3" fill="none" stroke="#6a6a6a" stroke-width="0.800"/>
<circle cx="29.500" cy="977.5" r="3.200" fill="#2a90f0" stroke="#1060b0" stroke-width="0.700"/>
<path d="M20,986.5 h7.500 l3,3 v9.500 h-10.500 z" fill="#fdfdfd" stroke="#6a6a6a" stroke-width="0.900"/><path d="M27.500,986.5 v3 h3" fill="none" stroke="#6a6a6a" stroke-width="0.800"/>
<circle cx="29.500" cy="997.5" r="3.200" fill="#f05a28" stroke="#b03010" stroke-width="0.700"/>
<path d="M20,1006.5 h7.500 l3,3 v9.500 h-10.500 z" fill="#fdfdfd" stroke="#6a6a6a" stroke-width="0.900"/><path d="M27.500,1006.5 v3 h3" fill="none" stroke="#6a6a6a" stroke-width="0.800"/>
<circle cx="29.500" cy="1017.5" r="3.200" fill="#2a90f0" stroke="#1060b0" stroke-width="0.700"/>
<path d="M20,1026.5 h7.500 l3,3 v9.500 h-10.500 z" fill="#fdfdfd" stroke="#6a6a6a" stroke-width="0.900"/><path d="M27.500,1026.5 v3 h3" fill="none" stroke="#6a6a6a" stroke-width="0.800"/>
<circle cx="29.500" cy="1037.5" r="3.200" fill="#f05a28" stroke="#b03010" stroke-width="0.700"/>
<path d="M20,1046.5 h7.500 l3,3 v9.500 h-10.500 z" fill="#fdfdfd" stroke="#6a6a6a" stroke-width="0.900"/><path d="M27.500,1046.5 v3 h3" fill="none" stroke="#6a6a6a" stroke-width="0.800"/>
<circle cx="29.500" cy="1057.5" r="3.200" fill="#2a90f0" stroke="#1060b0" stroke-width="0.700"/>
<path d="M20,1066.5 h7.500 l3,3 v9.500 h-10.500 z" fill="#fdfdfd" stroke="#6a6a6a" stroke-width="0.900"/><path d="M27.500,1066.5 v3 h3" fill="none" stroke="#6a6a6a" stroke-width="0.800"/>
<circle cx="29.500" cy="1077.5" r="3.200" fill="#f05a28" stroke="#b03010" stroke-width="0.700"/>
</svg>
<span class="t" style="left:40.90px;top:806px;font-size:11px;line-height:15px;color:#000;transform:scaleX(0.9645);">30155087</span>
<span class="t" style="left:434.90px;top:806px;font-size:11px;line-height:15px;color:#000;transform:scaleX(0.9857);">2011.02.09 16:11</span>
<span class="t" style="left:632.50px;top:806px;font-size:11px;line-height:15px;color:#000;">sell</span>
<span class="t" style="left:727.90px;top:806px;font-size:11px;line-height:15px;color:#000;">1.00</span>
<span class="t" style="left:841.40px;top:806px;font-size:11px;line-height:15px;color:#000;transform:scaleX(1.0494);">eurusd.</span>
<span class="t" style="left:985.60px;top:806px;font-size:11px;line-height:15px;color:#000;transform:scaleX(0.9809);">1.37074</span>
<span class="t" style="left:1130.30px;top:806px;font-size:11px;line-height:15px;color:#000;transform:scaleX(0.9809);">1.37691</span>
<span class="t" style="left:1275.40px;top:806px;font-size:11px;line-height:15px;color:#000;transform:scaleX(0.9809);">0.00000</span>
<span class="t" style="left:1420.50px;top:806px;font-size:11px;line-height:15px;color:#000;transform:scaleX(0.9809);">1.37017</span>
<span class="t" style="left:1583.10px;top:806px;font-size:11px;line-height:15px;color:#000;">0.00</span>
<span class="t" style="left:1727.80px;top:806px;font-size:11px;line-height:15px;color:#000;">0.00</span>
<span class="t" style="left:1884.10px;top:806px;font-size:11px;line-height:15px;color:#000;">41.60</span>
<span class="t" style="left:41.20px;top:826px;font-size:11px;line-height:15px;color:#000;font-weight:bold;transform:scaleX(0.9900);">Balance: 19 783.39  Patrimonio: 19 824.99  Margen: 1 000.00  Margen libre: 18 783.39  Nivel del margen: 1982.50%</span>
<span class="t" style="left:1884.10px;top:826px;font-size:11px;line-height:15px;color:#000;font-weight:bold;">41.60</span>
<span class="t" style="left:40.90px;top:846px;font-size:11px;line-height:15px;color:#000;transform:scaleX(0.9645);">30155088</span>
<span class="t" style="left:434.90px;top:846px;font-size:11px;line-height:15px;color:#000;transform:scaleX(0.9857);">2011.02.09 16:11</span>
<span class="t" style="left:604.50px;top:846px;font-size:11px;line-height:15px;color:#000;transform:scaleX(1.0702);">buy stop</span>
<span class="t" style="left:727.90px;top:846px;font-size:11px;line-height:15px;color:#000;">1.00</span>
<span class="t" style="left:841.40px;top:846px;font-size:11px;line-height:15px;color:#000;transform:scaleX(1.0494);">eurusd.</span>
<span class="t" style="left:985.60px;top:846px;font-size:11px;line-height:15px;color:#000;transform:scaleX(0.9809);">1.37706</span>
<span class="t" style="left:1130.30px;top:846px;font-size:11px;line-height:15px;color:#000;transform:scaleX(0.9809);">1.37089</span>
<span class="t" style="left:1275.40px;top:846px;font-size:11px;line-height:15px;color:#000;transform:scaleX(0.9809);">0.00000</span>
<span class="t" style="left:1420.50px;top:846px;font-size:11px;line-height:15px;color:#000;transform:scaleX(0.9809);">1.37017</span>
<span class="t" style="left:40.90px;top:866px;font-size:11px;line-height:15px;color:#000;transform:scaleX(0.9645);">30155089</span>
<span class="t" style="left:434.90px;top:866px;font-size:11px;line-height:15px;color:#000;transform:scaleX(0.9857);">2011.02.09 16:11</span>
<span class="t" style="left:607.50px;top:866px;font-size:11px;line-height:15px;color:#000;transform:scaleX(1.0611);">sell limit</span>
<span class="t" style="left:727.90px;top:866px;font-size:11px;line-height:15px;color:#000;">1.00</span>
<span class="t" style="left:841.40px;top:866px;font-size:11px;line-height:15px;color:#000;transform:scaleX(1.0494);">eurusd.</span>
<span class="t" style="left:985.60px;top:866px;font-size:11px;line-height:15px;color:#000;transform:scaleX(0.9809);">1.37689</span>
<span class="t" style="left:1130.30px;top:866px;font-size:11px;line-height:15px;color:#000;transform:scaleX(0.9809);">1.38306</span>
<span class="t" style="left:1275.40px;top:866px;font-size:11px;line-height:15px;color:#000;transform:scaleX(0.9809);">0.00000</span>
<span class="t" style="left:1420.50px;top:866px;font-size:11px;line-height:15px;color:#000;transform:scaleX(0.9809);">1.36998</span>
<span class="t" style="left:40.90px;top:886px;font-size:11px;line-height:15px;color:#000;transform:scaleX(0.9645);">30155090</span>
<span class="t" style="left:434.90px;top:886px;font-size:11px;line-height:15px;color:#000;transform:scaleX(0.9857);">2011.02.09 16:11</span>
<span class="t" style="left:605.50px;top:886px;font-size:11px;line-height:15px;color:#000;transform:scaleX(1.0783);">buy limit</span>
<span class="t" style="left:727.90px;top:886px;font-size:11px;line-height:15px;color:#000;">1.00</span>
<span class="t" style="left:841.40px;top:886px;font-size:11px;line-height:15px;color:#000;transform:scaleX(1.0494);">eurusd.</span>
<span class="t" style="left:985.60px;top:886px;font-size:11px;line-height:15px;color:#000;transform:scaleX(0.9809);">1.36506</span>
<span class="t" style="left:1130.30px;top:886px;font-size:11px;line-height:15px;color:#000;transform:scaleX(0.9809);">1.35889</span>
<span class="t" style="left:1275.40px;top:886px;font-size:11px;line-height:15px;color:#000;transform:scaleX(0.9809);">0.00000</span>
<span class="t" style="left:1420.50px;top:886px;font-size:11px;line-height:15px;color:#000;transform:scaleX(0.9809);">1.37017</span>
<span class="t" style="left:40.90px;top:906px;font-size:11px;line-height:15px;color:#000;transform:scaleX(0.9645);">30155093</span>
<span class="t" style="left:434.90px;top:906px;font-size:11px;line-height:15px;color:#000;transform:scaleX(0.9857);">2011.02.09 16:11</span>
<span class="t" style="left:606.50px;top:906px;font-size:11px;line-height:15px;color:#000;transform:scaleX(1.0532);">sell stop</span>
<span class="t" style="left:727.90px;top:906px;font-size:11px;line-height:15px;color:#000;">1.00</span>
<span class="t" style="left:841.40px;top:906px;font-size:11px;line-height:15px;color:#000;transform:scaleX(1.0494);">eurusd.</span>
<span class="t" style="left:985.60px;top:906px;font-size:11px;line-height:15px;color:#000;transform:scaleX(0.9809);">1.36489</span>
<span class="t" style="left:1130.30px;top:906px;font-size:11px;line-height:15px;color:#000;transform:scaleX(0.9809);">1.37106</span>
<span class="t" style="left:1275.40px;top:906px;font-size:11px;line-height:15px;color:#000;transform:scaleX(0.9809);">0.00000</span>
<span class="t" style="left:1420.50px;top:906px;font-size:11px;line-height:15px;color:#000;transform:scaleX(0.9809);">1.36998</span>
<span class="t" style="left:40.90px;top:926px;font-size:11px;line-height:15px;color:#000;transform:scaleX(0.9645);">30155094</span>
<span class="t" style="left:434.90px;top:926px;font-size:11px;line-height:15px;color:#000;transform:scaleX(0.9857);">2011.02.09 16:11</span>
<span class="t" style="left:604.50px;top:926px;font-size:11px;line-height:15px;color:#000;transform:scaleX(1.0702);">buy stop</span>
<span class="t" style="left:727.90px;top:926px;font-size:11px;line-height:15px;color:#000;">1.00</span>
<span class="t" style="left:841.40px;top:926px;font-size:11px;line-height:15px;color:#000;transform:scaleX(1.0494);">eurusd.</span>
<span class="t" style="left:985.60px;top:926px;font-size:11px;line-height:15px;color:#000;transform:scaleX(0.9809);">1.38306</span>
<span class="t" style="left:1130.30px;top:926px;font-size:11px;line-height:15px;color:#000;transform:scaleX(0.9809);">1.37689</span>
<span class="t" style="left:1275.40px;top:926px;font-size:11px;line-height:15px;color:#000;transform:scaleX(0.9809);">0.00000</span>
<span class="t" style="left:1420.50px;top:926px;font-size:11px;line-height:15px;color:#000;transform:scaleX(0.9809);">1.37017</span>
<span class="t" style="left:40.90px;top:946px;font-size:11px;line-height:15px;color:#000;transform:scaleX(0.9645);">30155095</span>
<span class="t" style="left:434.90px;top:946px;font-size:11px;line-height:15px;color:#000;transform:scaleX(0.9857);">2011.02.09 16:11</span>
<span class="t" style="left:607.50px;top:946px;font-size:11px;line-height:15px;color:#000;transform:scaleX(1.0611);">sell limit</span>
<span class="t" style="left:727.90px;top:946px;font-size:11px;line-height:15px;color:#000;">1.00</span>
<span class="t" style="left:841.40px;top:946px;font-size:11px;line-height:15px;color:#000;transform:scaleX(1.0494);">eurusd.</span>
<span class="t" style="left:985.60px;top:946px;font-size:11px;line-height:15px;color:#000;transform:scaleX(0.9809);">1.38289</span>
<span class="t" style="left:1130.30px;top:946px;font-size:11px;line-height:15px;color:#000;transform:scaleX(0.9809);">1.38906</span>
<span class="t" style="left:1275.40px;top:946px;font-size:11px;line-height:15px;color:#000;transform:scaleX(0.9809);">0.00000</span>
<span class="t" style="left:1420.50px;top:946px;font-size:11px;line-height:15px;color:#000;transform:scaleX(0.9809);">1.36998</span>
<span class="t" style="left:40.90px;top:966px;font-size:11px;line-height:15px;color:#000;transform:scaleX(0.9645);">30155096</span>
<span class="t" style="left:434.90px;top:966px;font-size:11px;line-height:15px;color:#000;transform:scaleX(0.9857);">2011.02.09 16:11</span>
<span class="t" style="left:605.50px;top:966px;font-size:11px;line-height:15px;color:#000;transform:scaleX(1.0783);">buy limit</span>
<span class="t" style="left:727.90px;top:966px;font-size:11px;line-height:15px;color:#000;">1.00</span>
<span class="t" style="left:841.40px;top:966px;font-size:11px;line-height:15px;color:#000;transform:scaleX(1.0494);">eurusd.</span>
<span class="t" style="left:985.60px;top:966px;font-size:11px;line-height:15px;color:#000;transform:scaleX(0.9809);">1.35906</span>
<span class="t" style="left:1130.30px;top:966px;font-size:11px;line-height:15px;color:#000;transform:scaleX(0.9809);">1.35289</span>
<span class="t" style="left:1275.40px;top:966px;font-size:11px;line-height:15px;color:#000;transform:scaleX(0.9809);">0.00000</span>
<span class="t" style="left:1420.50px;top:966px;font-size:11px;line-height:15px;color:#000;transform:scaleX(0.9809);">1.37017</span>
<span class="t" style="left:40.90px;top:986px;font-size:11px;line-height:15px;color:#000;transform:scaleX(0.9645);">30155097</span>
<span class="t" style="left:434.90px;top:986px;font-size:11px;line-height:15px;color:#000;transform:scaleX(0.9857);">2011.02.09 16:11</span>
<span class="t" style="left:606.50px;top:986px;font-size:11px;line-height:15px;color:#000;transform:scaleX(1.0532);">sell stop</span>
<span class="t" style="left:727.90px;top:986px;font-size:11px;line-height:15px;color:#000;">1.00</span>
<span class="t" style="left:841.40px;top:986px;font-size:11px;line-height:15px;color:#000;transform:scaleX(1.0494);">eurusd.</span>
<span class="t" style="left:985.60px;top:986px;font-size:11px;line-height:15px;color:#000;transform:scaleX(0.9809);">1.35889</span>
<span class="t" style="left:1130.30px;top:986px;font-size:11px;line-height:15px;color:#000;transform:scaleX(0.9809);">1.36506</span>
<span class="t" style="left:1275.40px;top:986px;font-size:11px;line-height:15px;color:#000;transform:scaleX(0.9809);">0.00000</span>
<span class="t" style="left:1420.50px;top:986px;font-size:11px;line-height:15px;color:#000;transform:scaleX(0.9809);">1.36998</span>
<span class="t" style="left:40.90px;top:1006px;font-size:11px;line-height:15px;color:#000;transform:scaleX(0.9645);">30155098</span>
<span class="t" style="left:434.90px;top:1006px;font-size:11px;line-height:15px;color:#000;transform:scaleX(0.9857);">2011.02.09 16:11</span>
<span class="t" style="left:604.50px;top:1006px;font-size:11px;line-height:15px;color:#000;transform:scaleX(1.0702);">buy stop</span>
<span class="t" style="left:727.90px;top:1006px;font-size:11px;line-height:15px;color:#000;">1.00</span>
<span class="t" style="left:841.40px;top:1006px;font-size:11px;line-height:15px;color:#000;transform:scaleX(1.0494);">eurusd.</span>
<span class="t" style="left:985.60px;top:1006px;font-size:11px;line-height:15px;color:#000;transform:scaleX(0.9809);">1.38906</span>
<span class="t" style="left:1130.30px;top:1006px;font-size:11px;line-height:15px;color:#000;transform:scaleX(0.9809);">1.38289</span>
<span class="t" style="left:1275.40px;top:1006px;font-size:11px;line-height:15px;color:#000;transform:scaleX(0.9809);">0.00000</span>
<span class="t" style="left:1420.50px;top:1006px;font-size:11px;line-height:15px;color:#000;transform:scaleX(0.9809);">1.37017</span>
<span class="t" style="left:40.90px;top:1026px;font-size:11px;line-height:15px;color:#000;transform:scaleX(0.9645);">30155101</span>
<span class="t" style="left:434.90px;top:1026px;font-size:11px;line-height:15px;color:#000;transform:scaleX(0.9857);">2011.02.09 16:11</span>
<span class="t" style="left:607.50px;top:1026px;font-size:11px;line-height:15px;color:#000;transform:scaleX(1.0611);">sell limit</span>
<span class="t" style="left:727.90px;top:1026px;font-size:11px;line-height:15px;color:#000;">1.00</span>
<span class="t" style="left:841.40px;top:1026px;font-size:11px;line-height:15px;color:#000;transform:scaleX(1.0494);">eurusd.</span>
<span class="t" style="left:985.60px;top:1026px;font-size:11px;line-height:15px;color:#000;transform:scaleX(0.9809);">1.38889</span>
<span class="t" style="left:1130.30px;top:1026px;font-size:11px;line-height:15px;color:#000;transform:scaleX(0.9809);">1.39506</span>
<span class="t" style="left:1275.40px;top:1026px;font-size:11px;line-height:15px;color:#000;transform:scaleX(0.9809);">0.00000</span>
<span class="t" style="left:1420.50px;top:1026px;font-size:11px;line-height:15px;color:#000;transform:scaleX(0.9809);">1.36998</span>
<span class="t" style="left:40.90px;top:1046px;font-size:11px;line-height:15px;color:#000;transform:scaleX(0.9645);">30155103</span>
<span class="t" style="left:434.90px;top:1046px;font-size:11px;line-height:15px;color:#000;transform:scaleX(0.9857);">2011.02.09 16:11</span>
<span class="t" style="left:605.50px;top:1046px;font-size:11px;line-height:15px;color:#000;transform:scaleX(1.0783);">buy limit</span>
<span class="t" style="left:727.90px;top:1046px;font-size:11px;line-height:15px;color:#000;">1.00</span>
<span class="t" style="left:841.40px;top:1046px;font-size:11px;line-height:15px;color:#000;transform:scaleX(1.0494);">eurusd.</span>
<span class="t" style="left:985.60px;top:1046px;font-size:11px;line-height:15px;color:#000;transform:scaleX(0.9809);">1.35306</span>
<span class="t" style="left:1130.30px;top:1046px;font-size:11px;line-height:15px;color:#000;transform:scaleX(0.9809);">1.34689</span>
<span class="t" style="left:1275.40px;top:1046px;font-size:11px;line-height:15px;color:#000;transform:scaleX(0.9809);">0.00000</span>
<span class="t" style="left:1420.50px;top:1046px;font-size:11px;line-height:15px;color:#000;transform:scaleX(0.9809);">1.37017</span>
<span class="t" style="left:40.90px;top:1066px;font-size:11px;line-height:15px;color:#000;transform:scaleX(0.9645);">30155104</span>
<span class="t" style="left:434.90px;top:1066px;font-size:11px;line-height:15px;color:#000;transform:scaleX(0.9857);">2011.02.09 16:11</span>
<span class="t" style="left:606.50px;top:1066px;font-size:11px;line-height:15px;color:#000;transform:scaleX(1.0532);">sell stop</span>
<span class="t" style="left:727.90px;top:1066px;font-size:11px;line-height:15px;color:#000;">1.00</span>
<span class="t" style="left:841.40px;top:1066px;font-size:11px;line-height:15px;color:#000;transform:scaleX(1.0494);">eurusd.</span>
<span class="t" style="left:985.60px;top:1066px;font-size:11px;line-height:15px;color:#000;transform:scaleX(0.9809);">1.35289</span>
<span class="t" style="left:1130.30px;top:1066px;font-size:11px;line-height:15px;color:#000;transform:scaleX(0.9809);">1.35906</span>
<span class="t" style="left:1275.40px;top:1066px;font-size:11px;line-height:15px;color:#000;transform:scaleX(0.9809);">0.00000</span>
<span class="t" style="left:1420.50px;top:1066px;font-size:11px;line-height:15px;color:#000;transform:scaleX(0.9809);">1.36998</span>
<div class="r" style="left:16px;top:1115px;width:1901px;height:1px;background:#000;"></div>
<div class="r" style="left:18px;top:1115px;width:80px;height:18px;background:#fff;border:1px solid #000;border-top:none;box-sizing:border-box;box-shadow:1px 1px 0 #707070;"></div>
<span class="t" style="left:27.30px;top:1117px;font-size:11px;line-height:15px;color:#000;transform:scaleX(0.9653);">Operaciones</span>
<span class="t" style="left:106.80px;top:1118px;font-size:11px;line-height:15px;color:#707070;transform:scaleX(0.9772);">Historial de cuentas</span>
<span class="t" style="left:221.70px;top:1118px;font-size:11px;line-height:15px;color:#707070;transform:scaleX(0.9503);">Avisos</span>
<span class="t" style="left:272.30px;top:1118px;font-size:11px;line-height:15px;color:#707070;transform:scaleX(0.9362);">Buzón</span>
<span class="t" style="left:321.20px;top:1118px;font-size:11px;line-height:15px;color:#707070;">Expertos</span>
<span class="t" style="left:383.90px;top:1118px;font-size:11px;line-height:15px;color:#707070;transform:scaleX(0.9503);">Diario</span>
<div class="r" style="left:212px;top:1119px;width:1px;height:12px;background:#707070;"></div>
<div class="r" style="left:263px;top:1119px;width:1px;height:12px;background:#707070;"></div>
<div class="r" style="left:312px;top:1119px;width:1px;height:12px;background:#707070;"></div>
<div class="r" style="left:375px;top:1119px;width:1px;height:12px;background:#707070;"></div>
<div class="r" style="left:422px;top:1119px;width:1px;height:12px;background:#707070;"></div>
<div class="r" style="left:0px;top:1137px;width:1920px;height:1px;background:#a0a0a0;"></div>
<div class="r" style="left:0px;top:1138px;width:1920px;height:1px;background:#fcfcfc;"></div>
<div class="r" style="left:1194px;top:1143px;width:1px;height:15px;background:#a8a8a8;"></div>
<div class="r" style="left:1310px;top:1143px;width:1px;height:15px;background:#a8a8a8;"></div>
<div class="r" style="left:1412px;top:1143px;width:1px;height:15px;background:#a8a8a8;"></div>
<div class="r" style="left:1483px;top:1143px;width:1px;height:15px;background:#a8a8a8;"></div>
<div class="r" style="left:1554px;top:1143px;width:1px;height:15px;background:#a8a8a8;"></div>
<div class="r" style="left:1622px;top:1143px;width:1px;height:15px;background:#a8a8a8;"></div>
<div class="r" style="left:1692px;top:1143px;width:1px;height:15px;background:#a8a8a8;"></div>
<div class="r" style="left:1758px;top:1143px;width:1px;height:15px;background:#a8a8a8;"></div>
<span class="t" style="left:1200.40px;top:1144px;font-size:11px;line-height:15px;color:#000;transform:scaleX(1.0760);">Default</span>
<span class="t" style="left:1820.40px;top:1144px;font-size:11px;line-height:15px;color:#000;transform:scaleX(1.0266);">1932/5 kb</span>
<svg width="1920" height="1200" viewBox="0 0 1920 1200" shape-rendering="crispEdges">
<rect x="1764" y="1145" width="1.300" height="5" fill="#4a8a18"/><rect x="1764" y="1150" width="1.300" height="6" fill="#1a4a7a"/>
<rect x="1766.4" y="1145" width="1.300" height="5" fill="#4a8a18"/><rect x="1766.4" y="1150" width="1.300" height="6" fill="#1a4a7a"/>
<rect x="1768.8" y="1145" width="1.300" height="5" fill="#4a8a18"/><rect x="1768.8" y="1150" width="1.300" height="6" fill="#1a4a7a"/>
<rect x="1771.2" y="1145" width="1.300" height="5" fill="#4a8a18"/><rect x="1771.2" y="1150" width="1.300" height="6" fill="#1a4a7a"/>
<rect x="1773.6" y="1145" width="1.300" height="5" fill="#4a8a18"/><rect x="1773.6" y="1150" width="1.300" height="6" fill="#1a4a7a"/>
<rect x="1776" y="1145" width="1.300" height="5" fill="#4a8a18"/><rect x="1776" y="1150" width="1.300" height="6" fill="#1a4a7a"/>
<rect x="1778.4" y="1145" width="1.300" height="5" fill="#2a5a8a"/><rect x="1778.4" y="1150" width="1.300" height="6" fill="#1a4a7a"/>
<rect x="1780.8" y="1145" width="1.300" height="5" fill="#2a5a8a"/><rect x="1780.8" y="1150" width="1.300" height="6" fill="#1a4a7a"/>
<rect x="1783.2" y="1145" width="1.300" height="5" fill="#2a5a8a"/><rect x="1783.2" y="1150" width="1.300" height="6" fill="#1a4a7a"/>
<rect x="1785.6" y="1145" width="1.300" height="5" fill="#2a5a8a"/><rect x="1785.6" y="1150" width="1.300" height="6" fill="#1a4a7a"/>
<path d="M1908,1159 l11,-11 M1912,1159 l7,-7 M1916,1159 l3,-3" stroke="#b0b0b0" shape-rendering="auto"/>
</svg>
<div class="r" style="left:0px;top:1160px;width:1920px;height:40px;background:linear-gradient(90deg,#8d7b93 0,#9a89a0 120px,#8a7790 240px,#9b8aa1 500px,#8f7c96 540px,#b7a6bd 560px,#8e7b95 585px,#ad9cb4 615px,#c4b4ca 680px,#c9b9ce 900px,#c2b1c8 1050px,#b3a2bb 1180px,#ae9cb6 1300px,#bcaac4 1420px,#c0afc8 1600px,#b5a3bd 1750px,#a694ae 1920px);"></div>
<svg width="1920" height="1200" viewBox="0 0 1920 1200"><defs><filter id="bl" x="-20%" y="-20%" width="140%" height="140%"><feGaussianBlur stdDeviation="3"/></filter><clipPath id="tbc"><rect x="0" y="1160" width="1920" height="40"/></clipPath></defs><g clip-path="url(#tbc)" filter="url(#bl)"><path d="M1210,1155 l18,0 l70,50 l-22,0z" fill="#5e4868" fill-opacity=".55"/><path d="M1318,1155 l14,0 l45,50 l-16,0z" fill="#5e4868" fill-opacity=".5"/><path d="M1150,1155 l30,0 l50,50 l-34,0z" fill="#6a5474" fill-opacity=".3"/><path d="M1000,1200 l60,-45 l25,0 l-60,45z" fill="#e0d4e6" fill-opacity=".35"/><path d="M1430,1200 l60,-45 l40,0 l-60,45z" fill="#e0d4e6" fill-opacity=".3"/></g></svg>
<div class="r" style="left:0px;top:1160px;width:1920px;height:40px;background:linear-gradient(180deg,rgba(40,28,46,.75) 0,rgba(60,44,68,.45) 2px,rgba(70,52,78,.32) 8px,rgba(80,60,90,.12) 14px,rgba(255,255,255,0) 22px,rgba(255,255,255,.04) 40px);"></div>
<div class="r" style="left:0px;top:1160px;width:1920px;height:1px;background:#4c4252;"></div>
<svg width="1920" height="1200" viewBox="0 0 1920 1200">
<defs><radialGradient id="orb" cx="50%" cy="40%" r="60%"><stop offset="0" stop-color="#6ec0f0"/><stop offset="0.55" stop-color="#1f6fc0"/><stop offset="1" stop-color="#0a2c6a"/></radialGradient><linearGradient id="tbtn" x1="0" y1="0" x2="0" y2="1"><stop offset="0" stop-color="#ffffff" stop-opacity=".55"/><stop offset="0.45" stop-color="#ffffff" stop-opacity=".32"/><stop offset="0.5" stop-color="#ffffff" stop-opacity=".12"/><stop offset="1" stop-color="#ffffff" stop-opacity=".25"/></linearGradient><radialGradient id="xtb" cx="40%" cy="35%" r="70%"><stop offset="0" stop-color="#2f7f9c"/><stop offset="0.6" stop-color="#0c2a34"/><stop offset="1" stop-color="#04141a"/></radialGradient></defs>
<circle cx="26.500" cy="1180.500" r="18.500" fill="url(#orb)" stroke="#2a3c68" stroke-width="1.200"/><circle cx="26.500" cy="1180.500" r="17" fill="none" stroke="#bfe2ff" stroke-opacity=".5" stroke-width="1.200"/>
<path d="M17,1173.500 q4.500,-2.500 8.500,-.5 l-1.500,6.500 q-4,-2 -8.500,.5 z" fill="#f0582c"/><path d="M27.500,1173.500 q4,2 8.500,-.5 l-1.500,6.500 q-4.500,2.500 -8.500,.5 z" fill="#7fc030"/><path d="M15,1181.500 q4.500,-2.500 8.500,-.5 l-1.500,6.500 q-4,-2 -8.500,.5 z" fill="#3a9ae8"/><path d="M25.500,1181.500 q4,2 8.500,-.5 l-1.500,6.500 q-4.500,2.500 -8.500,.5 z" fill="#f8c820"/>
<ellipse cx="88" cy="1180" rx="18" ry="6" transform="rotate(-30 88 1180)" fill="none" stroke="#f2b830" stroke-width="2.200"/>
<path d="M99.500,1182.500 h-17.500 a7,7 0 0 0 13,3.500 h4.500 a11.500,11.500 0 1 1 0,-8 z M82.500,1178 h11 a5.800,5.800 0 0 0 -11,0z" fill="#2a86e0" stroke="#1a5cb0" stroke-width="0.800" fill-rule="evenodd"/>
<path d="M73,1189 q-3,6 5,3 M100,1170 q6,-7 -3,-5" fill="none" stroke="#f2b830" stroke-width="2.200"/>
<path d="M136,1171 h9 l2,2.500 h19 v19 h-30 z" fill="#f2d477" stroke="#c9a43a" stroke-width="1"/><path d="M136,1177 h30 v15.500 h-30z" fill="#f9e59a" stroke="#c9a43a" stroke-width="1"/><path d="M141,1192.500 v-8 h20 v8 h-4 v-4.500 h-12 v4.500z" fill="#6fb4ea" stroke="#3a84c8" stroke-width="1"/><rect x="139" y="1168.500" width="4" height="2.500" fill="#30a838"/><rect x="148" y="1170" width="4" height="2.500" fill="#d83020"/><rect x="156" y="1171" width="5" height="2.500" fill="#3070d0"/>
<rect x="200.500" y="1169.500" width="20" height="22" rx="2" fill="#79b7ea" stroke="#3a84c8"/><rect x="203.500" y="1171.500" width="20" height="22" rx="2" fill="#a7d0f2" stroke="#3a84c8" opacity=".6"/><circle cx="210" cy="1180.500" r="8" fill="#f07818" stroke="#fff" stroke-width="1.500"/><path d="M207.500,1176 v9 l7,-4.500z" fill="#fff"/>
<rect x="246.5" y="1161.500" width="57" height="40" rx="3" fill="url(#tbtn)" stroke="#3e3446" stroke-opacity=".85"/><rect x="247.5" y="1162.500" width="55" height="38" rx="2.500" fill="none" stroke="#fff" stroke-opacity=".55"/>
<rect x="308.5" y="1161.500" width="57" height="40" rx="3" fill="url(#tbtn)" stroke="#3e3446" stroke-opacity=".85"/><rect x="309.5" y="1162.500" width="55" height="38" rx="2.500" fill="none" stroke="#fff" stroke-opacity=".8"/>
<rect x="309" y="1162" width="56" height="38" rx="3" fill="#fff" fill-opacity=".3"/>
<rect x="370.5" y="1161.500" width="52" height="40" rx="3" fill="url(#tbtn)" stroke="#3e3446" stroke-opacity=".85"/><rect x="371.5" y="1162.500" width="50" height="38" rx="2.500" fill="none" stroke="#fff" stroke-opacity=".55"/>
<rect x="423.500" y="1161.500" width="4" height="40" fill="#fff" fill-opacity=".18" stroke="#3e3446" stroke-opacity=".7"/>
<rect x="431.5" y="1161.500" width="58" height="40" rx="3" fill="url(#tbtn)" stroke="#3e3446" stroke-opacity=".85"/><rect x="432.5" y="1162.500" width="56" height="38" rx="2.500" fill="none" stroke="#fff" stroke-opacity=".55"/>
<rect x="259" y="1163" width="32" height="33" fill="#5b9bd5"/><rect x="275" y="1163" width="6" height="33" fill="#7fb4e4"/><path d="M269,1165 v22 M264.500,1183 l4.500,5 4.500,-5z" stroke="#fff" stroke-width="3" fill="#fff"/><path d="M282,1194 v-20 M277.500,1177 l4.500,-5 4.500,5z" stroke="#fff" stroke-width="3" fill="#fff"/>
<circle cx="337" cy="1180.500" r="15.500" fill="url(#xtb)"/><path d="M326,1175 h7 l4,3.500 8,-6 3,2 -7.500,6 7.500,6.500 h-6.500 l-5,-4 -7,5 -3,-2 7,-5.500 z" fill="#e02020"/>
<path d="M385,1194 v-20 q0,-8 8,-8 q4,0 5,2 M380,1178 h12 M380,1184 h12" stroke="#fff" stroke-width="5.500" fill="none"/><path d="M385,1194 v-20 q0,-8 8,-8 q4,0 5,2 M380,1178 h12 M380,1184 h12" stroke="#222" stroke-width="3" fill="none"/><path d="M397,1179 l13,13 M410,1179 l-13,13" stroke="#222" stroke-width="5.500"/><path d="M397,1179 l13,13 M410,1179 l-13,13" stroke="#fff" stroke-width="3"/>
<circle cx="461" cy="1180.500" r="15" fill="#e8c020"/><path d="M461,1180.500 L448,1173 A15,15 0 0 1 474,1173 z" fill="#d83828"/><path d="M461,1180.500 L448,1173 A15,15 0 0 0 461,1195.500 z" fill="#38a838"/><path d="M461,1180.500 L474,1173 A15,15 0 0 1 461,1195.500 z" fill="#f0c828"/><circle cx="461" cy="1180.500" r="7" fill="#fff"/><circle cx="461" cy="1180.500" r="5.500" fill="#3c88e0"/>
<path d="M1725,1183 l4,-4.500 4,4.500z" fill="#fff"/>
<path d="M1746.500,1174 v14" stroke="#fff" stroke-width="1.600"/><path d="M1748,1175 q3,-2 6,0 t6,0 v6.500 q-3,2 -6,0 t-6,0z" fill="#fff"/>
<rect x="1774.500" y="1177.500" width="10" height="7" fill="none" stroke="#fff" stroke-width="1.400"/><path d="M1777,1187.500 h6 M1780,1185 v2.500" stroke="#fff" stroke-width="1.400"/><rect x="1770" y="1174" width="5" height="8" fill="none" stroke="#fff" stroke-width="1.200"/>
<path d="M1794,1178.500 h3 l4.500,-4 v13 l-4.500,-4 h-3z" fill="#fff"/><path d="M1803.500,1177.500 q2,3.500 0,7 M1806,1175.500 q3.500,5.500 0,11" stroke="#fff" fill="none" stroke-width="1.100"/>
<rect x="1897.500" y="1161.500" width="23" height="39" fill="#fff" fill-opacity=".14" stroke="#4a3e52" stroke-opacity=".8"/><rect x="1898.500" y="1162.500" width="21" height="37" fill="none" stroke="#fff" stroke-opacity=".35"/>
</svg>
<span class="t" style="left:1842.25px;top:1165px;font-size:12px;line-height:16px;color:#fff;transform:scaleX(0.9158);">16:15</span>
<span class="t" style="left:1827.00px;top:1182px;font-size:12px;line-height:16px;color:#fff;transform:scaleX(0.9668);">09/02/2011</span>
<svg width="1920" height="1200" viewBox="0 0 1920 1200"><ellipse cx="415.3" cy="181.5" rx="190.5" ry="107.5" fill="none" stroke="#ed1c24" stroke-width="5.6"/><rect x="998" y="837.5" width="642.2" height="88.9" rx="15.5" fill="none" stroke="#ed1c24" stroke-width="5.1"/></svg>
<span class="t" style="left:1056.00px;top:858px;font-size:16px;line-height:20px;color:#ed1c24;font-weight:bold;transform:scaleX(0.9865);">Y... ahi esta de nuevo, una nueva escalera, sin arte ni parte mia, eso si,</span>
<span class="t" style="left:1056.00px;top:877px;font-size:16px;line-height:20px;color:#ed1c24;font-weight:bold;transform:scaleX(0.9947);">ahora empieza a partir de 19800 euros, hasta los 20600, seguro que</span>
<span class="t" style="left:1056.00px;top:896px;font-size:16px;line-height:20px;color:#ed1c24;font-weight:bold;transform:scaleX(0.9680);">terminara o el viernes o el martes.</span>
</body></html>
